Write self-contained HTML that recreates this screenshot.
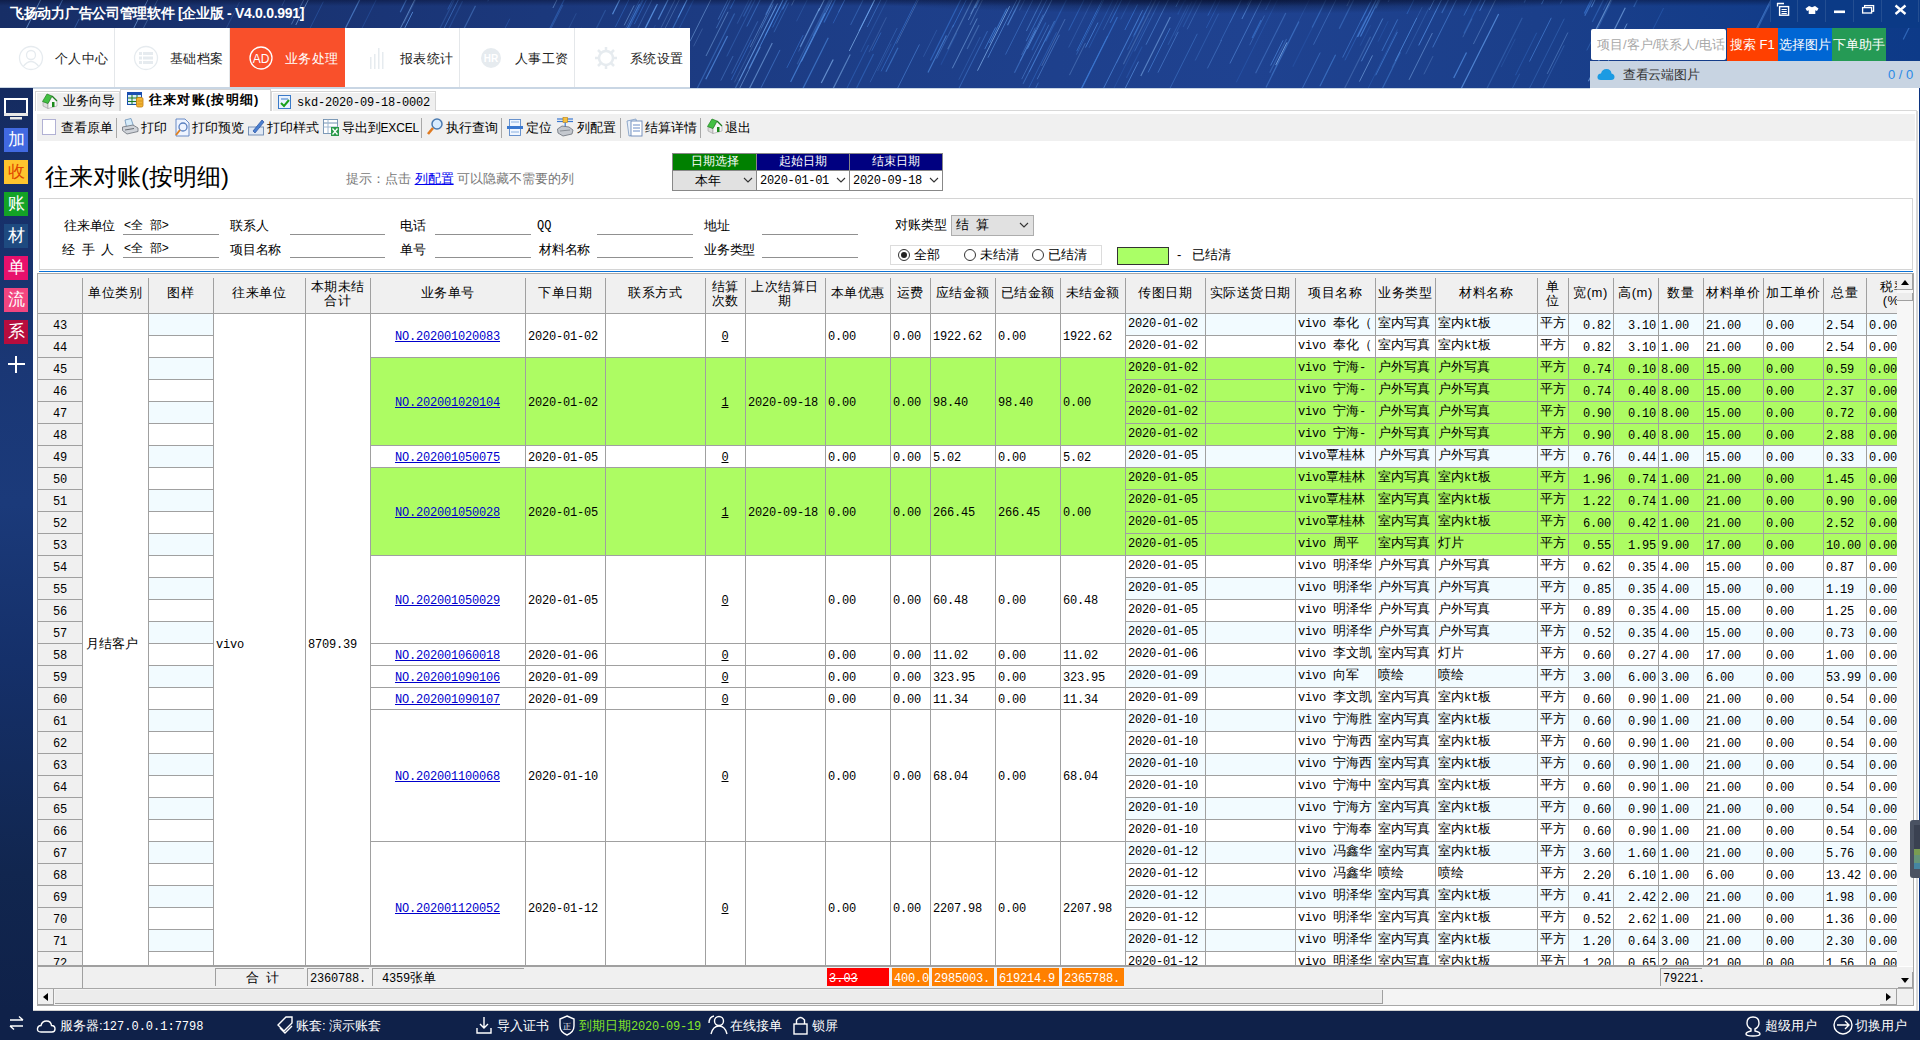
<!DOCTYPE html><html><head><meta charset="utf-8"><title>往来对账</title><style>
*{margin:0;padding:0;box-sizing:border-box}
html,body{width:1920px;height:1040px;overflow:hidden;background:#fff;font-family:"Liberation Sans", sans-serif;}
body{position:relative}
.t{position:absolute;white-space:nowrap}
.c{font-size:13px;color:#000}
.tb{font-size:12px;color:#000;line-height:16px}
.m{font-family:'Liberation Mono', monospace;}
.gl{position:absolute;background:#a0a0a0}
</style></head><body>
<div style="position:absolute;left:0;top:0;width:1920px;height:88px;background:linear-gradient(90deg,#172e66 0%,#1a3576 20%,#1d3e88 45%,#1f4290 65%,#1b3f8a 80%,#0d3a88 100%)"></div>
<svg style="position:absolute;left:0;top:0" width="1920" height="88"><line x1="895.7" y1="92.0" x2="919.5" y2="44.4" stroke="#5a9af0" stroke-opacity="0.45" stroke-width="1.0"/><line x1="1247.2" y1="4.9" x2="1265.3" y2="-31.4" stroke="#4f8fe6" stroke-opacity="0.25" stroke-width="1.2"/><line x1="1218.8" y1="-3.4" x2="1244.8" y2="-55.4" stroke="#69a6f5" stroke-opacity="0.23" stroke-width="1.0"/><line x1="1187.2" y1="29.3" x2="1215.4" y2="-27.1" stroke="#69a6f5" stroke-opacity="0.30" stroke-width="1.0"/><line x1="989.6" y1="43.0" x2="1006.8" y2="8.5" stroke="#4f8fe6" stroke-opacity="0.70" stroke-width="1.0"/><line x1="624.2" y1="25.3" x2="634.2" y2="5.4" stroke="#8cbcf5" stroke-opacity="0.58" stroke-width="0.8"/><line x1="1541.5" y1="4.2" x2="1560.6" y2="-34.1" stroke="#4f8fe6" stroke-opacity="0.68" stroke-width="1.0"/><line x1="487.8" y1="1.3" x2="523.2" y2="-69.5" stroke="#5a9af0" stroke-opacity="0.29" stroke-width="1.0"/><line x1="885.9" y1="71.8" x2="898.0" y2="47.7" stroke="#4f8fe6" stroke-opacity="0.52" stroke-width="1.2"/><line x1="833.1" y1="23.3" x2="874.6" y2="-59.6" stroke="#3b79d6" stroke-opacity="0.60" stroke-width="0.8"/><line x1="422.2" y1="76.1" x2="441.2" y2="38.1" stroke="#4f8fe6" stroke-opacity="0.35" stroke-width="0.8"/><line x1="736.0" y1="95.7" x2="760.4" y2="46.8" stroke="#8cbcf5" stroke-opacity="0.49" stroke-width="1.0"/><line x1="1241.9" y1="19.0" x2="1270.8" y2="-38.8" stroke="#69a6f5" stroke-opacity="0.56" stroke-width="1.0"/><line x1="1360.2" y1="45.7" x2="1370.5" y2="25.2" stroke="#4f8fe6" stroke-opacity="0.22" stroke-width="0.8"/><line x1="1014.5" y1="72.7" x2="1035.7" y2="30.3" stroke="#5a9af0" stroke-opacity="0.41" stroke-width="1.2"/><line x1="581.0" y1="70.6" x2="590.9" y2="50.8" stroke="#5a9af0" stroke-opacity="0.31" stroke-width="0.8"/><line x1="403.9" y1="23.3" x2="427.0" y2="-22.9" stroke="#69a6f5" stroke-opacity="0.23" stroke-width="1.0"/><line x1="730.2" y1="8.8" x2="750.4" y2="-31.5" stroke="#3b79d6" stroke-opacity="0.65" stroke-width="1.0"/><line x1="1168.0" y1="44.9" x2="1188.0" y2="4.8" stroke="#4f8fe6" stroke-opacity="0.36" stroke-width="0.8"/><line x1="1184.8" y1="2.1" x2="1203.2" y2="-34.7" stroke="#4f8fe6" stroke-opacity="0.27" stroke-width="0.8"/><line x1="897.1" y1="-0.3" x2="937.4" y2="-80.9" stroke="#69a6f5" stroke-opacity="0.57" stroke-width="1.0"/><line x1="696.6" y1="89.6" x2="734.6" y2="13.6" stroke="#4f8fe6" stroke-opacity="0.41" stroke-width="1.2"/><line x1="1134.2" y1="35.1" x2="1162.1" y2="-20.6" stroke="#4f8fe6" stroke-opacity="0.50" stroke-width="0.8"/><line x1="1266.0" y1="87.4" x2="1299.0" y2="21.4" stroke="#5a9af0" stroke-opacity="0.39" stroke-width="1.2"/><line x1="872.2" y1="3.8" x2="906.0" y2="-63.7" stroke="#5a9af0" stroke-opacity="0.21" stroke-width="0.8"/><line x1="952.3" y1="68.3" x2="977.2" y2="18.5" stroke="#8cbcf5" stroke-opacity="0.51" stroke-width="1.0"/><line x1="1026.4" y1="31.0" x2="1066.5" y2="-49.2" stroke="#69a6f5" stroke-opacity="0.45" stroke-width="1.0"/><line x1="801.4" y1="61.6" x2="837.0" y2="-9.7" stroke="#69a6f5" stroke-opacity="0.58" stroke-width="1.0"/><line x1="761.1" y1="28.2" x2="773.4" y2="3.7" stroke="#4f8fe6" stroke-opacity="0.45" stroke-width="0.8"/><line x1="544.8" y1="38.5" x2="574.2" y2="-20.3" stroke="#3b79d6" stroke-opacity="0.45" stroke-width="1.2"/><line x1="634.3" y1="24.2" x2="663.0" y2="-33.3" stroke="#3b79d6" stroke-opacity="0.54" stroke-width="1.0"/><line x1="611.9" y1="-3.0" x2="624.1" y2="-27.5" stroke="#4f8fe6" stroke-opacity="0.43" stroke-width="1.0"/><line x1="470.1" y1="-0.1" x2="499.6" y2="-59.1" stroke="#5a9af0" stroke-opacity="0.42" stroke-width="1.0"/><line x1="353.8" y1="44.6" x2="386.3" y2="-20.4" stroke="#3b79d6" stroke-opacity="0.29" stroke-width="1.0"/><line x1="1068.6" y1="47.5" x2="1111.0" y2="-37.2" stroke="#69a6f5" stroke-opacity="0.28" stroke-width="0.8"/><line x1="812.8" y1="35.7" x2="836.0" y2="-10.8" stroke="#4f8fe6" stroke-opacity="0.30" stroke-width="1.2"/><line x1="1089.0" y1="47.8" x2="1125.2" y2="-24.6" stroke="#3b79d6" stroke-opacity="0.37" stroke-width="1.0"/><line x1="772.6" y1="27.5" x2="814.3" y2="-55.8" stroke="#3b79d6" stroke-opacity="0.67" stroke-width="0.8"/><line x1="690.0" y1="41.3" x2="716.8" y2="-12.2" stroke="#8cbcf5" stroke-opacity="0.58" stroke-width="0.8"/><line x1="849.3" y1="51.0" x2="880.8" y2="-12.1" stroke="#8cbcf5" stroke-opacity="0.66" stroke-width="1.0"/><line x1="1026.1" y1="41.2" x2="1064.4" y2="-35.4" stroke="#4f8fe6" stroke-opacity="0.49" stroke-width="1.0"/><line x1="870.1" y1="82.3" x2="897.2" y2="28.0" stroke="#5a9af0" stroke-opacity="0.28" stroke-width="1.0"/><line x1="617.2" y1="83.8" x2="656.2" y2="5.7" stroke="#69a6f5" stroke-opacity="0.30" stroke-width="1.0"/><line x1="1134.5" y1="51.3" x2="1159.6" y2="1.0" stroke="#4f8fe6" stroke-opacity="0.50" stroke-width="0.8"/><line x1="1021.7" y1="79.1" x2="1048.9" y2="24.7" stroke="#69a6f5" stroke-opacity="0.45" stroke-width="0.8"/><line x1="800.2" y1="46.8" x2="819.6" y2="8.0" stroke="#8cbcf5" stroke-opacity="0.65" stroke-width="1.0"/><line x1="1390.2" y1="-1.3" x2="1403.1" y2="-27.1" stroke="#3b79d6" stroke-opacity="0.21" stroke-width="1.0"/><line x1="1432.7" y1="47.4" x2="1457.7" y2="-2.6" stroke="#5a9af0" stroke-opacity="0.49" stroke-width="1.0"/><line x1="1739.9" y1="61.5" x2="1776.3" y2="-11.3" stroke="#5a9af0" stroke-opacity="0.51" stroke-width="1.0"/><line x1="432.3" y1="52.0" x2="460.4" y2="-4.1" stroke="#3b79d6" stroke-opacity="0.27" stroke-width="1.0"/><line x1="625.4" y1="91.9" x2="640.6" y2="61.6" stroke="#4f8fe6" stroke-opacity="0.70" stroke-width="1.0"/><line x1="860.9" y1="52.0" x2="893.1" y2="-12.3" stroke="#4f8fe6" stroke-opacity="0.30" stroke-width="0.8"/><line x1="1501.1" y1="67.0" x2="1515.3" y2="38.8" stroke="#4f8fe6" stroke-opacity="0.24" stroke-width="0.8"/><line x1="1019.4" y1="10.4" x2="1033.3" y2="-17.5" stroke="#69a6f5" stroke-opacity="0.30" stroke-width="1.0"/><line x1="1835.2" y1="1.5" x2="1876.0" y2="-80.1" stroke="#4f8fe6" stroke-opacity="0.43" stroke-width="1.0"/><line x1="774.0" y1="32.2" x2="788.8" y2="2.5" stroke="#4f8fe6" stroke-opacity="0.39" stroke-width="1.0"/><line x1="1463.9" y1="15.5" x2="1477.2" y2="-11.1" stroke="#4f8fe6" stroke-opacity="0.46" stroke-width="1.0"/><line x1="1395.2" y1="61.1" x2="1416.9" y2="17.8" stroke="#5a9af0" stroke-opacity="0.50" stroke-width="1.0"/><line x1="1593.5" y1="90.7" x2="1627.1" y2="23.6" stroke="#8cbcf5" stroke-opacity="0.59" stroke-width="1.0"/><line x1="1375.7" y1="75.3" x2="1397.4" y2="31.9" stroke="#4f8fe6" stroke-opacity="0.56" stroke-width="1.0"/><line x1="597.3" y1="88.2" x2="639.5" y2="3.9" stroke="#4f8fe6" stroke-opacity="0.65" stroke-width="1.0"/><line x1="591.8" y1="37.6" x2="605.6" y2="9.9" stroke="#5a9af0" stroke-opacity="0.24" stroke-width="1.2"/><line x1="1271.7" y1="75.0" x2="1313.5" y2="-8.6" stroke="#5a9af0" stroke-opacity="0.21" stroke-width="0.8"/><line x1="1462.8" y1="37.2" x2="1472.1" y2="18.6" stroke="#8cbcf5" stroke-opacity="0.30" stroke-width="0.8"/><line x1="1005.5" y1="54.6" x2="1047.8" y2="-30.0" stroke="#4f8fe6" stroke-opacity="0.52" stroke-width="0.8"/><line x1="765.1" y1="35.5" x2="806.6" y2="-47.4" stroke="#5a9af0" stroke-opacity="0.63" stroke-width="0.8"/><line x1="850.6" y1="24.9" x2="872.0" y2="-18.0" stroke="#5a9af0" stroke-opacity="0.36" stroke-width="1.0"/><line x1="956.8" y1="92.6" x2="987.5" y2="31.1" stroke="#4f8fe6" stroke-opacity="0.57" stroke-width="0.8"/><line x1="1529.5" y1="61.5" x2="1551.3" y2="17.8" stroke="#4f8fe6" stroke-opacity="0.54" stroke-width="1.0"/><line x1="1481.8" y1="98.8" x2="1522.3" y2="17.7" stroke="#69a6f5" stroke-opacity="0.24" stroke-width="1.2"/><line x1="1423.9" y1="74.3" x2="1433.0" y2="56.1" stroke="#8cbcf5" stroke-opacity="0.25" stroke-width="1.0"/><line x1="1195.2" y1="60.5" x2="1218.6" y2="13.6" stroke="#4f8fe6" stroke-opacity="0.30" stroke-width="1.0"/><line x1="1045.6" y1="41.5" x2="1076.5" y2="-20.3" stroke="#3b79d6" stroke-opacity="0.43" stroke-width="1.2"/><line x1="720.8" y1="80.6" x2="733.1" y2="56.0" stroke="#69a6f5" stroke-opacity="0.35" stroke-width="1.0"/><line x1="952.6" y1="27.4" x2="977.8" y2="-23.1" stroke="#3b79d6" stroke-opacity="0.62" stroke-width="1.0"/><line x1="1207.4" y1="68.4" x2="1221.6" y2="40.1" stroke="#69a6f5" stroke-opacity="0.34" stroke-width="1.0"/><line x1="1292.8" y1="66.7" x2="1322.3" y2="7.7" stroke="#3b79d6" stroke-opacity="0.20" stroke-width="1.2"/><line x1="53.3" y1="18.4" x2="70.5" y2="-16.1" stroke="#69a6f5" stroke-opacity="0.58" stroke-width="1.0"/><line x1="1249.6" y1="45.2" x2="1264.5" y2="15.5" stroke="#69a6f5" stroke-opacity="0.37" stroke-width="0.8"/><line x1="1588.5" y1="81.3" x2="1625.3" y2="7.7" stroke="#8cbcf5" stroke-opacity="0.58" stroke-width="1.2"/><line x1="1479.7" y1="10.8" x2="1492.6" y2="-14.9" stroke="#5a9af0" stroke-opacity="0.62" stroke-width="1.0"/><line x1="1635.8" y1="63.6" x2="1663.6" y2="8.0" stroke="#3b79d6" stroke-opacity="0.43" stroke-width="0.8"/><line x1="1076.4" y1="54.6" x2="1112.4" y2="-17.4" stroke="#4f8fe6" stroke-opacity="0.43" stroke-width="0.8"/><line x1="614.1" y1="58.4" x2="645.9" y2="-5.3" stroke="#3b79d6" stroke-opacity="0.45" stroke-width="1.0"/><line x1="1301.4" y1="90.2" x2="1320.2" y2="52.6" stroke="#5a9af0" stroke-opacity="0.42" stroke-width="1.0"/><line x1="867.2" y1="27.0" x2="885.8" y2="-10.2" stroke="#5a9af0" stroke-opacity="0.40" stroke-width="1.0"/><line x1="1157.9" y1="72.6" x2="1178.3" y2="31.8" stroke="#69a6f5" stroke-opacity="0.40" stroke-width="1.0"/><line x1="1077.4" y1="96.5" x2="1107.7" y2="35.9" stroke="#4f8fe6" stroke-opacity="0.60" stroke-width="1.0"/><line x1="1560.4" y1="3.6" x2="1593.7" y2="-63.0" stroke="#4f8fe6" stroke-opacity="0.65" stroke-width="0.8"/><line x1="1255.6" y1="73.3" x2="1285.8" y2="12.9" stroke="#69a6f5" stroke-opacity="0.32" stroke-width="1.2"/><line x1="1515.4" y1="75.3" x2="1536.7" y2="32.7" stroke="#3b79d6" stroke-opacity="0.37" stroke-width="1.0"/><line x1="977.5" y1="70.7" x2="1009.7" y2="6.1" stroke="#8cbcf5" stroke-opacity="0.66" stroke-width="1.0"/><line x1="1037.2" y1="79.2" x2="1059.5" y2="34.7" stroke="#69a6f5" stroke-opacity="0.41" stroke-width="1.0"/><line x1="743.5" y1="16.5" x2="765.9" y2="-28.3" stroke="#4f8fe6" stroke-opacity="0.35" stroke-width="1.2"/><line x1="610.7" y1="63.0" x2="645.4" y2="-6.3" stroke="#4f8fe6" stroke-opacity="0.29" stroke-width="1.2"/><line x1="1584.8" y1="15.8" x2="1604.9" y2="-24.4" stroke="#5a9af0" stroke-opacity="0.49" stroke-width="1.2"/><line x1="1177.7" y1="14.4" x2="1195.0" y2="-20.3" stroke="#3b79d6" stroke-opacity="0.29" stroke-width="1.2"/><line x1="797.2" y1="64.3" x2="831.7" y2="-4.7" stroke="#69a6f5" stroke-opacity="0.25" stroke-width="1.2"/><line x1="1586.8" y1="50.4" x2="1612.4" y2="-0.7" stroke="#4f8fe6" stroke-opacity="0.34" stroke-width="1.0"/><line x1="1528.4" y1="90.4" x2="1564.3" y2="18.7" stroke="#5a9af0" stroke-opacity="0.27" stroke-width="1.0"/><line x1="1021.6" y1="55.0" x2="1035.3" y2="27.6" stroke="#69a6f5" stroke-opacity="0.30" stroke-width="1.0"/><line x1="1418.7" y1="45.4" x2="1442.6" y2="-2.4" stroke="#5a9af0" stroke-opacity="0.68" stroke-width="1.0"/><line x1="1547.2" y1="-1.1" x2="1569.2" y2="-45.0" stroke="#3b79d6" stroke-opacity="0.45" stroke-width="1.0"/><line x1="615.3" y1="27.1" x2="639.1" y2="-20.6" stroke="#3b79d6" stroke-opacity="0.56" stroke-width="0.8"/><line x1="1360.4" y1="36.4" x2="1384.1" y2="-10.9" stroke="#4f8fe6" stroke-opacity="0.68" stroke-width="1.2"/><line x1="1405.8" y1="54.2" x2="1429.3" y2="7.2" stroke="#69a6f5" stroke-opacity="0.21" stroke-width="1.0"/><line x1="1068.7" y1="30.4" x2="1090.0" y2="-12.0" stroke="#3b79d6" stroke-opacity="0.53" stroke-width="1.0"/><line x1="652.2" y1="54.1" x2="685.0" y2="-11.6" stroke="#8cbcf5" stroke-opacity="0.37" stroke-width="0.8"/><line x1="354.9" y1="-1.2" x2="378.6" y2="-48.6" stroke="#4f8fe6" stroke-opacity="0.55" stroke-width="1.0"/><line x1="859.0" y1="30.9" x2="895.3" y2="-41.8" stroke="#69a6f5" stroke-opacity="0.66" stroke-width="1.0"/><line x1="764.2" y1="38.3" x2="772.2" y2="22.2" stroke="#3b79d6" stroke-opacity="0.40" stroke-width="1.0"/><line x1="1307.3" y1="-3.1" x2="1326.3" y2="-41.2" stroke="#8cbcf5" stroke-opacity="0.37" stroke-width="0.8"/><line x1="1103.3" y1="29.9" x2="1121.0" y2="-5.6" stroke="#69a6f5" stroke-opacity="0.25" stroke-width="1.0"/><line x1="1085.5" y1="47.5" x2="1098.0" y2="22.6" stroke="#5a9af0" stroke-opacity="0.56" stroke-width="1.0"/><line x1="1123.4" y1="64.2" x2="1158.1" y2="-5.1" stroke="#8cbcf5" stroke-opacity="0.27" stroke-width="1.2"/><line x1="1380.3" y1="92.6" x2="1400.4" y2="52.3" stroke="#4f8fe6" stroke-opacity="0.43" stroke-width="1.2"/><line x1="1110.2" y1="22.8" x2="1149.6" y2="-55.9" stroke="#3b79d6" stroke-opacity="0.70" stroke-width="1.0"/><line x1="1644.9" y1="52.5" x2="1655.1" y2="32.2" stroke="#69a6f5" stroke-opacity="0.22" stroke-width="1.0"/><line x1="609.1" y1="72.5" x2="630.0" y2="30.7" stroke="#4f8fe6" stroke-opacity="0.50" stroke-width="1.0"/><line x1="1127.6" y1="49.6" x2="1144.4" y2="16.1" stroke="#3b79d6" stroke-opacity="0.48" stroke-width="0.8"/><line x1="1270.6" y1="65.5" x2="1283.1" y2="40.3" stroke="#5a9af0" stroke-opacity="0.68" stroke-width="0.8"/><line x1="930.4" y1="60.5" x2="962.0" y2="-2.8" stroke="#3b79d6" stroke-opacity="0.58" stroke-width="1.2"/><line x1="1633.7" y1="7.0" x2="1674.1" y2="-73.7" stroke="#5a9af0" stroke-opacity="0.37" stroke-width="1.2"/><line x1="832.3" y1="90.3" x2="850.2" y2="54.5" stroke="#8cbcf5" stroke-opacity="0.51" stroke-width="1.2"/><line x1="1183.1" y1="27.0" x2="1211.4" y2="-29.5" stroke="#4f8fe6" stroke-opacity="0.23" stroke-width="1.2"/><line x1="1079.1" y1="93.7" x2="1117.4" y2="17.1" stroke="#3b79d6" stroke-opacity="0.70" stroke-width="1.2"/><line x1="1116.6" y1="63.2" x2="1138.9" y2="18.7" stroke="#4f8fe6" stroke-opacity="0.26" stroke-width="0.8"/><line x1="1028.9" y1="87.6" x2="1056.5" y2="32.3" stroke="#3b79d6" stroke-opacity="0.43" stroke-width="1.0"/><line x1="1441.8" y1="13.1" x2="1464.7" y2="-32.8" stroke="#5a9af0" stroke-opacity="0.43" stroke-width="1.2"/><line x1="457.0" y1="42.8" x2="475.5" y2="5.8" stroke="#69a6f5" stroke-opacity="0.36" stroke-width="1.2"/><line x1="1381.9" y1="51.0" x2="1397.7" y2="19.4" stroke="#4f8fe6" stroke-opacity="0.67" stroke-width="0.8"/><line x1="606.0" y1="95.9" x2="623.1" y2="61.8" stroke="#69a6f5" stroke-opacity="0.41" stroke-width="1.0"/><line x1="1378.0" y1="41.7" x2="1388.2" y2="21.2" stroke="#3b79d6" stroke-opacity="0.31" stroke-width="0.8"/><line x1="1406.9" y1="14.0" x2="1422.6" y2="-17.5" stroke="#3b79d6" stroke-opacity="0.53" stroke-width="1.0"/><line x1="1591.4" y1="7.2" x2="1616.9" y2="-44.0" stroke="#69a6f5" stroke-opacity="0.69" stroke-width="1.0"/><line x1="871.9" y1="50.7" x2="881.0" y2="32.6" stroke="#3b79d6" stroke-opacity="0.50" stroke-width="1.0"/><line x1="838.4" y1="12.3" x2="880.5" y2="-71.9" stroke="#69a6f5" stroke-opacity="0.29" stroke-width="1.0"/><line x1="1453.7" y1="78.0" x2="1466.5" y2="52.4" stroke="#5a9af0" stroke-opacity="0.65" stroke-width="1.2"/><line x1="119.2" y1="76.6" x2="158.6" y2="-2.1" stroke="#8cbcf5" stroke-opacity="0.36" stroke-width="0.8"/><line x1="1023.1" y1="83.8" x2="1054.6" y2="20.9" stroke="#5a9af0" stroke-opacity="0.46" stroke-width="1.0"/><line x1="1175.9" y1="6.8" x2="1198.6" y2="-38.7" stroke="#5a9af0" stroke-opacity="0.53" stroke-width="1.0"/><line x1="987.9" y1="57.7" x2="1020.5" y2="-7.4" stroke="#69a6f5" stroke-opacity="0.49" stroke-width="1.0"/><line x1="300.6" y1="47.1" x2="323.3" y2="1.7" stroke="#3b79d6" stroke-opacity="0.42" stroke-width="0.8"/><line x1="1126.4" y1="78.1" x2="1142.2" y2="46.5" stroke="#3b79d6" stroke-opacity="0.27" stroke-width="1.2"/><line x1="1230.0" y1="22.8" x2="1258.1" y2="-33.4" stroke="#5a9af0" stroke-opacity="0.24" stroke-width="1.0"/><line x1="750.1" y1="47.2" x2="780.7" y2="-14.0" stroke="#8cbcf5" stroke-opacity="0.50" stroke-width="0.8"/><line x1="625.3" y1="68.4" x2="657.4" y2="4.1" stroke="#69a6f5" stroke-opacity="0.68" stroke-width="1.2"/><line x1="1032.9" y1="-4.6" x2="1054.8" y2="-48.3" stroke="#4f8fe6" stroke-opacity="0.46" stroke-width="1.2"/><line x1="1101.1" y1="93.2" x2="1142.6" y2="10.2" stroke="#5a9af0" stroke-opacity="0.54" stroke-width="1.0"/><line x1="585.5" y1="84.8" x2="607.6" y2="40.5" stroke="#69a6f5" stroke-opacity="0.24" stroke-width="1.0"/><line x1="611.4" y1="91.9" x2="626.6" y2="61.6" stroke="#5a9af0" stroke-opacity="0.28" stroke-width="0.8"/><line x1="1460.1" y1="90.8" x2="1498.6" y2="13.9" stroke="#69a6f5" stroke-opacity="0.66" stroke-width="1.2"/><line x1="1592.2" y1="37.0" x2="1620.5" y2="-19.5" stroke="#8cbcf5" stroke-opacity="0.58" stroke-width="1.2"/><line x1="970.6" y1="14.1" x2="995.2" y2="-35.0" stroke="#8cbcf5" stroke-opacity="0.47" stroke-width="0.8"/><line x1="1027.4" y1="48.8" x2="1054.8" y2="-5.9" stroke="#69a6f5" stroke-opacity="0.52" stroke-width="1.0"/><line x1="204.8" y1="71.4" x2="239.4" y2="2.1" stroke="#69a6f5" stroke-opacity="0.27" stroke-width="0.8"/><line x1="761.1" y1="87.7" x2="780.0" y2="49.9" stroke="#5a9af0" stroke-opacity="0.59" stroke-width="0.8"/><line x1="967.1" y1="49.0" x2="979.1" y2="25.0" stroke="#8cbcf5" stroke-opacity="0.30" stroke-width="1.2"/><line x1="947.7" y1="49.3" x2="974.4" y2="-4.1" stroke="#8cbcf5" stroke-opacity="0.36" stroke-width="1.2"/><line x1="291.4" y1="24.4" x2="323.9" y2="-40.5" stroke="#8cbcf5" stroke-opacity="0.40" stroke-width="1.0"/><line x1="447.6" y1="31.2" x2="462.6" y2="1.1" stroke="#4f8fe6" stroke-opacity="0.22" stroke-width="1.2"/><line x1="1120.6" y1="97.4" x2="1138.5" y2="61.6" stroke="#69a6f5" stroke-opacity="0.54" stroke-width="1.0"/><line x1="1319.9" y1="86.2" x2="1335.6" y2="54.8" stroke="#4f8fe6" stroke-opacity="0.52" stroke-width="1.2"/><line x1="970.0" y1="24.9" x2="1002.1" y2="-39.4" stroke="#8cbcf5" stroke-opacity="0.31" stroke-width="1.0"/><line x1="940.9" y1="64.8" x2="956.8" y2="33.1" stroke="#3b79d6" stroke-opacity="0.25" stroke-width="1.2"/><line x1="1592.3" y1="22.0" x2="1629.7" y2="-52.7" stroke="#4f8fe6" stroke-opacity="0.35" stroke-width="1.2"/><line x1="746.8" y1="26.5" x2="779.5" y2="-38.8" stroke="#4f8fe6" stroke-opacity="0.64" stroke-width="0.8"/><line x1="739.1" y1="80.6" x2="777.6" y2="3.5" stroke="#8cbcf5" stroke-opacity="0.52" stroke-width="1.0"/><line x1="1140.8" y1="76.0" x2="1170.3" y2="17.1" stroke="#8cbcf5" stroke-opacity="0.51" stroke-width="1.2"/><line x1="126.0" y1="43.7" x2="149.2" y2="-2.8" stroke="#8cbcf5" stroke-opacity="0.68" stroke-width="0.8"/><line x1="936.6" y1="58.6" x2="953.6" y2="24.7" stroke="#69a6f5" stroke-opacity="0.33" stroke-width="1.0"/><line x1="1030.8" y1="97.9" x2="1038.4" y2="82.6" stroke="#5a9af0" stroke-opacity="0.47" stroke-width="0.8"/><line x1="1236.3" y1="82.3" x2="1277.7" y2="-0.6" stroke="#3b79d6" stroke-opacity="0.37" stroke-width="0.8"/><line x1="1359.4" y1="81.6" x2="1372.5" y2="55.4" stroke="#8cbcf5" stroke-opacity="0.51" stroke-width="1.0"/><line x1="731.7" y1="73.6" x2="757.8" y2="21.3" stroke="#69a6f5" stroke-opacity="0.32" stroke-width="1.0"/><line x1="643.5" y1="48.9" x2="655.4" y2="25.1" stroke="#4f8fe6" stroke-opacity="0.23" stroke-width="0.8"/><line x1="1344.9" y1="60.3" x2="1366.9" y2="16.4" stroke="#3b79d6" stroke-opacity="0.44" stroke-width="1.0"/><line x1="786.8" y1="67.9" x2="803.2" y2="35.1" stroke="#3b79d6" stroke-opacity="0.52" stroke-width="1.0"/><line x1="1269.7" y1="72.7" x2="1286.6" y2="38.9" stroke="#69a6f5" stroke-opacity="0.28" stroke-width="1.2"/><line x1="1229.9" y1="63.5" x2="1271.5" y2="-19.7" stroke="#69a6f5" stroke-opacity="0.44" stroke-width="1.0"/><line x1="1361.4" y1="61.3" x2="1382.8" y2="18.5" stroke="#69a6f5" stroke-opacity="0.67" stroke-width="0.8"/><line x1="705.8" y1="79.2" x2="727.5" y2="35.9" stroke="#5a9af0" stroke-opacity="0.65" stroke-width="1.2"/><line x1="339.0" y1="41.1" x2="377.0" y2="-34.8" stroke="#69a6f5" stroke-opacity="0.52" stroke-width="1.2"/><line x1="1429.3" y1="9.9" x2="1457.0" y2="-45.4" stroke="#69a6f5" stroke-opacity="0.54" stroke-width="1.0"/><line x1="1584.3" y1="13.4" x2="1595.6" y2="-9.1" stroke="#3b79d6" stroke-opacity="0.67" stroke-width="1.2"/><line x1="856.6" y1="87.9" x2="873.5" y2="54.0" stroke="#3b79d6" stroke-opacity="0.48" stroke-width="1.2"/><line x1="542.5" y1="45.6" x2="562.9" y2="5.0" stroke="#4f8fe6" stroke-opacity="0.33" stroke-width="1.0"/><line x1="612.5" y1="14.2" x2="636.9" y2="-34.7" stroke="#69a6f5" stroke-opacity="0.70" stroke-width="1.2"/><line x1="958.8" y1="79.7" x2="980.2" y2="37.0" stroke="#5a9af0" stroke-opacity="0.23" stroke-width="1.0"/><line x1="877.5" y1="71.1" x2="891.2" y2="43.8" stroke="#69a6f5" stroke-opacity="0.21" stroke-width="0.8"/><line x1="1336.2" y1="-2.5" x2="1363.1" y2="-56.4" stroke="#8cbcf5" stroke-opacity="0.23" stroke-width="0.8"/><line x1="1755.2" y1="33.3" x2="1789.5" y2="-35.4" stroke="#69a6f5" stroke-opacity="0.33" stroke-width="1.2"/><line x1="790.6" y1="81.9" x2="824.9" y2="13.2" stroke="#4f8fe6" stroke-opacity="0.69" stroke-width="1.2"/><line x1="796.5" y1="21.3" x2="835.8" y2="-57.4" stroke="#5a9af0" stroke-opacity="0.21" stroke-width="1.0"/><line x1="731.3" y1="80.1" x2="751.5" y2="39.6" stroke="#3b79d6" stroke-opacity="0.52" stroke-width="1.0"/><line x1="636.8" y1="30.2" x2="670.3" y2="-36.8" stroke="#69a6f5" stroke-opacity="0.31" stroke-width="1.0"/><line x1="1346.8" y1="6.1" x2="1359.3" y2="-18.9" stroke="#8cbcf5" stroke-opacity="0.38" stroke-width="0.8"/><line x1="798.6" y1="51.4" x2="839.5" y2="-30.3" stroke="#69a6f5" stroke-opacity="0.30" stroke-width="1.0"/><line x1="1146.0" y1="44.7" x2="1186.4" y2="-36.0" stroke="#69a6f5" stroke-opacity="0.45" stroke-width="1.0"/><line x1="1539.8" y1="-3.9" x2="1572.9" y2="-70.1" stroke="#4f8fe6" stroke-opacity="0.53" stroke-width="1.0"/><line x1="1220.6" y1="41.1" x2="1253.1" y2="-23.9" stroke="#5a9af0" stroke-opacity="0.41" stroke-width="0.8"/><line x1="1473.4" y1="44.1" x2="1510.2" y2="-29.5" stroke="#8cbcf5" stroke-opacity="0.45" stroke-width="0.8"/><line x1="1020.2" y1="60.9" x2="1043.3" y2="14.6" stroke="#5a9af0" stroke-opacity="0.50" stroke-width="0.8"/><line x1="928.0" y1="72.5" x2="946.4" y2="35.6" stroke="#5a9af0" stroke-opacity="0.57" stroke-width="1.2"/><line x1="281.9" y1="5.9" x2="298.2" y2="-26.7" stroke="#69a6f5" stroke-opacity="0.33" stroke-width="0.8"/><line x1="1409.0" y1="79.8" x2="1432.4" y2="33.0" stroke="#8cbcf5" stroke-opacity="0.47" stroke-width="1.0"/><line x1="968.3" y1="20.0" x2="979.6" y2="-2.5" stroke="#8cbcf5" stroke-opacity="0.42" stroke-width="1.0"/><line x1="1926.0" y1="93.9" x2="1961.9" y2="22.1" stroke="#3b79d6" stroke-opacity="0.29" stroke-width="0.8"/><line x1="434.8" y1="38.7" x2="463.8" y2="-19.3" stroke="#5a9af0" stroke-opacity="0.22" stroke-width="1.2"/><line x1="1785.6" y1="98.7" x2="1800.3" y2="69.3" stroke="#69a6f5" stroke-opacity="0.51" stroke-width="1.2"/><line x1="748.9" y1="68.5" x2="785.9" y2="-5.6" stroke="#5a9af0" stroke-opacity="0.67" stroke-width="1.0"/><line x1="1375.8" y1="8.4" x2="1407.6" y2="-55.1" stroke="#69a6f5" stroke-opacity="0.43" stroke-width="1.0"/><line x1="1207.8" y1="15.6" x2="1250.2" y2="-69.0" stroke="#3b79d6" stroke-opacity="0.55" stroke-width="1.0"/><line x1="1524.2" y1="2.5" x2="1541.0" y2="-31.1" stroke="#5a9af0" stroke-opacity="0.39" stroke-width="1.2"/><line x1="552.9" y1="8.0" x2="563.7" y2="-13.7" stroke="#8cbcf5" stroke-opacity="0.46" stroke-width="1.0"/><line x1="975.3" y1="7.9" x2="1013.5" y2="-68.4" stroke="#4f8fe6" stroke-opacity="0.68" stroke-width="1.2"/><line x1="726.8" y1="56.4" x2="757.3" y2="-4.7" stroke="#4f8fe6" stroke-opacity="0.33" stroke-width="1.0"/><line x1="1174.7" y1="35.7" x2="1192.0" y2="1.3" stroke="#5a9af0" stroke-opacity="0.25" stroke-width="0.8"/><line x1="1080.9" y1="89.1" x2="1091.5" y2="67.9" stroke="#3b79d6" stroke-opacity="0.38" stroke-width="0.8"/><line x1="680.9" y1="94.7" x2="689.2" y2="78.1" stroke="#8cbcf5" stroke-opacity="0.52" stroke-width="0.8"/><line x1="716.3" y1="28.2" x2="747.2" y2="-33.8" stroke="#69a6f5" stroke-opacity="0.50" stroke-width="0.8"/><line x1="1388.1" y1="2.0" x2="1411.7" y2="-45.4" stroke="#69a6f5" stroke-opacity="0.40" stroke-width="1.0"/><line x1="984.7" y1="49.1" x2="995.6" y2="27.4" stroke="#4f8fe6" stroke-opacity="0.60" stroke-width="1.0"/><line x1="1313.5" y1="44.7" x2="1351.9" y2="-32.1" stroke="#69a6f5" stroke-opacity="0.42" stroke-width="0.8"/><line x1="734.4" y1="82.4" x2="772.8" y2="5.6" stroke="#8cbcf5" stroke-opacity="0.25" stroke-width="0.8"/><line x1="1536.9" y1="99.9" x2="1564.2" y2="45.4" stroke="#69a6f5" stroke-opacity="0.23" stroke-width="1.0"/><line x1="1312.1" y1="27.4" x2="1332.0" y2="-12.3" stroke="#5a9af0" stroke-opacity="0.32" stroke-width="1.2"/><line x1="923.4" y1="56.8" x2="936.9" y2="29.9" stroke="#69a6f5" stroke-opacity="0.25" stroke-width="0.8"/><line x1="1603.2" y1="10.1" x2="1630.4" y2="-44.4" stroke="#5a9af0" stroke-opacity="0.29" stroke-width="0.8"/><line x1="818.5" y1="11.1" x2="854.6" y2="-61.1" stroke="#8cbcf5" stroke-opacity="0.57" stroke-width="1.0"/><line x1="801.8" y1="90.8" x2="828.3" y2="37.7" stroke="#4f8fe6" stroke-opacity="0.58" stroke-width="1.2"/><line x1="824.0" y1="22.4" x2="835.4" y2="-0.4" stroke="#3b79d6" stroke-opacity="0.66" stroke-width="1.2"/><line x1="1109.0" y1="98.1" x2="1149.0" y2="18.2" stroke="#3b79d6" stroke-opacity="0.25" stroke-width="1.0"/><line x1="1463.9" y1="33.6" x2="1486.4" y2="-11.4" stroke="#3b79d6" stroke-opacity="0.44" stroke-width="1.2"/><line x1="661.1" y1="27.7" x2="687.1" y2="-24.5" stroke="#8cbcf5" stroke-opacity="0.28" stroke-width="1.0"/><line x1="791.5" y1="5.4" x2="812.0" y2="-35.6" stroke="#8cbcf5" stroke-opacity="0.36" stroke-width="1.0"/><line x1="1029.3" y1="72.0" x2="1049.9" y2="30.8" stroke="#4f8fe6" stroke-opacity="0.50" stroke-width="0.8"/><line x1="1361.4" y1="20.9" x2="1402.6" y2="-61.6" stroke="#3b79d6" stroke-opacity="0.55" stroke-width="1.0"/><line x1="1206.2" y1="28.1" x2="1231.1" y2="-21.7" stroke="#3b79d6" stroke-opacity="0.46" stroke-width="0.8"/><line x1="1167.1" y1="94.1" x2="1197.3" y2="33.8" stroke="#4f8fe6" stroke-opacity="0.39" stroke-width="1.0"/><line x1="1133.0" y1="36.7" x2="1148.4" y2="5.9" stroke="#4f8fe6" stroke-opacity="0.33" stroke-width="1.0"/><line x1="295.8" y1="25.0" x2="313.1" y2="-9.8" stroke="#8cbcf5" stroke-opacity="0.70" stroke-width="0.8"/><line x1="782.5" y1="9.5" x2="801.9" y2="-29.3" stroke="#5a9af0" stroke-opacity="0.56" stroke-width="1.0"/><line x1="1148.1" y1="72.4" x2="1170.2" y2="28.1" stroke="#4f8fe6" stroke-opacity="0.54" stroke-width="1.0"/><line x1="1547.2" y1="73.9" x2="1567.9" y2="32.5" stroke="#8cbcf5" stroke-opacity="0.42" stroke-width="0.8"/><line x1="881.1" y1="71.4" x2="917.8" y2="-2.1" stroke="#3b79d6" stroke-opacity="0.68" stroke-width="0.8"/><line x1="1391.9" y1="67.5" x2="1422.3" y2="6.9" stroke="#69a6f5" stroke-opacity="0.26" stroke-width="0.8"/><line x1="821.3" y1="83.1" x2="833.2" y2="59.5" stroke="#8cbcf5" stroke-opacity="0.64" stroke-width="1.2"/><line x1="747.5" y1="92.5" x2="772.3" y2="42.9" stroke="#8cbcf5" stroke-opacity="0.54" stroke-width="1.2"/><line x1="400.2" y1="12.2" x2="419.9" y2="-27.3" stroke="#5a9af0" stroke-opacity="0.50" stroke-width="1.2"/><line x1="896.5" y1="43.5" x2="931.0" y2="-25.4" stroke="#8cbcf5" stroke-opacity="0.27" stroke-width="1.0"/><line x1="1252.1" y1="38.1" x2="1261.2" y2="20.0" stroke="#3b79d6" stroke-opacity="0.66" stroke-width="1.2"/><line x1="481.6" y1="90.3" x2="491.4" y2="70.8" stroke="#8cbcf5" stroke-opacity="0.29" stroke-width="1.2"/><line x1="765.7" y1="14.6" x2="794.9" y2="-43.8" stroke="#5a9af0" stroke-opacity="0.54" stroke-width="1.0"/><line x1="1124.8" y1="30.0" x2="1137.6" y2="4.4" stroke="#3b79d6" stroke-opacity="0.68" stroke-width="1.0"/><line x1="432.6" y1="51.2" x2="461.5" y2="-6.5" stroke="#69a6f5" stroke-opacity="0.26" stroke-width="1.0"/><line x1="1364.8" y1="94.9" x2="1397.4" y2="29.6" stroke="#3b79d6" stroke-opacity="0.35" stroke-width="0.8"/><line x1="493.4" y1="51.4" x2="509.8" y2="18.7" stroke="#3b79d6" stroke-opacity="0.35" stroke-width="1.0"/><line x1="520.0" y1="-2.0" x2="555.3" y2="-72.5" stroke="#69a6f5" stroke-opacity="0.67" stroke-width="1.2"/><line x1="1076.7" y1="51.1" x2="1107.3" y2="-10.1" stroke="#3b79d6" stroke-opacity="0.66" stroke-width="1.0"/><line x1="718.1" y1="19.5" x2="741.5" y2="-27.2" stroke="#69a6f5" stroke-opacity="0.39" stroke-width="1.0"/><line x1="1120.7" y1="19.4" x2="1161.5" y2="-62.1" stroke="#4f8fe6" stroke-opacity="0.26" stroke-width="1.0"/><line x1="1785.4" y1="54.4" x2="1797.1" y2="31.0" stroke="#3b79d6" stroke-opacity="0.69" stroke-width="1.0"/><line x1="1726.8" y1="65.0" x2="1736.7" y2="45.2" stroke="#5a9af0" stroke-opacity="0.21" stroke-width="1.0"/><line x1="1032.0" y1="50.3" x2="1045.9" y2="22.4" stroke="#3b79d6" stroke-opacity="0.46" stroke-width="1.2"/><line x1="1779.1" y1="89.4" x2="1795.6" y2="56.5" stroke="#3b79d6" stroke-opacity="0.31" stroke-width="1.0"/><line x1="1851.2" y1="46.4" x2="1879.4" y2="-9.9" stroke="#5a9af0" stroke-opacity="0.54" stroke-width="1.0"/><line x1="1847.8" y1="49.5" x2="1888.9" y2="-32.6" stroke="#4f8fe6" stroke-opacity="0.22" stroke-width="1.0"/><line x1="47.6" y1="82.1" x2="79.2" y2="18.9" stroke="#5a9af0" stroke-opacity="0.46" stroke-width="0.8"/><line x1="1.3" y1="78.4" x2="43.0" y2="-4.9" stroke="#8cbcf5" stroke-opacity="0.62" stroke-width="1.0"/><line x1="664.4" y1="-3.4" x2="698.8" y2="-72.3" stroke="#5a9af0" stroke-opacity="0.33" stroke-width="1.0"/><line x1="1041.7" y1="65.9" x2="1065.1" y2="19.0" stroke="#8cbcf5" stroke-opacity="0.32" stroke-width="1.0"/><line x1="397.6" y1="42.4" x2="412.8" y2="11.9" stroke="#69a6f5" stroke-opacity="0.66" stroke-width="1.0"/><line x1="1342.6" y1="57.5" x2="1370.2" y2="2.3" stroke="#4f8fe6" stroke-opacity="0.49" stroke-width="1.0"/><line x1="615.5" y1="48.5" x2="648.8" y2="-18.2" stroke="#4f8fe6" stroke-opacity="0.30" stroke-width="1.0"/><line x1="1069.4" y1="75.2" x2="1085.4" y2="43.1" stroke="#8cbcf5" stroke-opacity="0.31" stroke-width="1.0"/><line x1="734.1" y1="90.7" x2="776.2" y2="6.3" stroke="#69a6f5" stroke-opacity="0.39" stroke-width="1.2"/><line x1="669.6" y1="34.8" x2="687.1" y2="-0.2" stroke="#4f8fe6" stroke-opacity="0.50" stroke-width="1.2"/><line x1="103.0" y1="95.2" x2="125.4" y2="50.5" stroke="#4f8fe6" stroke-opacity="0.28" stroke-width="1.0"/><line x1="447.7" y1="9.5" x2="460.0" y2="-15.0" stroke="#3b79d6" stroke-opacity="0.60" stroke-width="0.8"/><line x1="381.5" y1="66.2" x2="419.9" y2="-10.6" stroke="#8cbcf5" stroke-opacity="0.56" stroke-width="1.0"/><line x1="737.2" y1="23.7" x2="777.5" y2="-57.1" stroke="#69a6f5" stroke-opacity="0.24" stroke-width="1.0"/><line x1="1339.2" y1="28.7" x2="1367.1" y2="-27.0" stroke="#5a9af0" stroke-opacity="0.34" stroke-width="1.2"/><line x1="1509.3" y1="94.4" x2="1519.7" y2="73.7" stroke="#4f8fe6" stroke-opacity="0.31" stroke-width="1.0"/><line x1="1340.6" y1="96.3" x2="1370.5" y2="36.7" stroke="#8cbcf5" stroke-opacity="0.25" stroke-width="1.2"/><line x1="693.6" y1="46.3" x2="702.5" y2="28.6" stroke="#8cbcf5" stroke-opacity="0.27" stroke-width="0.8"/><line x1="869.0" y1="52.1" x2="886.4" y2="17.3" stroke="#8cbcf5" stroke-opacity="0.22" stroke-width="1.0"/><line x1="1903.2" y1="39.5" x2="1944.3" y2="-42.8" stroke="#4f8fe6" stroke-opacity="0.51" stroke-width="1.2"/><line x1="666.5" y1="54.0" x2="698.0" y2="-9.1" stroke="#3b79d6" stroke-opacity="0.33" stroke-width="1.0"/><line x1="706.0" y1="56.0" x2="728.1" y2="11.8" stroke="#8cbcf5" stroke-opacity="0.47" stroke-width="1.0"/><line x1="658.2" y1="19.5" x2="698.5" y2="-61.0" stroke="#69a6f5" stroke-opacity="0.63" stroke-width="1.2"/><line x1="1007.5" y1="25.3" x2="1021.0" y2="-1.7" stroke="#69a6f5" stroke-opacity="0.56" stroke-width="1.2"/><line x1="562.4" y1="67.2" x2="582.1" y2="27.9" stroke="#8cbcf5" stroke-opacity="0.48" stroke-width="1.2"/><line x1="1357.5" y1="37.1" x2="1382.4" y2="-12.7" stroke="#5a9af0" stroke-opacity="0.62" stroke-width="1.2"/><line x1="1265.6" y1="10.0" x2="1274.0" y2="-6.9" stroke="#4f8fe6" stroke-opacity="0.47" stroke-width="0.8"/><line x1="554.9" y1="56.2" x2="576.3" y2="13.3" stroke="#69a6f5" stroke-opacity="0.22" stroke-width="0.8"/><line x1="843.9" y1="94.3" x2="868.5" y2="45.0" stroke="#3b79d6" stroke-opacity="0.44" stroke-width="1.0"/><line x1="678.1" y1="17.6" x2="714.8" y2="-55.8" stroke="#69a6f5" stroke-opacity="0.60" stroke-width="1.0"/><line x1="600.5" y1="91.6" x2="608.8" y2="75.0" stroke="#3b79d6" stroke-opacity="0.46" stroke-width="1.2"/><line x1="1275.7" y1="65.1" x2="1287.0" y2="42.4" stroke="#8cbcf5" stroke-opacity="0.69" stroke-width="1.0"/></svg>
<div style="position:absolute;left:850px;top:0;width:750px;height:14px;background:radial-gradient(ellipse at 50% 0%,rgba(5,10,30,0.55),rgba(5,10,30,0) 70%)"></div>
<div style="position:absolute;left:0;top:0;width:1920px;height:6px;background:linear-gradient(180deg,rgba(0,0,20,0.35),rgba(0,0,0,0))"></div>
<div style="position:absolute;left:10px;top:4px;white-space:nowrap;font-size:14px;font-weight:bold;color:#fff;line-height:18px;letter-spacing:-0.3px">飞扬动力广告公司管理软件 [企业版 - V4.0.0.991]</div>
<div style="position:absolute;left:1770px;top:0px;width:150px;height:28px;background:#0b3a86"></div>
<svg style="position:absolute;left:1770px;top:0" width="150" height="24">
<g stroke="rgba(255,255,255,0.10)" stroke-width="1"><line x1="0.5" y1="0" x2="0.5" y2="22"/><line x1="27.5" y1="0" x2="27.5" y2="22"/><line x1="55.5" y1="0" x2="55.5" y2="22"/><line x1="83.5" y1="0" x2="83.5" y2="22"/><line x1="111.5" y1="0" x2="111.5" y2="22"/><line x1="148.5" y1="0" x2="148.5" y2="22"/></g>
<g fill="none" stroke="#fff">
<path d="M7 3.5 L14 3.5 M7.5 3 L7.5 6.5" stroke-width="1.3"/>
<rect x="9.6" y="6.6" width="9" height="8.6" stroke-width="1.4"/>
<path d="M11.5 9.5 L16.8 9.5 M11.5 11.5 L16.8 11.5 M11.5 13.5 L16.8 13.5" stroke-width="1"/>
<rect x="94.6" y="5.6" width="9" height="5.6" stroke-width="1.3"/>
</g>
<rect x="92.6" y="7.6" width="9" height="5.4" fill="#0b3a86" stroke="#fff" stroke-width="1.3"/>
<path d="M39 6 L42 7.3 L45 6 L48.5 8.5 L47 11 L45.3 10.3 L45.3 14 L38.7 14 L38.7 10.3 L37 11 L35.5 8.5 Z" fill="#fff"/>
<rect x="64" y="10.5" width="11" height="2.6" fill="#fff"/>
<path d="M125.5 5.5 L135.5 14 M135.5 5.5 L125.5 14" stroke="#fff" stroke-width="2.3"/>
</svg>
<div style="position:absolute;left:0;top:28px;width:690px;height:60px;background:#fff"></div>
<div style="position:absolute;left:114px;top:28px;width:1px;height:60px;background:#e4e7ea"></div>
<div style="position:absolute;left:55px;top:50px;white-space:nowrap;font-size:13px;color:#222;line-height:18px;letter-spacing:0.4px">个人中心</div>
<svg style="position:absolute;left:18px;top:45px" width="26" height="26"><circle cx="13" cy="13" r="11.5" fill="none" stroke="#e6ebef" stroke-width="1.3"/><circle cx="13" cy="10" r="4.5" fill="none" stroke="#e6ebef" stroke-width="1.3"/><path d="M5.5 21 Q13 12 20.5 21" fill="none" stroke="#e6ebef" stroke-width="1.3"/></svg>
<div style="position:absolute;left:229px;top:28px;width:1px;height:60px;background:#e4e7ea"></div>
<div style="position:absolute;left:170px;top:50px;white-space:nowrap;font-size:13px;color:#222;line-height:18px;letter-spacing:0.4px">基础档案</div>
<svg style="position:absolute;left:133px;top:45px" width="26" height="26"><circle cx="13" cy="13" r="11.5" fill="none" stroke="#e6ebef" stroke-width="1.3"/><g fill="#e6ebef"><rect x="6" y="7" width="3" height="3"/><rect x="10" y="7" width="10" height="3"/><rect x="6" y="11.5" width="3" height="3"/><rect x="10" y="11.5" width="10" height="3"/><rect x="6" y="16" width="3" height="3"/><rect x="10" y="16" width="10" height="3"/></g></svg>
<div style="position:absolute;left:230px;top:28px;width:115px;height:60px;background:#f9502b"></div>
<div style="position:absolute;left:285px;top:50px;white-space:nowrap;font-size:13px;color:#fff;line-height:18px;letter-spacing:0.4px">业务处理</div>
<svg style="position:absolute;left:248px;top:45px" width="26" height="26"><circle cx="13" cy="13" r="11" fill="none" stroke="#fff" stroke-width="1.3"/><text x="13" y="17.5" font-size="12" text-anchor="middle" fill="#fff" font-family="Liberation Sans">AD</text></svg>
<div style="position:absolute;left:459px;top:28px;width:1px;height:60px;background:#e4e7ea"></div>
<div style="position:absolute;left:400px;top:50px;white-space:nowrap;font-size:13px;color:#222;line-height:18px;letter-spacing:0.4px">报表统计</div>
<svg style="position:absolute;left:363px;top:45px" width="26" height="26"><g fill="#e6ebef"><rect x="7" y="12" width="1.5" height="12"/><rect x="11" y="9" width="1.5" height="15"/><rect x="15" y="3" width="1.5" height="21"/><rect x="19" y="7" width="1.5" height="17"/></g></svg>
<div style="position:absolute;left:574px;top:28px;width:1px;height:60px;background:#e4e7ea"></div>
<div style="position:absolute;left:515px;top:50px;white-space:nowrap;font-size:13px;color:#222;line-height:18px;letter-spacing:0.4px">人事工资</div>
<svg style="position:absolute;left:478px;top:45px" width="26" height="26"><circle cx="13" cy="13" r="10" fill="#e6ebef"/><text x="13" y="17" font-size="10" font-weight="bold" text-anchor="middle" fill="#fff" font-family="Liberation Sans">HR</text></svg>
<div style="position:absolute;left:630px;top:50px;white-space:nowrap;font-size:13px;color:#222;line-height:18px;letter-spacing:0.4px">系统设置</div>
<svg style="position:absolute;left:593px;top:45px" width="26" height="26"><circle cx="13" cy="13" r="7" fill="none" stroke="#e6ebef" stroke-width="2.5"/><g stroke="#e6ebef" stroke-width="2.5"><line x1="13" y1="2" x2="13" y2="6"/><line x1="13" y1="20" x2="13" y2="24"/><line x1="2" y1="13" x2="6" y2="13"/><line x1="20" y1="13" x2="24" y2="13"/><line x1="5" y1="5" x2="8" y2="8"/><line x1="18" y1="18" x2="21" y2="21"/><line x1="5" y1="21" x2="8" y2="18"/><line x1="18" y1="8" x2="21" y2="5"/></g></svg>
<div style="position:absolute;left:0px;top:87px;width:690px;height:1px;background:#c9d6e4"></div>
<div style="position:absolute;left:1591px;top:29px;width:135px;height:31px;background:#fff;border-radius:2px"></div>
<div style="position:absolute;left:1597px;top:36px;white-space:nowrap;font-size:13px;color:#a8a8a8;line-height:17px;width:128px;overflow:hidden">项目/客户/联系人/电话/</div>
<div style="position:absolute;left:1727px;top:28px;width:51px;height:33px;background:#ff4000"></div>
<div style="position:absolute;left:1730px;top:36px;white-space:nowrap;font-size:13px;color:#fff;line-height:17px">搜索 F1</div>
<div style="position:absolute;left:1778px;top:28px;width:54px;height:33px;background:#0066d4"></div>
<div style="position:absolute;left:1779px;top:36px;white-space:nowrap;font-size:13px;color:#fff;line-height:17px">选择图片</div>
<div style="position:absolute;left:1832px;top:28px;width:54px;height:33px;background:#259a55"></div>
<div style="position:absolute;left:1833px;top:36px;white-space:nowrap;font-size:13px;color:#fff;line-height:17px">下单助手</div>
<div style="position:absolute;left:1590px;top:61px;width:330px;height:27px;background:#c8d4e2"></div>
<svg style="position:absolute;left:1597px;top:67px" width="18" height="14"><path d="M4 13 Q0 13 0.5 9.5 Q1 6.5 4 6.5 Q5 2 9.5 2 Q14 2 14.5 6.5 Q17.5 7 17.5 10 Q17.5 13 14 13 Z" fill="#1b9be3"/></svg>
<div style="position:absolute;left:1623px;top:67px;white-space:nowrap;font-size:12.5px;color:#333;line-height:17px;letter-spacing:-0.3px">查看云端图片</div>
<div style="position:absolute;left:1888px;top:66px;white-space:nowrap;font-size:13px;color:#2a8ae6;line-height:17px">0 / 0</div>
<div style="position:absolute;left:0px;top:88px;width:33px;height:923px;background:linear-gradient(180deg,#152b60 0%,#1a3775 30%,#1b3a7a 45%,#15306a 62%,#11264f 85%,#0f2149 100%)"></div>
<svg style="position:absolute;left:0;top:96px" width="33" height="28">
<rect x="5" y="3" width="22" height="15" fill="none" stroke="#fff" stroke-width="2"/>
<rect x="4" y="17" width="24" height="3" fill="#e8e8e8"/>
<rect x="10" y="21" width="12" height="2.5" fill="#e8e8e8"/>
</svg>
<div style="position:absolute;left:4px;top:128px;width:24px;height:24px;background:#4169e1"></div>
<div style="position:absolute;left:4px;top:130px;white-space:nowrap;font-size:17px;color:#fff;width:24px;text-align:center;line-height:20px">加</div>
<div style="position:absolute;left:4px;top:160px;width:24px;height:24px;background:#ffc52e"></div>
<div style="position:absolute;left:4px;top:162px;white-space:nowrap;font-size:17px;color:#e04800;width:24px;text-align:center;line-height:20px">收</div>
<div style="position:absolute;left:4px;top:192px;width:24px;height:24px;background:#13a326"></div>
<div style="position:absolute;left:4px;top:194px;white-space:nowrap;font-size:17px;color:#fff;width:24px;text-align:center;line-height:20px">账</div>
<div style="position:absolute;left:4px;top:224px;width:24px;height:24px;background:#1e4a80"></div>
<div style="position:absolute;left:4px;top:226px;white-space:nowrap;font-size:17px;color:#fff;width:24px;text-align:center;line-height:20px">材</div>
<div style="position:absolute;left:4px;top:256px;width:24px;height:24px;background:#e8106c"></div>
<div style="position:absolute;left:4px;top:258px;white-space:nowrap;font-size:17px;color:#fff;width:24px;text-align:center;line-height:20px">单</div>
<div style="position:absolute;left:4px;top:288px;width:24px;height:24px;background:#f2457f"></div>
<div style="position:absolute;left:4px;top:290px;white-space:nowrap;font-size:17px;color:#fff;width:24px;text-align:center;line-height:20px">流</div>
<div style="position:absolute;left:4px;top:320px;width:24px;height:24px;background:#b70d3e"></div>
<div style="position:absolute;left:4px;top:322px;white-space:nowrap;font-size:17px;color:#fff;width:24px;text-align:center;line-height:20px">系</div>
<div style="position:absolute;left:8px;top:363px;width:17px;height:2px;background:#fff"></div>
<div style="position:absolute;left:15px;top:356px;width:2px;height:17px;background:#fff"></div>
<div style="position:absolute;left:33px;top:88px;width:1886px;height:923px;background:#fff"></div>
<div style="position:absolute;left:1916px;top:111px;width:2px;height:900px;background:#d8d8d8"></div>
<div style="position:absolute;left:1919px;top:88px;width:1px;height:923px;background:#0c3480"></div>
<div style="position:absolute;left:33px;top:1010px;width:1886px;height:1px;background:#d0d0d0"></div>
<div style="position:absolute;left:33px;top:88px;width:1557px;height:1px;background:#c9d6e4"></div>
<div style="position:absolute;left:35px;top:110px;width:1882px;height:1px;background:#d8d8d8"></div>
<div style="position:absolute;left:35px;top:91px;width:85px;height:20px;background:#efefef;border:1px solid #d4d4d4;border-bottom:none;box-shadow:inset 1px 1px 0 #fff"></div>
<div style="position:absolute;left:120px;top:89px;width:151px;height:22px;background:#fff;border:1px solid #d4d4d4;border-bottom:none"></div>
<div style="position:absolute;left:271px;top:91px;width:165px;height:20px;background:#efefef;border:1px solid #d4d4d4;border-bottom:none;box-shadow:inset 1px 1px 0 #fff"></div>
<svg style="position:absolute;left:42px;top:93px" width="16" height="16">
<polygon points="1,8.5 6,10.5 6,15.5 1,13" fill="#dcdcdc" stroke="#9a9a9a" stroke-width="0.6"/>
<polygon points="6,10.5 10,3.5 15,8 15,13 6,15.5" fill="#f7f7f7" stroke="#9a9a9a" stroke-width="0.6"/>
<polygon points="0.5,8.5 5,1 10,3 6,10.5" fill="#43c043" stroke="#1f7f1f" stroke-width="0.7"/>
<path d="M10 3 L15 8" stroke="#1f7f1f" stroke-width="1.2"/>
<rect x="10" y="9" width="2.5" height="5" fill="#1a8a1a"/>
</svg>
<div style="position:absolute;left:63px;top:93px;white-space:nowrap;font-size:13px;color:#000;line-height:16px">业务向导</div>
<svg style="position:absolute;left:127px;top:92px" width="18" height="16">
<rect x="0.5" y="0.5" width="14" height="12" fill="#d8ecfa" stroke="#1a4fb0"/>
<rect x="0.5" y="0.5" width="14" height="2.5" fill="#1a4fb0"/>
<g stroke="#1d7a1d" stroke-width="1"><line x1="1" y1="6" x2="14" y2="6"/><line x1="1" y1="9.5" x2="14" y2="9.5"/><line x1="5" y1="3" x2="5" y2="12.5"/><line x1="10" y1="3" x2="10" y2="12.5"/></g>
<rect x="9.5" y="5.5" width="6.5" height="9.5" rx="1.5" fill="#f2b533" stroke="#c07a10" stroke-width="0.8"/>
<line x1="10.5" y1="9" x2="15" y2="9" stroke="#c07a10" stroke-width="0.6"/><line x1="10.5" y1="12" x2="15" y2="12" stroke="#c07a10" stroke-width="0.6"/>
</svg>
<div style="position:absolute;left:149px;top:92px;white-space:nowrap;font-size:13px;font-weight:bold;color:#000;line-height:16px;letter-spacing:1.2px">往来对账(按明细)</div>
<svg style="position:absolute;left:277px;top:94px" width="16" height="16">
<rect x="1.5" y="1.5" width="12" height="13" fill="#e8f2ff" stroke="#3a7ac8"/>
<line x1="4" y1="5" x2="11" y2="5" stroke="#3a7ac8"/>
<path d="M4 9 L7 12 L12 6" fill="none" stroke="#1aa01a" stroke-width="2"/>
</svg>
<div style="position:absolute;left:297px;top:95px;white-space:nowrap;font-size:12px;color:#000;line-height:16px;font-family:'Liberation Mono', monospace;letter-spacing:-0.2px">skd-2020-09-18-0002</div>
<div style="position:absolute;left:37px;top:114px;width:1878px;height:27px;background:#f0f0f0"></div>
<div style="position:absolute;left:61px;top:120px;white-space:nowrap;font-size:12.5px;color:#000;line-height:16px;letter-spacing:-0.15px">查看原单</div>
<div style="position:absolute;left:141px;top:120px;white-space:nowrap;font-size:12.5px;color:#000;line-height:16px;letter-spacing:-0.15px">打印</div>
<div style="position:absolute;left:192px;top:120px;white-space:nowrap;font-size:12.5px;color:#000;line-height:16px;letter-spacing:-0.15px">打印预览</div>
<div style="position:absolute;left:267px;top:120px;white-space:nowrap;font-size:12.5px;color:#000;line-height:16px;letter-spacing:-0.15px">打印样式</div>
<div style="position:absolute;left:342px;top:120px;white-space:nowrap;font-size:12.5px;color:#000;line-height:16px;letter-spacing:-0.15px">导出到<span style="font-size:12px;letter-spacing:-0.2px">EXCEL</span></div>
<div style="position:absolute;left:446px;top:120px;white-space:nowrap;font-size:12.5px;color:#000;line-height:16px;letter-spacing:-0.15px">执行查询</div>
<div style="position:absolute;left:526px;top:120px;white-space:nowrap;font-size:12.5px;color:#000;line-height:16px;letter-spacing:-0.15px">定位</div>
<div style="position:absolute;left:577px;top:120px;white-space:nowrap;font-size:12.5px;color:#000;line-height:16px;letter-spacing:-0.15px">列配置</div>
<div style="position:absolute;left:645px;top:120px;white-space:nowrap;font-size:12.5px;color:#000;line-height:16px;letter-spacing:-0.15px">结算详情</div>
<div style="position:absolute;left:725px;top:120px;white-space:nowrap;font-size:12.5px;color:#000;line-height:16px;letter-spacing:-0.15px">退出</div>
<div style="position:absolute;left:116px;top:118px;width:1px;height:20px;background:#a8a8a8"></div>
<div style="position:absolute;left:421px;top:118px;width:1px;height:20px;background:#a8a8a8"></div>
<div style="position:absolute;left:501px;top:118px;width:1px;height:20px;background:#a8a8a8"></div>
<div style="position:absolute;left:620px;top:118px;width:1px;height:20px;background:#a8a8a8"></div>
<div style="position:absolute;left:700px;top:118px;width:1px;height:20px;background:#a8a8a8"></div>
<svg style="position:absolute;left:0;top:114px" width="760" height="27">
<rect x="42.5" y="5.5" width="13" height="15" fill="#fff" stroke="#6a6ab0" stroke-width="1" stroke-dasharray="1,1"/>
<g transform="translate(122,4)"><polygon points="3,2 9,0.5 11.5,8 4.5,9" fill="#d6ecfa" stroke="#6a90b8" stroke-width="0.8"/><path d="M0.5 9 L11 7 L16 10 L16 13.5 L5 16 L0.5 12.5 Z" fill="#cfd3d9" stroke="#6a7078" stroke-width="0.8"/><path d="M3 12 L12 10.5" stroke="#5a6068" stroke-width="0.9"/></g>
<g transform="translate(175,4)"><path d="M1 1 L10 1 L14 5 L14 18 L1 18 Z" fill="#eef4ff" stroke="#5a80c0" stroke-width="0.9"/><circle cx="8" cy="9" r="4" fill="none" stroke="#5a80c0" stroke-width="1.3"/><line x1="5" y1="12" x2="1" y2="17" stroke="#e08020" stroke-width="2"/></g>
<g transform="translate(248,4)"><rect x="0.5" y="9" width="15" height="8" fill="#e0e8f4" stroke="#6a88b0" stroke-width="0.9"/><path d="M5 13 L14 2 L16 4 L7 15 Z" fill="#4a80d0" stroke="#2a50a0" stroke-width="0.7"/></g>
<g transform="translate(323,4)"><rect x="0.5" y="1.5" width="14" height="14" fill="#fff" stroke="#7090b0" stroke-width="0.9"/><line x1="0.5" y1="5" x2="14.5" y2="5" stroke="#7090b0"/><line x1="0.5" y1="9" x2="14.5" y2="9" stroke="#a0b8d0"/><line x1="5" y1="1.5" x2="5" y2="15" stroke="#a0b8d0"/><rect x="8" y="9" width="8" height="9" fill="#2a9a4a"/><path d="M9.5 10.5 L14.5 16.5 M14.5 10.5 L9.5 16.5" stroke="#fff" stroke-width="1.3"/></g>
<g transform="translate(427,3)"><circle cx="10" cy="7" r="5" fill="#d8ecff" stroke="#4a7ab0" stroke-width="1.5"/><line x1="6" y1="11" x2="1" y2="17" stroke="#e07a20" stroke-width="2.6"/></g>
<g transform="translate(507,4)"><rect x="2.5" y="1.5" width="11" height="16" fill="#f0f6ff" stroke="#5a88c8" stroke-width="0.9"/><rect x="0" y="8" width="16" height="3" fill="#3a78d0"/><line x1="4" y1="4" x2="12" y2="4" stroke="#8ab0e0"/><line x1="4" y1="14" x2="12" y2="14" stroke="#8ab0e0"/></g>
<g transform="translate(557,3)"><g stroke="#3a78d0" stroke-width="1.2"><line x1="0" y1="2" x2="16" y2="2"/><line x1="0" y1="4.5" x2="16" y2="4.5"/></g><rect x="6" y="0.5" width="4.5" height="5" fill="#f5c040" stroke="#c08000" stroke-width="0.6"/><line x1="8.2" y1="5.5" x2="8.2" y2="10" stroke="#3a78d0" stroke-width="1.2"/><path d="M0.5 12 L5 9 L12 10 L16 13 L15 17 L6 19 L1 16 Z" fill="#c4c8ce" stroke="#6a7078" stroke-width="0.8"/><path d="M3 14 L13 13" stroke="#7a8088" stroke-width="0.8"/></g>
<g transform="translate(626,4)"><path d="M1 3 L10 1 L12 16 L3 18 Z" fill="#e8f0fa" stroke="#7a98c0" stroke-width="0.8"/><rect x="5" y="3" width="11" height="15" fill="#fff" stroke="#6a88b8" stroke-width="0.9"/><g stroke="#5a80c0" stroke-width="0.9"><line x1="7" y1="7" x2="14" y2="7"/><line x1="7" y1="10" x2="14" y2="10"/><line x1="7" y1="13" x2="14" y2="13"/></g></g>
<g transform="translate(707,4)"><polygon points="1,8.5 6,10.5 6,15.5 1,13" fill="#dcdcdc" stroke="#9a9a9a" stroke-width="0.6"/><polygon points="6,10.5 10,3.5 15,8 15,13 6,15.5" fill="#f7f7f7" stroke="#9a9a9a" stroke-width="0.6"/><polygon points="0.5,8.5 5,1 10,3 6,10.5" fill="#43c043" stroke="#1f7f1f" stroke-width="0.7"/><path d="M10 3 L15 8" stroke="#1f7f1f" stroke-width="1.2"/><rect x="10" y="9" width="2.5" height="5" fill="#1a8a1a"/></g>
</svg>
<div style="position:absolute;left:45px;top:162px;white-space:nowrap;font-size:24px;color:#000;line-height:30px">往来对账(按明细)</div>
<div style="position:absolute;left:346px;top:170px;white-space:nowrap;font-size:13px;color:#777;line-height:17px">提示：点击 <span style="color:#0000ee;text-decoration:underline">列配置</span> 可以隐藏不需要的列</div>
<div style="position:absolute;left:672px;top:153px;width:271px;height:38px;background:#fff;border:1px solid #888"></div>
<div style="position:absolute;left:673px;top:154px;width:84px;height:16px;background:#008000"></div>
<div style="position:absolute;left:757px;top:154px;width:92px;height:16px;background:#000080"></div>
<div style="position:absolute;left:850px;top:154px;width:92px;height:16px;background:#000080"></div>
<div style="position:absolute;left:673px;top:170px;width:84px;height:20px;background:#e1e1e1"></div>
<div style="position:absolute;left:756px;top:154px;width:1px;height:36px;background:#888"></div>
<div style="position:absolute;left:849px;top:154px;width:1px;height:36px;background:#888"></div>
<div style="position:absolute;left:673px;top:170px;width:269px;height:1px;background:#888"></div>
<div style="position:absolute;left:673px;top:154px;white-space:nowrap;font-size:12px;color:#fff;width:84px;text-align:center;line-height:15px">日期选择</div>
<div style="position:absolute;left:757px;top:154px;white-space:nowrap;font-size:12px;color:#fff;width:92px;text-align:center;line-height:15px">起始日期</div>
<div style="position:absolute;left:850px;top:154px;white-space:nowrap;font-size:12px;color:#fff;width:92px;text-align:center;line-height:15px">结束日期</div>
<div style="position:absolute;left:695px;top:173px;white-space:nowrap;font-size:13px;color:#000;line-height:16px">本年</div>
<div style="position:absolute;left:760px;top:174px;white-space:nowrap;font-size:12px;color:#000;line-height:15px;font-family:'Liberation Mono', monospace;letter-spacing:-0.3px">2020-01-01</div>
<div style="position:absolute;left:853px;top:174px;white-space:nowrap;font-size:12px;color:#000;line-height:15px;font-family:'Liberation Mono', monospace;letter-spacing:-0.3px">2020-09-18</div>
<svg style="position:absolute;left:743px;top:177px" width="10" height="7"><path d="M1 1 L5 5 L9 1" fill="none" stroke="#333" stroke-width="1.1"/></svg>
<svg style="position:absolute;left:836px;top:177px" width="10" height="7"><path d="M1 1 L5 5 L9 1" fill="none" stroke="#333" stroke-width="1.1"/></svg>
<svg style="position:absolute;left:929px;top:177px" width="10" height="7"><path d="M1 1 L5 5 L9 1" fill="none" stroke="#333" stroke-width="1.1"/></svg>
<div style="position:absolute;left:39px;top:198px;width:1874px;height:72px;border:1px solid #d4d4d4;background:#fff"></div>
<div style="position:absolute;left:39px;top:271px;width:1874px;height:1px;background:#0a72d6"></div>
<div style="position:absolute;left:64px;top:218px;white-space:nowrap;font-size:13px;color:#000;line-height:16px;letter-spacing:-0.2px">往来单位</div>
<div style="position:absolute;left:230px;top:218px;white-space:nowrap;font-size:13px;color:#000;line-height:16px;letter-spacing:-0.2px">联系人</div>
<div style="position:absolute;left:400px;top:218px;white-space:nowrap;font-size:13px;color:#000;line-height:16px;letter-spacing:-0.2px">电话</div>
<div style="position:absolute;left:537px;top:217px;white-space:nowrap;font-size:13px;color:#000;line-height:16px;letter-spacing:-0.2px"><span style="font-family:Liberation Mono;font-size:12px;letter-spacing:0px">QQ</span></div>
<div style="position:absolute;left:704px;top:218px;white-space:nowrap;font-size:13px;color:#000;line-height:16px;letter-spacing:-0.2px">地址</div>
<div style="position:absolute;left:62px;top:242px;white-space:nowrap;font-size:13px;color:#000;line-height:16px;letter-spacing:-0.2px">经&nbsp;&nbsp;手&nbsp;&nbsp;人</div>
<div style="position:absolute;left:230px;top:242px;white-space:nowrap;font-size:13px;color:#000;line-height:16px;letter-spacing:-0.2px">项目名称</div>
<div style="position:absolute;left:400px;top:242px;white-space:nowrap;font-size:13px;color:#000;line-height:16px;letter-spacing:-0.2px">单号</div>
<div style="position:absolute;left:539px;top:242px;white-space:nowrap;font-size:13px;color:#000;line-height:16px;letter-spacing:-0.2px">材料名称</div>
<div style="position:absolute;left:704px;top:242px;white-space:nowrap;font-size:13px;color:#000;line-height:16px;letter-spacing:-0.2px">业务类型</div>
<div style="position:absolute;left:124px;top:217px;white-space:nowrap;font-size:12px;color:#000;line-height:16px">&lt;全&nbsp;&nbsp;部&gt;</div>
<div style="position:absolute;left:124px;top:240px;white-space:nowrap;font-size:12px;color:#000;line-height:16px">&lt;全&nbsp;&nbsp;部&gt;</div>
<div style="position:absolute;left:123px;top:234px;width:96px;height:1px;background:#909090"></div>
<div style="position:absolute;left:290px;top:234px;width:95px;height:1px;background:#909090"></div>
<div style="position:absolute;left:435px;top:234px;width:96px;height:1px;background:#909090"></div>
<div style="position:absolute;left:597px;top:234px;width:96px;height:1px;background:#909090"></div>
<div style="position:absolute;left:762px;top:234px;width:96px;height:1px;background:#909090"></div>
<div style="position:absolute;left:123px;top:257px;width:96px;height:1px;background:#909090"></div>
<div style="position:absolute;left:290px;top:257px;width:95px;height:1px;background:#909090"></div>
<div style="position:absolute;left:435px;top:257px;width:96px;height:1px;background:#909090"></div>
<div style="position:absolute;left:597px;top:257px;width:96px;height:1px;background:#909090"></div>
<div style="position:absolute;left:762px;top:257px;width:96px;height:1px;background:#909090"></div>
<div style="position:absolute;left:895px;top:217px;white-space:nowrap;font-size:13px;color:#000;line-height:16px">对账类型</div>
<div style="position:absolute;left:951px;top:215px;width:83px;height:21px;background:#e1e1e1;border:1px solid #adadad"></div>
<div style="position:absolute;left:956px;top:217px;white-space:nowrap;font-size:13px;color:#000;line-height:16px">结&nbsp;&nbsp;算</div>
<svg style="position:absolute;left:1019px;top:222px" width="10" height="7"><path d="M1 1 L5 5 L9 1" fill="none" stroke="#333" stroke-width="1.1"/></svg>
<div style="position:absolute;left:890px;top:245px;width:212px;height:20px;border:1px solid #dcdcdc"></div>
<svg style="position:absolute;left:897px;top:248px" width="14" height="14"><circle cx="7" cy="7" r="5.5" fill="#fff" stroke="#333" stroke-width="1"/><circle cx="7" cy="7" r="3" fill="#222"/></svg>
<div style="position:absolute;left:914px;top:247px;white-space:nowrap;font-size:13px;color:#000;line-height:16px">全部</div>
<svg style="position:absolute;left:963px;top:248px" width="14" height="14"><circle cx="7" cy="7" r="5.5" fill="#fff" stroke="#333" stroke-width="1"/></svg>
<div style="position:absolute;left:980px;top:247px;white-space:nowrap;font-size:13px;color:#000;line-height:16px">未结清</div>
<svg style="position:absolute;left:1031px;top:248px" width="14" height="14"><circle cx="7" cy="7" r="5.5" fill="#fff" stroke="#333" stroke-width="1"/></svg>
<div style="position:absolute;left:1048px;top:247px;white-space:nowrap;font-size:13px;color:#000;line-height:16px">已结清</div>
<div style="position:absolute;left:1117px;top:247px;width:52px;height:18px;background:#aaff66;border:1px solid #333"></div>
<div style="position:absolute;left:1177px;top:247px;white-space:nowrap;font-size:13px;color:#000;line-height:16px">-&nbsp;&nbsp;&nbsp;已结清</div>
<div style="position:absolute;left:38px;top:274px;width:1859px;height:691px;overflow:hidden;background:#fff">
<div style="position:absolute;left:0px;top:0px;width:1859px;height:39px;background:#f0f0f0"></div>
<div class="t" style="left:0px;top:11px;width:44px;text-align:center;font-size:13px;line-height:16px;color:#000;letter-spacing:0.5px"></div>
<div class="t" style="left:44px;top:11px;width:66px;text-align:center;font-size:13px;line-height:16px;color:#000;letter-spacing:0.5px">单位类别</div>
<div class="t" style="left:110px;top:11px;width:65px;text-align:center;font-size:13px;line-height:16px;color:#000;letter-spacing:0.5px">图样</div>
<div class="t" style="left:175px;top:11px;width:92px;text-align:center;font-size:13px;line-height:16px;color:#000;letter-spacing:0.5px">往来单位</div>
<div class="t" style="left:267px;top:6px;width:65px;text-align:center;font-size:13px;line-height:14px;color:#000;letter-spacing:0.5px">本期未结<br>合计</div>
<div class="t" style="left:332px;top:11px;width:155px;text-align:center;font-size:13px;line-height:16px;color:#000;letter-spacing:0.5px">业务单号</div>
<div class="t" style="left:487px;top:11px;width:80px;text-align:center;font-size:13px;line-height:16px;color:#000;letter-spacing:0.5px">下单日期</div>
<div class="t" style="left:567px;top:11px;width:100px;text-align:center;font-size:13px;line-height:16px;color:#000;letter-spacing:0.5px">联系方式</div>
<div class="t" style="left:667px;top:6px;width:40px;text-align:center;font-size:13px;line-height:14px;color:#000;letter-spacing:0.5px">结算<br>次数</div>
<div class="t" style="left:707px;top:6px;width:80px;text-align:center;font-size:13px;line-height:14px;color:#000;letter-spacing:0.5px">上次结算日<br>期</div>
<div class="t" style="left:787px;top:11px;width:65px;text-align:center;font-size:13px;line-height:16px;color:#000;letter-spacing:0.5px">本单优惠</div>
<div class="t" style="left:852px;top:11px;width:40px;text-align:center;font-size:13px;line-height:16px;color:#000;letter-spacing:0.5px">运费</div>
<div class="t" style="left:892px;top:11px;width:65px;text-align:center;font-size:13px;line-height:16px;color:#000;letter-spacing:0.5px">应结金额</div>
<div class="t" style="left:957px;top:11px;width:65px;text-align:center;font-size:13px;line-height:16px;color:#000;letter-spacing:0.5px">已结金额</div>
<div class="t" style="left:1022px;top:11px;width:65px;text-align:center;font-size:13px;line-height:16px;color:#000;letter-spacing:0.5px">未结金额</div>
<div class="t" style="left:1087px;top:11px;width:80px;text-align:center;font-size:13px;line-height:16px;color:#000;letter-spacing:0.5px">传图日期</div>
<div class="t" style="left:1167px;top:11px;width:90px;text-align:center;font-size:13px;line-height:16px;color:#000;letter-spacing:0.5px">实际送货日期</div>
<div class="t" style="left:1257px;top:11px;width:80px;text-align:center;font-size:13px;line-height:16px;color:#000;letter-spacing:0.5px">项目名称</div>
<div class="t" style="left:1337px;top:11px;width:60px;text-align:center;font-size:13px;line-height:16px;color:#000;letter-spacing:0.5px">业务类型</div>
<div class="t" style="left:1397px;top:11px;width:102px;text-align:center;font-size:13px;line-height:16px;color:#000;letter-spacing:0.5px">材料名称</div>
<div class="t" style="left:1499px;top:6px;width:31px;text-align:center;font-size:13px;line-height:14px;color:#000;letter-spacing:0.5px">单<br>位</div>
<div class="t" style="left:1530px;top:11px;width:45px;text-align:center;font-size:13px;line-height:16px;color:#000;letter-spacing:0.5px">宽(m)</div>
<div class="t" style="left:1575px;top:11px;width:45px;text-align:center;font-size:13px;line-height:16px;color:#000;letter-spacing:0.5px">高(m)</div>
<div class="t" style="left:1620px;top:11px;width:45px;text-align:center;font-size:13px;line-height:16px;color:#000;letter-spacing:0.5px">数量</div>
<div class="t" style="left:1665px;top:11px;width:60px;text-align:center;font-size:13px;line-height:16px;color:#000;letter-spacing:0.5px">材料单价</div>
<div class="t" style="left:1725px;top:11px;width:60px;text-align:center;font-size:13px;line-height:16px;color:#000;letter-spacing:0.5px">加工单价</div>
<div class="t" style="left:1785px;top:11px;width:43px;text-align:center;font-size:13px;line-height:16px;color:#000;letter-spacing:0.5px">总量</div>
<div class="t" style="left:1828px;top:6px;width:55px;text-align:center;font-size:13px;line-height:14px;color:#000;letter-spacing:0.5px">税率<br>(%)</div>
<div style="position:absolute;left:0px;top:39px;width:44px;height:22px;background:#f0f0f0"></div>
<div class="t" style="left:0px;top:44px;font-family:'Liberation Mono', monospace;font-size:12px;letter-spacing:-0.2px;line-height:16px;color:#000;width:44px;text-align:center">43</div>
<div style="position:absolute;left:110px;top:39px;width:65px;height:22px;background:#f2fbff"></div>
<div style="position:absolute;left:1087px;top:39px;width:812px;height:22px;background:#f2fbff"></div>
<div class="t" style="left:1090px;top:41px;font-size:13px;line-height:16px;color:#000;"><span class="m" style="font-size:12px;letter-spacing:-0.2px">2020-01-02</span></div>
<div class="t" style="left:1260px;top:41px;font-size:13px;line-height:16px;color:#000;"><span class="m" style="font-size:12px;letter-spacing:-0.2px">vivo </span>奉化（</div>
<div class="t" style="left:1340px;top:41px;font-size:13px;line-height:16px;color:#000;">室内写真</div>
<div class="t" style="left:1400px;top:41px;font-size:13px;line-height:16px;color:#000;">室内<span class="m" style="font-size:12px;letter-spacing:-0.2px">kt</span>板</div>
<div class="t" style="left:1502px;top:41px;font-size:13px;line-height:16px;color:#000;">平方</div>
<div class="t" style="left:1530px;top:44px;font-family:'Liberation Mono', monospace;font-size:12px;letter-spacing:-0.2px;line-height:16px;color:#000;width:43px;text-align:right">0.82</div>
<div class="t" style="left:1575px;top:44px;font-family:'Liberation Mono', monospace;font-size:12px;letter-spacing:-0.2px;line-height:16px;color:#000;width:43px;text-align:right">3.10</div>
<div class="t" style="left:1623px;top:44px;font-family:'Liberation Mono', monospace;font-size:12px;letter-spacing:-0.2px;line-height:16px;color:#000">1.00</div>
<div class="t" style="left:1668px;top:44px;font-family:'Liberation Mono', monospace;font-size:12px;letter-spacing:-0.2px;line-height:16px;color:#000">21.00</div>
<div class="t" style="left:1728px;top:44px;font-family:'Liberation Mono', monospace;font-size:12px;letter-spacing:-0.2px;line-height:16px;color:#000">0.00</div>
<div class="t" style="left:1788px;top:44px;font-family:'Liberation Mono', monospace;font-size:12px;letter-spacing:-0.2px;line-height:16px;color:#000">2.54</div>
<div class="t" style="left:1831px;top:44px;font-family:'Liberation Mono', monospace;font-size:12px;letter-spacing:-0.2px;line-height:16px;color:#000">0.00</div>
<div style="position:absolute;left:0px;top:61px;width:44px;height:22px;background:#f0f0f0"></div>
<div class="t" style="left:0px;top:66px;font-family:'Liberation Mono', monospace;font-size:12px;letter-spacing:-0.2px;line-height:16px;color:#000;width:44px;text-align:center">44</div>
<div style="position:absolute;left:110px;top:61px;width:65px;height:22px;background:#fff"></div>
<div style="position:absolute;left:1087px;top:61px;width:812px;height:22px;background:#fff"></div>
<div class="t" style="left:1090px;top:63px;font-size:13px;line-height:16px;color:#000;"><span class="m" style="font-size:12px;letter-spacing:-0.2px">2020-01-02</span></div>
<div class="t" style="left:1260px;top:63px;font-size:13px;line-height:16px;color:#000;"><span class="m" style="font-size:12px;letter-spacing:-0.2px">vivo </span>奉化（</div>
<div class="t" style="left:1340px;top:63px;font-size:13px;line-height:16px;color:#000;">室内写真</div>
<div class="t" style="left:1400px;top:63px;font-size:13px;line-height:16px;color:#000;">室内<span class="m" style="font-size:12px;letter-spacing:-0.2px">kt</span>板</div>
<div class="t" style="left:1502px;top:63px;font-size:13px;line-height:16px;color:#000;">平方</div>
<div class="t" style="left:1530px;top:66px;font-family:'Liberation Mono', monospace;font-size:12px;letter-spacing:-0.2px;line-height:16px;color:#000;width:43px;text-align:right">0.82</div>
<div class="t" style="left:1575px;top:66px;font-family:'Liberation Mono', monospace;font-size:12px;letter-spacing:-0.2px;line-height:16px;color:#000;width:43px;text-align:right">3.10</div>
<div class="t" style="left:1623px;top:66px;font-family:'Liberation Mono', monospace;font-size:12px;letter-spacing:-0.2px;line-height:16px;color:#000">1.00</div>
<div class="t" style="left:1668px;top:66px;font-family:'Liberation Mono', monospace;font-size:12px;letter-spacing:-0.2px;line-height:16px;color:#000">21.00</div>
<div class="t" style="left:1728px;top:66px;font-family:'Liberation Mono', monospace;font-size:12px;letter-spacing:-0.2px;line-height:16px;color:#000">0.00</div>
<div class="t" style="left:1788px;top:66px;font-family:'Liberation Mono', monospace;font-size:12px;letter-spacing:-0.2px;line-height:16px;color:#000">2.54</div>
<div class="t" style="left:1831px;top:66px;font-family:'Liberation Mono', monospace;font-size:12px;letter-spacing:-0.2px;line-height:16px;color:#000">0.00</div>
<div style="position:absolute;left:0px;top:83px;width:44px;height:22px;background:#f0f0f0"></div>
<div class="t" style="left:0px;top:88px;font-family:'Liberation Mono', monospace;font-size:12px;letter-spacing:-0.2px;line-height:16px;color:#000;width:44px;text-align:center">45</div>
<div style="position:absolute;left:110px;top:83px;width:65px;height:22px;background:#f2fbff"></div>
<div style="position:absolute;left:1087px;top:83px;width:812px;height:22px;background:#adfc63"></div>
<div class="t" style="left:1090px;top:85px;font-size:13px;line-height:16px;color:#000;"><span class="m" style="font-size:12px;letter-spacing:-0.2px">2020-01-02</span></div>
<div class="t" style="left:1260px;top:85px;font-size:13px;line-height:16px;color:#000;"><span class="m" style="font-size:12px;letter-spacing:-0.2px">vivo </span>宁海<span class="m" style="font-size:12px;letter-spacing:-0.2px">-</span></div>
<div class="t" style="left:1340px;top:85px;font-size:13px;line-height:16px;color:#000;">户外写真</div>
<div class="t" style="left:1400px;top:85px;font-size:13px;line-height:16px;color:#000;">户外写真</div>
<div class="t" style="left:1502px;top:85px;font-size:13px;line-height:16px;color:#000;">平方</div>
<div class="t" style="left:1530px;top:88px;font-family:'Liberation Mono', monospace;font-size:12px;letter-spacing:-0.2px;line-height:16px;color:#000;width:43px;text-align:right">0.74</div>
<div class="t" style="left:1575px;top:88px;font-family:'Liberation Mono', monospace;font-size:12px;letter-spacing:-0.2px;line-height:16px;color:#000;width:43px;text-align:right">0.10</div>
<div class="t" style="left:1623px;top:88px;font-family:'Liberation Mono', monospace;font-size:12px;letter-spacing:-0.2px;line-height:16px;color:#000">8.00</div>
<div class="t" style="left:1668px;top:88px;font-family:'Liberation Mono', monospace;font-size:12px;letter-spacing:-0.2px;line-height:16px;color:#000">15.00</div>
<div class="t" style="left:1728px;top:88px;font-family:'Liberation Mono', monospace;font-size:12px;letter-spacing:-0.2px;line-height:16px;color:#000">0.00</div>
<div class="t" style="left:1788px;top:88px;font-family:'Liberation Mono', monospace;font-size:12px;letter-spacing:-0.2px;line-height:16px;color:#000">0.59</div>
<div class="t" style="left:1831px;top:88px;font-family:'Liberation Mono', monospace;font-size:12px;letter-spacing:-0.2px;line-height:16px;color:#000">0.00</div>
<div style="position:absolute;left:0px;top:105px;width:44px;height:22px;background:#f0f0f0"></div>
<div class="t" style="left:0px;top:110px;font-family:'Liberation Mono', monospace;font-size:12px;letter-spacing:-0.2px;line-height:16px;color:#000;width:44px;text-align:center">46</div>
<div style="position:absolute;left:110px;top:105px;width:65px;height:22px;background:#fff"></div>
<div style="position:absolute;left:1087px;top:105px;width:812px;height:22px;background:#adfc63"></div>
<div class="t" style="left:1090px;top:107px;font-size:13px;line-height:16px;color:#000;"><span class="m" style="font-size:12px;letter-spacing:-0.2px">2020-01-02</span></div>
<div class="t" style="left:1260px;top:107px;font-size:13px;line-height:16px;color:#000;"><span class="m" style="font-size:12px;letter-spacing:-0.2px">vivo </span>宁海<span class="m" style="font-size:12px;letter-spacing:-0.2px">-</span></div>
<div class="t" style="left:1340px;top:107px;font-size:13px;line-height:16px;color:#000;">户外写真</div>
<div class="t" style="left:1400px;top:107px;font-size:13px;line-height:16px;color:#000;">户外写真</div>
<div class="t" style="left:1502px;top:107px;font-size:13px;line-height:16px;color:#000;">平方</div>
<div class="t" style="left:1530px;top:110px;font-family:'Liberation Mono', monospace;font-size:12px;letter-spacing:-0.2px;line-height:16px;color:#000;width:43px;text-align:right">0.74</div>
<div class="t" style="left:1575px;top:110px;font-family:'Liberation Mono', monospace;font-size:12px;letter-spacing:-0.2px;line-height:16px;color:#000;width:43px;text-align:right">0.40</div>
<div class="t" style="left:1623px;top:110px;font-family:'Liberation Mono', monospace;font-size:12px;letter-spacing:-0.2px;line-height:16px;color:#000">8.00</div>
<div class="t" style="left:1668px;top:110px;font-family:'Liberation Mono', monospace;font-size:12px;letter-spacing:-0.2px;line-height:16px;color:#000">15.00</div>
<div class="t" style="left:1728px;top:110px;font-family:'Liberation Mono', monospace;font-size:12px;letter-spacing:-0.2px;line-height:16px;color:#000">0.00</div>
<div class="t" style="left:1788px;top:110px;font-family:'Liberation Mono', monospace;font-size:12px;letter-spacing:-0.2px;line-height:16px;color:#000">2.37</div>
<div class="t" style="left:1831px;top:110px;font-family:'Liberation Mono', monospace;font-size:12px;letter-spacing:-0.2px;line-height:16px;color:#000">0.00</div>
<div style="position:absolute;left:0px;top:127px;width:44px;height:22px;background:#f0f0f0"></div>
<div class="t" style="left:0px;top:132px;font-family:'Liberation Mono', monospace;font-size:12px;letter-spacing:-0.2px;line-height:16px;color:#000;width:44px;text-align:center">47</div>
<div style="position:absolute;left:110px;top:127px;width:65px;height:22px;background:#f2fbff"></div>
<div style="position:absolute;left:1087px;top:127px;width:812px;height:22px;background:#adfc63"></div>
<div class="t" style="left:1090px;top:129px;font-size:13px;line-height:16px;color:#000;"><span class="m" style="font-size:12px;letter-spacing:-0.2px">2020-01-02</span></div>
<div class="t" style="left:1260px;top:129px;font-size:13px;line-height:16px;color:#000;"><span class="m" style="font-size:12px;letter-spacing:-0.2px">vivo </span>宁海<span class="m" style="font-size:12px;letter-spacing:-0.2px">-</span></div>
<div class="t" style="left:1340px;top:129px;font-size:13px;line-height:16px;color:#000;">户外写真</div>
<div class="t" style="left:1400px;top:129px;font-size:13px;line-height:16px;color:#000;">户外写真</div>
<div class="t" style="left:1502px;top:129px;font-size:13px;line-height:16px;color:#000;">平方</div>
<div class="t" style="left:1530px;top:132px;font-family:'Liberation Mono', monospace;font-size:12px;letter-spacing:-0.2px;line-height:16px;color:#000;width:43px;text-align:right">0.90</div>
<div class="t" style="left:1575px;top:132px;font-family:'Liberation Mono', monospace;font-size:12px;letter-spacing:-0.2px;line-height:16px;color:#000;width:43px;text-align:right">0.10</div>
<div class="t" style="left:1623px;top:132px;font-family:'Liberation Mono', monospace;font-size:12px;letter-spacing:-0.2px;line-height:16px;color:#000">8.00</div>
<div class="t" style="left:1668px;top:132px;font-family:'Liberation Mono', monospace;font-size:12px;letter-spacing:-0.2px;line-height:16px;color:#000">15.00</div>
<div class="t" style="left:1728px;top:132px;font-family:'Liberation Mono', monospace;font-size:12px;letter-spacing:-0.2px;line-height:16px;color:#000">0.00</div>
<div class="t" style="left:1788px;top:132px;font-family:'Liberation Mono', monospace;font-size:12px;letter-spacing:-0.2px;line-height:16px;color:#000">0.72</div>
<div class="t" style="left:1831px;top:132px;font-family:'Liberation Mono', monospace;font-size:12px;letter-spacing:-0.2px;line-height:16px;color:#000">0.00</div>
<div style="position:absolute;left:0px;top:149px;width:44px;height:22px;background:#f0f0f0"></div>
<div class="t" style="left:0px;top:154px;font-family:'Liberation Mono', monospace;font-size:12px;letter-spacing:-0.2px;line-height:16px;color:#000;width:44px;text-align:center">48</div>
<div style="position:absolute;left:110px;top:149px;width:65px;height:22px;background:#fff"></div>
<div style="position:absolute;left:1087px;top:149px;width:812px;height:22px;background:#adfc63"></div>
<div class="t" style="left:1090px;top:151px;font-size:13px;line-height:16px;color:#000;"><span class="m" style="font-size:12px;letter-spacing:-0.2px">2020-01-02</span></div>
<div class="t" style="left:1260px;top:151px;font-size:13px;line-height:16px;color:#000;"><span class="m" style="font-size:12px;letter-spacing:-0.2px">vivo </span>宁海<span class="m" style="font-size:12px;letter-spacing:-0.2px">-</span></div>
<div class="t" style="left:1340px;top:151px;font-size:13px;line-height:16px;color:#000;">户外写真</div>
<div class="t" style="left:1400px;top:151px;font-size:13px;line-height:16px;color:#000;">户外写真</div>
<div class="t" style="left:1502px;top:151px;font-size:13px;line-height:16px;color:#000;">平方</div>
<div class="t" style="left:1530px;top:154px;font-family:'Liberation Mono', monospace;font-size:12px;letter-spacing:-0.2px;line-height:16px;color:#000;width:43px;text-align:right">0.90</div>
<div class="t" style="left:1575px;top:154px;font-family:'Liberation Mono', monospace;font-size:12px;letter-spacing:-0.2px;line-height:16px;color:#000;width:43px;text-align:right">0.40</div>
<div class="t" style="left:1623px;top:154px;font-family:'Liberation Mono', monospace;font-size:12px;letter-spacing:-0.2px;line-height:16px;color:#000">8.00</div>
<div class="t" style="left:1668px;top:154px;font-family:'Liberation Mono', monospace;font-size:12px;letter-spacing:-0.2px;line-height:16px;color:#000">15.00</div>
<div class="t" style="left:1728px;top:154px;font-family:'Liberation Mono', monospace;font-size:12px;letter-spacing:-0.2px;line-height:16px;color:#000">0.00</div>
<div class="t" style="left:1788px;top:154px;font-family:'Liberation Mono', monospace;font-size:12px;letter-spacing:-0.2px;line-height:16px;color:#000">2.88</div>
<div class="t" style="left:1831px;top:154px;font-family:'Liberation Mono', monospace;font-size:12px;letter-spacing:-0.2px;line-height:16px;color:#000">0.00</div>
<div style="position:absolute;left:0px;top:171px;width:44px;height:22px;background:#f0f0f0"></div>
<div class="t" style="left:0px;top:176px;font-family:'Liberation Mono', monospace;font-size:12px;letter-spacing:-0.2px;line-height:16px;color:#000;width:44px;text-align:center">49</div>
<div style="position:absolute;left:110px;top:171px;width:65px;height:22px;background:#f2fbff"></div>
<div style="position:absolute;left:1087px;top:171px;width:812px;height:22px;background:#f2fbff"></div>
<div class="t" style="left:1090px;top:173px;font-size:13px;line-height:16px;color:#000;"><span class="m" style="font-size:12px;letter-spacing:-0.2px">2020-01-05</span></div>
<div class="t" style="left:1260px;top:173px;font-size:13px;line-height:16px;color:#000;"><span class="m" style="font-size:12px;letter-spacing:-0.2px">vivo</span>覃桂林</div>
<div class="t" style="left:1340px;top:173px;font-size:13px;line-height:16px;color:#000;">户外写真</div>
<div class="t" style="left:1400px;top:173px;font-size:13px;line-height:16px;color:#000;">户外写真</div>
<div class="t" style="left:1502px;top:173px;font-size:13px;line-height:16px;color:#000;">平方</div>
<div class="t" style="left:1530px;top:176px;font-family:'Liberation Mono', monospace;font-size:12px;letter-spacing:-0.2px;line-height:16px;color:#000;width:43px;text-align:right">0.76</div>
<div class="t" style="left:1575px;top:176px;font-family:'Liberation Mono', monospace;font-size:12px;letter-spacing:-0.2px;line-height:16px;color:#000;width:43px;text-align:right">0.44</div>
<div class="t" style="left:1623px;top:176px;font-family:'Liberation Mono', monospace;font-size:12px;letter-spacing:-0.2px;line-height:16px;color:#000">1.00</div>
<div class="t" style="left:1668px;top:176px;font-family:'Liberation Mono', monospace;font-size:12px;letter-spacing:-0.2px;line-height:16px;color:#000">15.00</div>
<div class="t" style="left:1728px;top:176px;font-family:'Liberation Mono', monospace;font-size:12px;letter-spacing:-0.2px;line-height:16px;color:#000">0.00</div>
<div class="t" style="left:1788px;top:176px;font-family:'Liberation Mono', monospace;font-size:12px;letter-spacing:-0.2px;line-height:16px;color:#000">0.33</div>
<div class="t" style="left:1831px;top:176px;font-family:'Liberation Mono', monospace;font-size:12px;letter-spacing:-0.2px;line-height:16px;color:#000">0.00</div>
<div style="position:absolute;left:0px;top:193px;width:44px;height:22px;background:#f0f0f0"></div>
<div class="t" style="left:0px;top:198px;font-family:'Liberation Mono', monospace;font-size:12px;letter-spacing:-0.2px;line-height:16px;color:#000;width:44px;text-align:center">50</div>
<div style="position:absolute;left:110px;top:193px;width:65px;height:22px;background:#fff"></div>
<div style="position:absolute;left:1087px;top:193px;width:812px;height:22px;background:#adfc63"></div>
<div class="t" style="left:1090px;top:195px;font-size:13px;line-height:16px;color:#000;"><span class="m" style="font-size:12px;letter-spacing:-0.2px">2020-01-05</span></div>
<div class="t" style="left:1260px;top:195px;font-size:13px;line-height:16px;color:#000;"><span class="m" style="font-size:12px;letter-spacing:-0.2px">vivo</span>覃桂林</div>
<div class="t" style="left:1340px;top:195px;font-size:13px;line-height:16px;color:#000;">室内写真</div>
<div class="t" style="left:1400px;top:195px;font-size:13px;line-height:16px;color:#000;">室内<span class="m" style="font-size:12px;letter-spacing:-0.2px">kt</span>板</div>
<div class="t" style="left:1502px;top:195px;font-size:13px;line-height:16px;color:#000;">平方</div>
<div class="t" style="left:1530px;top:198px;font-family:'Liberation Mono', monospace;font-size:12px;letter-spacing:-0.2px;line-height:16px;color:#000;width:43px;text-align:right">1.96</div>
<div class="t" style="left:1575px;top:198px;font-family:'Liberation Mono', monospace;font-size:12px;letter-spacing:-0.2px;line-height:16px;color:#000;width:43px;text-align:right">0.74</div>
<div class="t" style="left:1623px;top:198px;font-family:'Liberation Mono', monospace;font-size:12px;letter-spacing:-0.2px;line-height:16px;color:#000">1.00</div>
<div class="t" style="left:1668px;top:198px;font-family:'Liberation Mono', monospace;font-size:12px;letter-spacing:-0.2px;line-height:16px;color:#000">21.00</div>
<div class="t" style="left:1728px;top:198px;font-family:'Liberation Mono', monospace;font-size:12px;letter-spacing:-0.2px;line-height:16px;color:#000">0.00</div>
<div class="t" style="left:1788px;top:198px;font-family:'Liberation Mono', monospace;font-size:12px;letter-spacing:-0.2px;line-height:16px;color:#000">1.45</div>
<div class="t" style="left:1831px;top:198px;font-family:'Liberation Mono', monospace;font-size:12px;letter-spacing:-0.2px;line-height:16px;color:#000">0.00</div>
<div style="position:absolute;left:0px;top:215px;width:44px;height:22px;background:#f0f0f0"></div>
<div class="t" style="left:0px;top:220px;font-family:'Liberation Mono', monospace;font-size:12px;letter-spacing:-0.2px;line-height:16px;color:#000;width:44px;text-align:center">51</div>
<div style="position:absolute;left:110px;top:215px;width:65px;height:22px;background:#f2fbff"></div>
<div style="position:absolute;left:1087px;top:215px;width:812px;height:22px;background:#adfc63"></div>
<div class="t" style="left:1090px;top:217px;font-size:13px;line-height:16px;color:#000;"><span class="m" style="font-size:12px;letter-spacing:-0.2px">2020-01-05</span></div>
<div class="t" style="left:1260px;top:217px;font-size:13px;line-height:16px;color:#000;"><span class="m" style="font-size:12px;letter-spacing:-0.2px">vivo</span>覃桂林</div>
<div class="t" style="left:1340px;top:217px;font-size:13px;line-height:16px;color:#000;">室内写真</div>
<div class="t" style="left:1400px;top:217px;font-size:13px;line-height:16px;color:#000;">室内<span class="m" style="font-size:12px;letter-spacing:-0.2px">kt</span>板</div>
<div class="t" style="left:1502px;top:217px;font-size:13px;line-height:16px;color:#000;">平方</div>
<div class="t" style="left:1530px;top:220px;font-family:'Liberation Mono', monospace;font-size:12px;letter-spacing:-0.2px;line-height:16px;color:#000;width:43px;text-align:right">1.22</div>
<div class="t" style="left:1575px;top:220px;font-family:'Liberation Mono', monospace;font-size:12px;letter-spacing:-0.2px;line-height:16px;color:#000;width:43px;text-align:right">0.74</div>
<div class="t" style="left:1623px;top:220px;font-family:'Liberation Mono', monospace;font-size:12px;letter-spacing:-0.2px;line-height:16px;color:#000">1.00</div>
<div class="t" style="left:1668px;top:220px;font-family:'Liberation Mono', monospace;font-size:12px;letter-spacing:-0.2px;line-height:16px;color:#000">21.00</div>
<div class="t" style="left:1728px;top:220px;font-family:'Liberation Mono', monospace;font-size:12px;letter-spacing:-0.2px;line-height:16px;color:#000">0.00</div>
<div class="t" style="left:1788px;top:220px;font-family:'Liberation Mono', monospace;font-size:12px;letter-spacing:-0.2px;line-height:16px;color:#000">0.90</div>
<div class="t" style="left:1831px;top:220px;font-family:'Liberation Mono', monospace;font-size:12px;letter-spacing:-0.2px;line-height:16px;color:#000">0.00</div>
<div style="position:absolute;left:0px;top:237px;width:44px;height:22px;background:#f0f0f0"></div>
<div class="t" style="left:0px;top:242px;font-family:'Liberation Mono', monospace;font-size:12px;letter-spacing:-0.2px;line-height:16px;color:#000;width:44px;text-align:center">52</div>
<div style="position:absolute;left:110px;top:237px;width:65px;height:22px;background:#fff"></div>
<div style="position:absolute;left:1087px;top:237px;width:812px;height:22px;background:#adfc63"></div>
<div class="t" style="left:1090px;top:239px;font-size:13px;line-height:16px;color:#000;"><span class="m" style="font-size:12px;letter-spacing:-0.2px">2020-01-05</span></div>
<div class="t" style="left:1260px;top:239px;font-size:13px;line-height:16px;color:#000;"><span class="m" style="font-size:12px;letter-spacing:-0.2px">vivo</span>覃桂林</div>
<div class="t" style="left:1340px;top:239px;font-size:13px;line-height:16px;color:#000;">室内写真</div>
<div class="t" style="left:1400px;top:239px;font-size:13px;line-height:16px;color:#000;">室内<span class="m" style="font-size:12px;letter-spacing:-0.2px">kt</span>板</div>
<div class="t" style="left:1502px;top:239px;font-size:13px;line-height:16px;color:#000;">平方</div>
<div class="t" style="left:1530px;top:242px;font-family:'Liberation Mono', monospace;font-size:12px;letter-spacing:-0.2px;line-height:16px;color:#000;width:43px;text-align:right">6.00</div>
<div class="t" style="left:1575px;top:242px;font-family:'Liberation Mono', monospace;font-size:12px;letter-spacing:-0.2px;line-height:16px;color:#000;width:43px;text-align:right">0.42</div>
<div class="t" style="left:1623px;top:242px;font-family:'Liberation Mono', monospace;font-size:12px;letter-spacing:-0.2px;line-height:16px;color:#000">1.00</div>
<div class="t" style="left:1668px;top:242px;font-family:'Liberation Mono', monospace;font-size:12px;letter-spacing:-0.2px;line-height:16px;color:#000">21.00</div>
<div class="t" style="left:1728px;top:242px;font-family:'Liberation Mono', monospace;font-size:12px;letter-spacing:-0.2px;line-height:16px;color:#000">0.00</div>
<div class="t" style="left:1788px;top:242px;font-family:'Liberation Mono', monospace;font-size:12px;letter-spacing:-0.2px;line-height:16px;color:#000">2.52</div>
<div class="t" style="left:1831px;top:242px;font-family:'Liberation Mono', monospace;font-size:12px;letter-spacing:-0.2px;line-height:16px;color:#000">0.00</div>
<div style="position:absolute;left:0px;top:259px;width:44px;height:22px;background:#f0f0f0"></div>
<div class="t" style="left:0px;top:264px;font-family:'Liberation Mono', monospace;font-size:12px;letter-spacing:-0.2px;line-height:16px;color:#000;width:44px;text-align:center">53</div>
<div style="position:absolute;left:110px;top:259px;width:65px;height:22px;background:#f2fbff"></div>
<div style="position:absolute;left:1087px;top:259px;width:812px;height:22px;background:#adfc63"></div>
<div class="t" style="left:1090px;top:261px;font-size:13px;line-height:16px;color:#000;"><span class="m" style="font-size:12px;letter-spacing:-0.2px">2020-01-05</span></div>
<div class="t" style="left:1260px;top:261px;font-size:13px;line-height:16px;color:#000;"><span class="m" style="font-size:12px;letter-spacing:-0.2px">vivo </span>周平</div>
<div class="t" style="left:1340px;top:261px;font-size:13px;line-height:16px;color:#000;">室内写真</div>
<div class="t" style="left:1400px;top:261px;font-size:13px;line-height:16px;color:#000;">灯片</div>
<div class="t" style="left:1502px;top:261px;font-size:13px;line-height:16px;color:#000;">平方</div>
<div class="t" style="left:1530px;top:264px;font-family:'Liberation Mono', monospace;font-size:12px;letter-spacing:-0.2px;line-height:16px;color:#000;width:43px;text-align:right">0.55</div>
<div class="t" style="left:1575px;top:264px;font-family:'Liberation Mono', monospace;font-size:12px;letter-spacing:-0.2px;line-height:16px;color:#000;width:43px;text-align:right">1.95</div>
<div class="t" style="left:1623px;top:264px;font-family:'Liberation Mono', monospace;font-size:12px;letter-spacing:-0.2px;line-height:16px;color:#000">9.00</div>
<div class="t" style="left:1668px;top:264px;font-family:'Liberation Mono', monospace;font-size:12px;letter-spacing:-0.2px;line-height:16px;color:#000">17.00</div>
<div class="t" style="left:1728px;top:264px;font-family:'Liberation Mono', monospace;font-size:12px;letter-spacing:-0.2px;line-height:16px;color:#000">0.00</div>
<div class="t" style="left:1788px;top:264px;font-family:'Liberation Mono', monospace;font-size:12px;letter-spacing:-0.2px;line-height:16px;color:#000">10.00</div>
<div class="t" style="left:1831px;top:264px;font-family:'Liberation Mono', monospace;font-size:12px;letter-spacing:-0.2px;line-height:16px;color:#000">0.00</div>
<div style="position:absolute;left:0px;top:281px;width:44px;height:22px;background:#f0f0f0"></div>
<div class="t" style="left:0px;top:286px;font-family:'Liberation Mono', monospace;font-size:12px;letter-spacing:-0.2px;line-height:16px;color:#000;width:44px;text-align:center">54</div>
<div style="position:absolute;left:110px;top:281px;width:65px;height:22px;background:#fff"></div>
<div style="position:absolute;left:1087px;top:281px;width:812px;height:22px;background:#fff"></div>
<div class="t" style="left:1090px;top:283px;font-size:13px;line-height:16px;color:#000;"><span class="m" style="font-size:12px;letter-spacing:-0.2px">2020-01-05</span></div>
<div class="t" style="left:1260px;top:283px;font-size:13px;line-height:16px;color:#000;"><span class="m" style="font-size:12px;letter-spacing:-0.2px">vivo </span>明泽华</div>
<div class="t" style="left:1340px;top:283px;font-size:13px;line-height:16px;color:#000;">户外写真</div>
<div class="t" style="left:1400px;top:283px;font-size:13px;line-height:16px;color:#000;">户外写真</div>
<div class="t" style="left:1502px;top:283px;font-size:13px;line-height:16px;color:#000;">平方</div>
<div class="t" style="left:1530px;top:286px;font-family:'Liberation Mono', monospace;font-size:12px;letter-spacing:-0.2px;line-height:16px;color:#000;width:43px;text-align:right">0.62</div>
<div class="t" style="left:1575px;top:286px;font-family:'Liberation Mono', monospace;font-size:12px;letter-spacing:-0.2px;line-height:16px;color:#000;width:43px;text-align:right">0.35</div>
<div class="t" style="left:1623px;top:286px;font-family:'Liberation Mono', monospace;font-size:12px;letter-spacing:-0.2px;line-height:16px;color:#000">4.00</div>
<div class="t" style="left:1668px;top:286px;font-family:'Liberation Mono', monospace;font-size:12px;letter-spacing:-0.2px;line-height:16px;color:#000">15.00</div>
<div class="t" style="left:1728px;top:286px;font-family:'Liberation Mono', monospace;font-size:12px;letter-spacing:-0.2px;line-height:16px;color:#000">0.00</div>
<div class="t" style="left:1788px;top:286px;font-family:'Liberation Mono', monospace;font-size:12px;letter-spacing:-0.2px;line-height:16px;color:#000">0.87</div>
<div class="t" style="left:1831px;top:286px;font-family:'Liberation Mono', monospace;font-size:12px;letter-spacing:-0.2px;line-height:16px;color:#000">0.00</div>
<div style="position:absolute;left:0px;top:303px;width:44px;height:22px;background:#f0f0f0"></div>
<div class="t" style="left:0px;top:308px;font-family:'Liberation Mono', monospace;font-size:12px;letter-spacing:-0.2px;line-height:16px;color:#000;width:44px;text-align:center">55</div>
<div style="position:absolute;left:110px;top:303px;width:65px;height:22px;background:#f2fbff"></div>
<div style="position:absolute;left:1087px;top:303px;width:812px;height:22px;background:#f2fbff"></div>
<div class="t" style="left:1090px;top:305px;font-size:13px;line-height:16px;color:#000;"><span class="m" style="font-size:12px;letter-spacing:-0.2px">2020-01-05</span></div>
<div class="t" style="left:1260px;top:305px;font-size:13px;line-height:16px;color:#000;"><span class="m" style="font-size:12px;letter-spacing:-0.2px">vivo </span>明泽华</div>
<div class="t" style="left:1340px;top:305px;font-size:13px;line-height:16px;color:#000;">户外写真</div>
<div class="t" style="left:1400px;top:305px;font-size:13px;line-height:16px;color:#000;">户外写真</div>
<div class="t" style="left:1502px;top:305px;font-size:13px;line-height:16px;color:#000;">平方</div>
<div class="t" style="left:1530px;top:308px;font-family:'Liberation Mono', monospace;font-size:12px;letter-spacing:-0.2px;line-height:16px;color:#000;width:43px;text-align:right">0.85</div>
<div class="t" style="left:1575px;top:308px;font-family:'Liberation Mono', monospace;font-size:12px;letter-spacing:-0.2px;line-height:16px;color:#000;width:43px;text-align:right">0.35</div>
<div class="t" style="left:1623px;top:308px;font-family:'Liberation Mono', monospace;font-size:12px;letter-spacing:-0.2px;line-height:16px;color:#000">4.00</div>
<div class="t" style="left:1668px;top:308px;font-family:'Liberation Mono', monospace;font-size:12px;letter-spacing:-0.2px;line-height:16px;color:#000">15.00</div>
<div class="t" style="left:1728px;top:308px;font-family:'Liberation Mono', monospace;font-size:12px;letter-spacing:-0.2px;line-height:16px;color:#000">0.00</div>
<div class="t" style="left:1788px;top:308px;font-family:'Liberation Mono', monospace;font-size:12px;letter-spacing:-0.2px;line-height:16px;color:#000">1.19</div>
<div class="t" style="left:1831px;top:308px;font-family:'Liberation Mono', monospace;font-size:12px;letter-spacing:-0.2px;line-height:16px;color:#000">0.00</div>
<div style="position:absolute;left:0px;top:325px;width:44px;height:22px;background:#f0f0f0"></div>
<div class="t" style="left:0px;top:330px;font-family:'Liberation Mono', monospace;font-size:12px;letter-spacing:-0.2px;line-height:16px;color:#000;width:44px;text-align:center">56</div>
<div style="position:absolute;left:110px;top:325px;width:65px;height:22px;background:#fff"></div>
<div style="position:absolute;left:1087px;top:325px;width:812px;height:22px;background:#fff"></div>
<div class="t" style="left:1090px;top:327px;font-size:13px;line-height:16px;color:#000;"><span class="m" style="font-size:12px;letter-spacing:-0.2px">2020-01-05</span></div>
<div class="t" style="left:1260px;top:327px;font-size:13px;line-height:16px;color:#000;"><span class="m" style="font-size:12px;letter-spacing:-0.2px">vivo </span>明泽华</div>
<div class="t" style="left:1340px;top:327px;font-size:13px;line-height:16px;color:#000;">户外写真</div>
<div class="t" style="left:1400px;top:327px;font-size:13px;line-height:16px;color:#000;">户外写真</div>
<div class="t" style="left:1502px;top:327px;font-size:13px;line-height:16px;color:#000;">平方</div>
<div class="t" style="left:1530px;top:330px;font-family:'Liberation Mono', monospace;font-size:12px;letter-spacing:-0.2px;line-height:16px;color:#000;width:43px;text-align:right">0.89</div>
<div class="t" style="left:1575px;top:330px;font-family:'Liberation Mono', monospace;font-size:12px;letter-spacing:-0.2px;line-height:16px;color:#000;width:43px;text-align:right">0.35</div>
<div class="t" style="left:1623px;top:330px;font-family:'Liberation Mono', monospace;font-size:12px;letter-spacing:-0.2px;line-height:16px;color:#000">4.00</div>
<div class="t" style="left:1668px;top:330px;font-family:'Liberation Mono', monospace;font-size:12px;letter-spacing:-0.2px;line-height:16px;color:#000">15.00</div>
<div class="t" style="left:1728px;top:330px;font-family:'Liberation Mono', monospace;font-size:12px;letter-spacing:-0.2px;line-height:16px;color:#000">0.00</div>
<div class="t" style="left:1788px;top:330px;font-family:'Liberation Mono', monospace;font-size:12px;letter-spacing:-0.2px;line-height:16px;color:#000">1.25</div>
<div class="t" style="left:1831px;top:330px;font-family:'Liberation Mono', monospace;font-size:12px;letter-spacing:-0.2px;line-height:16px;color:#000">0.00</div>
<div style="position:absolute;left:0px;top:347px;width:44px;height:22px;background:#f0f0f0"></div>
<div class="t" style="left:0px;top:352px;font-family:'Liberation Mono', monospace;font-size:12px;letter-spacing:-0.2px;line-height:16px;color:#000;width:44px;text-align:center">57</div>
<div style="position:absolute;left:110px;top:347px;width:65px;height:22px;background:#f2fbff"></div>
<div style="position:absolute;left:1087px;top:347px;width:812px;height:22px;background:#f2fbff"></div>
<div class="t" style="left:1090px;top:349px;font-size:13px;line-height:16px;color:#000;"><span class="m" style="font-size:12px;letter-spacing:-0.2px">2020-01-05</span></div>
<div class="t" style="left:1260px;top:349px;font-size:13px;line-height:16px;color:#000;"><span class="m" style="font-size:12px;letter-spacing:-0.2px">vivo </span>明泽华</div>
<div class="t" style="left:1340px;top:349px;font-size:13px;line-height:16px;color:#000;">户外写真</div>
<div class="t" style="left:1400px;top:349px;font-size:13px;line-height:16px;color:#000;">户外写真</div>
<div class="t" style="left:1502px;top:349px;font-size:13px;line-height:16px;color:#000;">平方</div>
<div class="t" style="left:1530px;top:352px;font-family:'Liberation Mono', monospace;font-size:12px;letter-spacing:-0.2px;line-height:16px;color:#000;width:43px;text-align:right">0.52</div>
<div class="t" style="left:1575px;top:352px;font-family:'Liberation Mono', monospace;font-size:12px;letter-spacing:-0.2px;line-height:16px;color:#000;width:43px;text-align:right">0.35</div>
<div class="t" style="left:1623px;top:352px;font-family:'Liberation Mono', monospace;font-size:12px;letter-spacing:-0.2px;line-height:16px;color:#000">4.00</div>
<div class="t" style="left:1668px;top:352px;font-family:'Liberation Mono', monospace;font-size:12px;letter-spacing:-0.2px;line-height:16px;color:#000">15.00</div>
<div class="t" style="left:1728px;top:352px;font-family:'Liberation Mono', monospace;font-size:12px;letter-spacing:-0.2px;line-height:16px;color:#000">0.00</div>
<div class="t" style="left:1788px;top:352px;font-family:'Liberation Mono', monospace;font-size:12px;letter-spacing:-0.2px;line-height:16px;color:#000">0.73</div>
<div class="t" style="left:1831px;top:352px;font-family:'Liberation Mono', monospace;font-size:12px;letter-spacing:-0.2px;line-height:16px;color:#000">0.00</div>
<div style="position:absolute;left:0px;top:369px;width:44px;height:22px;background:#f0f0f0"></div>
<div class="t" style="left:0px;top:374px;font-family:'Liberation Mono', monospace;font-size:12px;letter-spacing:-0.2px;line-height:16px;color:#000;width:44px;text-align:center">58</div>
<div style="position:absolute;left:110px;top:369px;width:65px;height:22px;background:#fff"></div>
<div style="position:absolute;left:1087px;top:369px;width:812px;height:22px;background:#fff"></div>
<div class="t" style="left:1090px;top:371px;font-size:13px;line-height:16px;color:#000;"><span class="m" style="font-size:12px;letter-spacing:-0.2px">2020-01-06</span></div>
<div class="t" style="left:1260px;top:371px;font-size:13px;line-height:16px;color:#000;"><span class="m" style="font-size:12px;letter-spacing:-0.2px">vivo </span>李文凯</div>
<div class="t" style="left:1340px;top:371px;font-size:13px;line-height:16px;color:#000;">室内写真</div>
<div class="t" style="left:1400px;top:371px;font-size:13px;line-height:16px;color:#000;">灯片</div>
<div class="t" style="left:1502px;top:371px;font-size:13px;line-height:16px;color:#000;">平方</div>
<div class="t" style="left:1530px;top:374px;font-family:'Liberation Mono', monospace;font-size:12px;letter-spacing:-0.2px;line-height:16px;color:#000;width:43px;text-align:right">0.60</div>
<div class="t" style="left:1575px;top:374px;font-family:'Liberation Mono', monospace;font-size:12px;letter-spacing:-0.2px;line-height:16px;color:#000;width:43px;text-align:right">0.27</div>
<div class="t" style="left:1623px;top:374px;font-family:'Liberation Mono', monospace;font-size:12px;letter-spacing:-0.2px;line-height:16px;color:#000">4.00</div>
<div class="t" style="left:1668px;top:374px;font-family:'Liberation Mono', monospace;font-size:12px;letter-spacing:-0.2px;line-height:16px;color:#000">17.00</div>
<div class="t" style="left:1728px;top:374px;font-family:'Liberation Mono', monospace;font-size:12px;letter-spacing:-0.2px;line-height:16px;color:#000">0.00</div>
<div class="t" style="left:1788px;top:374px;font-family:'Liberation Mono', monospace;font-size:12px;letter-spacing:-0.2px;line-height:16px;color:#000">1.00</div>
<div class="t" style="left:1831px;top:374px;font-family:'Liberation Mono', monospace;font-size:12px;letter-spacing:-0.2px;line-height:16px;color:#000">0.00</div>
<div style="position:absolute;left:0px;top:391px;width:44px;height:22px;background:#f0f0f0"></div>
<div class="t" style="left:0px;top:396px;font-family:'Liberation Mono', monospace;font-size:12px;letter-spacing:-0.2px;line-height:16px;color:#000;width:44px;text-align:center">59</div>
<div style="position:absolute;left:110px;top:391px;width:65px;height:22px;background:#f2fbff"></div>
<div style="position:absolute;left:1087px;top:391px;width:812px;height:22px;background:#f2fbff"></div>
<div class="t" style="left:1090px;top:393px;font-size:13px;line-height:16px;color:#000;"><span class="m" style="font-size:12px;letter-spacing:-0.2px">2020-01-09</span></div>
<div class="t" style="left:1260px;top:393px;font-size:13px;line-height:16px;color:#000;"><span class="m" style="font-size:12px;letter-spacing:-0.2px">vivo </span>向军</div>
<div class="t" style="left:1340px;top:393px;font-size:13px;line-height:16px;color:#000;">喷绘</div>
<div class="t" style="left:1400px;top:393px;font-size:13px;line-height:16px;color:#000;">喷绘</div>
<div class="t" style="left:1502px;top:393px;font-size:13px;line-height:16px;color:#000;">平方</div>
<div class="t" style="left:1530px;top:396px;font-family:'Liberation Mono', monospace;font-size:12px;letter-spacing:-0.2px;line-height:16px;color:#000;width:43px;text-align:right">3.00</div>
<div class="t" style="left:1575px;top:396px;font-family:'Liberation Mono', monospace;font-size:12px;letter-spacing:-0.2px;line-height:16px;color:#000;width:43px;text-align:right">6.00</div>
<div class="t" style="left:1623px;top:396px;font-family:'Liberation Mono', monospace;font-size:12px;letter-spacing:-0.2px;line-height:16px;color:#000">3.00</div>
<div class="t" style="left:1668px;top:396px;font-family:'Liberation Mono', monospace;font-size:12px;letter-spacing:-0.2px;line-height:16px;color:#000">6.00</div>
<div class="t" style="left:1728px;top:396px;font-family:'Liberation Mono', monospace;font-size:12px;letter-spacing:-0.2px;line-height:16px;color:#000">0.00</div>
<div class="t" style="left:1788px;top:396px;font-family:'Liberation Mono', monospace;font-size:12px;letter-spacing:-0.2px;line-height:16px;color:#000">53.99</div>
<div class="t" style="left:1831px;top:396px;font-family:'Liberation Mono', monospace;font-size:12px;letter-spacing:-0.2px;line-height:16px;color:#000">0.00</div>
<div style="position:absolute;left:0px;top:413px;width:44px;height:22px;background:#f0f0f0"></div>
<div class="t" style="left:0px;top:418px;font-family:'Liberation Mono', monospace;font-size:12px;letter-spacing:-0.2px;line-height:16px;color:#000;width:44px;text-align:center">60</div>
<div style="position:absolute;left:110px;top:413px;width:65px;height:22px;background:#fff"></div>
<div style="position:absolute;left:1087px;top:413px;width:812px;height:22px;background:#fff"></div>
<div class="t" style="left:1090px;top:415px;font-size:13px;line-height:16px;color:#000;"><span class="m" style="font-size:12px;letter-spacing:-0.2px">2020-01-09</span></div>
<div class="t" style="left:1260px;top:415px;font-size:13px;line-height:16px;color:#000;"><span class="m" style="font-size:12px;letter-spacing:-0.2px">vivo </span>李文凯</div>
<div class="t" style="left:1340px;top:415px;font-size:13px;line-height:16px;color:#000;">室内写真</div>
<div class="t" style="left:1400px;top:415px;font-size:13px;line-height:16px;color:#000;">室内<span class="m" style="font-size:12px;letter-spacing:-0.2px">kt</span>板</div>
<div class="t" style="left:1502px;top:415px;font-size:13px;line-height:16px;color:#000;">平方</div>
<div class="t" style="left:1530px;top:418px;font-family:'Liberation Mono', monospace;font-size:12px;letter-spacing:-0.2px;line-height:16px;color:#000;width:43px;text-align:right">0.60</div>
<div class="t" style="left:1575px;top:418px;font-family:'Liberation Mono', monospace;font-size:12px;letter-spacing:-0.2px;line-height:16px;color:#000;width:43px;text-align:right">0.90</div>
<div class="t" style="left:1623px;top:418px;font-family:'Liberation Mono', monospace;font-size:12px;letter-spacing:-0.2px;line-height:16px;color:#000">1.00</div>
<div class="t" style="left:1668px;top:418px;font-family:'Liberation Mono', monospace;font-size:12px;letter-spacing:-0.2px;line-height:16px;color:#000">21.00</div>
<div class="t" style="left:1728px;top:418px;font-family:'Liberation Mono', monospace;font-size:12px;letter-spacing:-0.2px;line-height:16px;color:#000">0.00</div>
<div class="t" style="left:1788px;top:418px;font-family:'Liberation Mono', monospace;font-size:12px;letter-spacing:-0.2px;line-height:16px;color:#000">0.54</div>
<div class="t" style="left:1831px;top:418px;font-family:'Liberation Mono', monospace;font-size:12px;letter-spacing:-0.2px;line-height:16px;color:#000">0.00</div>
<div style="position:absolute;left:0px;top:435px;width:44px;height:22px;background:#f0f0f0"></div>
<div class="t" style="left:0px;top:440px;font-family:'Liberation Mono', monospace;font-size:12px;letter-spacing:-0.2px;line-height:16px;color:#000;width:44px;text-align:center">61</div>
<div style="position:absolute;left:110px;top:435px;width:65px;height:22px;background:#f2fbff"></div>
<div style="position:absolute;left:1087px;top:435px;width:812px;height:22px;background:#f2fbff"></div>
<div class="t" style="left:1090px;top:437px;font-size:13px;line-height:16px;color:#000;"><span class="m" style="font-size:12px;letter-spacing:-0.2px">2020-01-10</span></div>
<div class="t" style="left:1260px;top:437px;font-size:13px;line-height:16px;color:#000;"><span class="m" style="font-size:12px;letter-spacing:-0.2px">vivo </span>宁海胜</div>
<div class="t" style="left:1340px;top:437px;font-size:13px;line-height:16px;color:#000;">室内写真</div>
<div class="t" style="left:1400px;top:437px;font-size:13px;line-height:16px;color:#000;">室内<span class="m" style="font-size:12px;letter-spacing:-0.2px">kt</span>板</div>
<div class="t" style="left:1502px;top:437px;font-size:13px;line-height:16px;color:#000;">平方</div>
<div class="t" style="left:1530px;top:440px;font-family:'Liberation Mono', monospace;font-size:12px;letter-spacing:-0.2px;line-height:16px;color:#000;width:43px;text-align:right">0.60</div>
<div class="t" style="left:1575px;top:440px;font-family:'Liberation Mono', monospace;font-size:12px;letter-spacing:-0.2px;line-height:16px;color:#000;width:43px;text-align:right">0.90</div>
<div class="t" style="left:1623px;top:440px;font-family:'Liberation Mono', monospace;font-size:12px;letter-spacing:-0.2px;line-height:16px;color:#000">1.00</div>
<div class="t" style="left:1668px;top:440px;font-family:'Liberation Mono', monospace;font-size:12px;letter-spacing:-0.2px;line-height:16px;color:#000">21.00</div>
<div class="t" style="left:1728px;top:440px;font-family:'Liberation Mono', monospace;font-size:12px;letter-spacing:-0.2px;line-height:16px;color:#000">0.00</div>
<div class="t" style="left:1788px;top:440px;font-family:'Liberation Mono', monospace;font-size:12px;letter-spacing:-0.2px;line-height:16px;color:#000">0.54</div>
<div class="t" style="left:1831px;top:440px;font-family:'Liberation Mono', monospace;font-size:12px;letter-spacing:-0.2px;line-height:16px;color:#000">0.00</div>
<div style="position:absolute;left:0px;top:457px;width:44px;height:22px;background:#f0f0f0"></div>
<div class="t" style="left:0px;top:462px;font-family:'Liberation Mono', monospace;font-size:12px;letter-spacing:-0.2px;line-height:16px;color:#000;width:44px;text-align:center">62</div>
<div style="position:absolute;left:110px;top:457px;width:65px;height:22px;background:#fff"></div>
<div style="position:absolute;left:1087px;top:457px;width:812px;height:22px;background:#fff"></div>
<div class="t" style="left:1090px;top:459px;font-size:13px;line-height:16px;color:#000;"><span class="m" style="font-size:12px;letter-spacing:-0.2px">2020-01-10</span></div>
<div class="t" style="left:1260px;top:459px;font-size:13px;line-height:16px;color:#000;"><span class="m" style="font-size:12px;letter-spacing:-0.2px">vivo </span>宁海西</div>
<div class="t" style="left:1340px;top:459px;font-size:13px;line-height:16px;color:#000;">室内写真</div>
<div class="t" style="left:1400px;top:459px;font-size:13px;line-height:16px;color:#000;">室内<span class="m" style="font-size:12px;letter-spacing:-0.2px">kt</span>板</div>
<div class="t" style="left:1502px;top:459px;font-size:13px;line-height:16px;color:#000;">平方</div>
<div class="t" style="left:1530px;top:462px;font-family:'Liberation Mono', monospace;font-size:12px;letter-spacing:-0.2px;line-height:16px;color:#000;width:43px;text-align:right">0.60</div>
<div class="t" style="left:1575px;top:462px;font-family:'Liberation Mono', monospace;font-size:12px;letter-spacing:-0.2px;line-height:16px;color:#000;width:43px;text-align:right">0.90</div>
<div class="t" style="left:1623px;top:462px;font-family:'Liberation Mono', monospace;font-size:12px;letter-spacing:-0.2px;line-height:16px;color:#000">1.00</div>
<div class="t" style="left:1668px;top:462px;font-family:'Liberation Mono', monospace;font-size:12px;letter-spacing:-0.2px;line-height:16px;color:#000">21.00</div>
<div class="t" style="left:1728px;top:462px;font-family:'Liberation Mono', monospace;font-size:12px;letter-spacing:-0.2px;line-height:16px;color:#000">0.00</div>
<div class="t" style="left:1788px;top:462px;font-family:'Liberation Mono', monospace;font-size:12px;letter-spacing:-0.2px;line-height:16px;color:#000">0.54</div>
<div class="t" style="left:1831px;top:462px;font-family:'Liberation Mono', monospace;font-size:12px;letter-spacing:-0.2px;line-height:16px;color:#000">0.00</div>
<div style="position:absolute;left:0px;top:479px;width:44px;height:22px;background:#f0f0f0"></div>
<div class="t" style="left:0px;top:484px;font-family:'Liberation Mono', monospace;font-size:12px;letter-spacing:-0.2px;line-height:16px;color:#000;width:44px;text-align:center">63</div>
<div style="position:absolute;left:110px;top:479px;width:65px;height:22px;background:#f2fbff"></div>
<div style="position:absolute;left:1087px;top:479px;width:812px;height:22px;background:#f2fbff"></div>
<div class="t" style="left:1090px;top:481px;font-size:13px;line-height:16px;color:#000;"><span class="m" style="font-size:12px;letter-spacing:-0.2px">2020-01-10</span></div>
<div class="t" style="left:1260px;top:481px;font-size:13px;line-height:16px;color:#000;"><span class="m" style="font-size:12px;letter-spacing:-0.2px">vivo </span>宁海西</div>
<div class="t" style="left:1340px;top:481px;font-size:13px;line-height:16px;color:#000;">室内写真</div>
<div class="t" style="left:1400px;top:481px;font-size:13px;line-height:16px;color:#000;">室内<span class="m" style="font-size:12px;letter-spacing:-0.2px">kt</span>板</div>
<div class="t" style="left:1502px;top:481px;font-size:13px;line-height:16px;color:#000;">平方</div>
<div class="t" style="left:1530px;top:484px;font-family:'Liberation Mono', monospace;font-size:12px;letter-spacing:-0.2px;line-height:16px;color:#000;width:43px;text-align:right">0.60</div>
<div class="t" style="left:1575px;top:484px;font-family:'Liberation Mono', monospace;font-size:12px;letter-spacing:-0.2px;line-height:16px;color:#000;width:43px;text-align:right">0.90</div>
<div class="t" style="left:1623px;top:484px;font-family:'Liberation Mono', monospace;font-size:12px;letter-spacing:-0.2px;line-height:16px;color:#000">1.00</div>
<div class="t" style="left:1668px;top:484px;font-family:'Liberation Mono', monospace;font-size:12px;letter-spacing:-0.2px;line-height:16px;color:#000">21.00</div>
<div class="t" style="left:1728px;top:484px;font-family:'Liberation Mono', monospace;font-size:12px;letter-spacing:-0.2px;line-height:16px;color:#000">0.00</div>
<div class="t" style="left:1788px;top:484px;font-family:'Liberation Mono', monospace;font-size:12px;letter-spacing:-0.2px;line-height:16px;color:#000">0.54</div>
<div class="t" style="left:1831px;top:484px;font-family:'Liberation Mono', monospace;font-size:12px;letter-spacing:-0.2px;line-height:16px;color:#000">0.00</div>
<div style="position:absolute;left:0px;top:501px;width:44px;height:22px;background:#f0f0f0"></div>
<div class="t" style="left:0px;top:506px;font-family:'Liberation Mono', monospace;font-size:12px;letter-spacing:-0.2px;line-height:16px;color:#000;width:44px;text-align:center">64</div>
<div style="position:absolute;left:110px;top:501px;width:65px;height:22px;background:#fff"></div>
<div style="position:absolute;left:1087px;top:501px;width:812px;height:22px;background:#fff"></div>
<div class="t" style="left:1090px;top:503px;font-size:13px;line-height:16px;color:#000;"><span class="m" style="font-size:12px;letter-spacing:-0.2px">2020-01-10</span></div>
<div class="t" style="left:1260px;top:503px;font-size:13px;line-height:16px;color:#000;"><span class="m" style="font-size:12px;letter-spacing:-0.2px">vivo </span>宁海中</div>
<div class="t" style="left:1340px;top:503px;font-size:13px;line-height:16px;color:#000;">室内写真</div>
<div class="t" style="left:1400px;top:503px;font-size:13px;line-height:16px;color:#000;">室内<span class="m" style="font-size:12px;letter-spacing:-0.2px">kt</span>板</div>
<div class="t" style="left:1502px;top:503px;font-size:13px;line-height:16px;color:#000;">平方</div>
<div class="t" style="left:1530px;top:506px;font-family:'Liberation Mono', monospace;font-size:12px;letter-spacing:-0.2px;line-height:16px;color:#000;width:43px;text-align:right">0.60</div>
<div class="t" style="left:1575px;top:506px;font-family:'Liberation Mono', monospace;font-size:12px;letter-spacing:-0.2px;line-height:16px;color:#000;width:43px;text-align:right">0.90</div>
<div class="t" style="left:1623px;top:506px;font-family:'Liberation Mono', monospace;font-size:12px;letter-spacing:-0.2px;line-height:16px;color:#000">1.00</div>
<div class="t" style="left:1668px;top:506px;font-family:'Liberation Mono', monospace;font-size:12px;letter-spacing:-0.2px;line-height:16px;color:#000">21.00</div>
<div class="t" style="left:1728px;top:506px;font-family:'Liberation Mono', monospace;font-size:12px;letter-spacing:-0.2px;line-height:16px;color:#000">0.00</div>
<div class="t" style="left:1788px;top:506px;font-family:'Liberation Mono', monospace;font-size:12px;letter-spacing:-0.2px;line-height:16px;color:#000">0.54</div>
<div class="t" style="left:1831px;top:506px;font-family:'Liberation Mono', monospace;font-size:12px;letter-spacing:-0.2px;line-height:16px;color:#000">0.00</div>
<div style="position:absolute;left:0px;top:523px;width:44px;height:22px;background:#f0f0f0"></div>
<div class="t" style="left:0px;top:528px;font-family:'Liberation Mono', monospace;font-size:12px;letter-spacing:-0.2px;line-height:16px;color:#000;width:44px;text-align:center">65</div>
<div style="position:absolute;left:110px;top:523px;width:65px;height:22px;background:#f2fbff"></div>
<div style="position:absolute;left:1087px;top:523px;width:812px;height:22px;background:#f2fbff"></div>
<div class="t" style="left:1090px;top:525px;font-size:13px;line-height:16px;color:#000;"><span class="m" style="font-size:12px;letter-spacing:-0.2px">2020-01-10</span></div>
<div class="t" style="left:1260px;top:525px;font-size:13px;line-height:16px;color:#000;"><span class="m" style="font-size:12px;letter-spacing:-0.2px">vivo </span>宁海方</div>
<div class="t" style="left:1340px;top:525px;font-size:13px;line-height:16px;color:#000;">室内写真</div>
<div class="t" style="left:1400px;top:525px;font-size:13px;line-height:16px;color:#000;">室内<span class="m" style="font-size:12px;letter-spacing:-0.2px">kt</span>板</div>
<div class="t" style="left:1502px;top:525px;font-size:13px;line-height:16px;color:#000;">平方</div>
<div class="t" style="left:1530px;top:528px;font-family:'Liberation Mono', monospace;font-size:12px;letter-spacing:-0.2px;line-height:16px;color:#000;width:43px;text-align:right">0.60</div>
<div class="t" style="left:1575px;top:528px;font-family:'Liberation Mono', monospace;font-size:12px;letter-spacing:-0.2px;line-height:16px;color:#000;width:43px;text-align:right">0.90</div>
<div class="t" style="left:1623px;top:528px;font-family:'Liberation Mono', monospace;font-size:12px;letter-spacing:-0.2px;line-height:16px;color:#000">1.00</div>
<div class="t" style="left:1668px;top:528px;font-family:'Liberation Mono', monospace;font-size:12px;letter-spacing:-0.2px;line-height:16px;color:#000">21.00</div>
<div class="t" style="left:1728px;top:528px;font-family:'Liberation Mono', monospace;font-size:12px;letter-spacing:-0.2px;line-height:16px;color:#000">0.00</div>
<div class="t" style="left:1788px;top:528px;font-family:'Liberation Mono', monospace;font-size:12px;letter-spacing:-0.2px;line-height:16px;color:#000">0.54</div>
<div class="t" style="left:1831px;top:528px;font-family:'Liberation Mono', monospace;font-size:12px;letter-spacing:-0.2px;line-height:16px;color:#000">0.00</div>
<div style="position:absolute;left:0px;top:545px;width:44px;height:22px;background:#f0f0f0"></div>
<div class="t" style="left:0px;top:550px;font-family:'Liberation Mono', monospace;font-size:12px;letter-spacing:-0.2px;line-height:16px;color:#000;width:44px;text-align:center">66</div>
<div style="position:absolute;left:110px;top:545px;width:65px;height:22px;background:#fff"></div>
<div style="position:absolute;left:1087px;top:545px;width:812px;height:22px;background:#fff"></div>
<div class="t" style="left:1090px;top:547px;font-size:13px;line-height:16px;color:#000;"><span class="m" style="font-size:12px;letter-spacing:-0.2px">2020-01-10</span></div>
<div class="t" style="left:1260px;top:547px;font-size:13px;line-height:16px;color:#000;"><span class="m" style="font-size:12px;letter-spacing:-0.2px">vivo </span>宁海奉</div>
<div class="t" style="left:1340px;top:547px;font-size:13px;line-height:16px;color:#000;">室内写真</div>
<div class="t" style="left:1400px;top:547px;font-size:13px;line-height:16px;color:#000;">室内<span class="m" style="font-size:12px;letter-spacing:-0.2px">kt</span>板</div>
<div class="t" style="left:1502px;top:547px;font-size:13px;line-height:16px;color:#000;">平方</div>
<div class="t" style="left:1530px;top:550px;font-family:'Liberation Mono', monospace;font-size:12px;letter-spacing:-0.2px;line-height:16px;color:#000;width:43px;text-align:right">0.60</div>
<div class="t" style="left:1575px;top:550px;font-family:'Liberation Mono', monospace;font-size:12px;letter-spacing:-0.2px;line-height:16px;color:#000;width:43px;text-align:right">0.90</div>
<div class="t" style="left:1623px;top:550px;font-family:'Liberation Mono', monospace;font-size:12px;letter-spacing:-0.2px;line-height:16px;color:#000">1.00</div>
<div class="t" style="left:1668px;top:550px;font-family:'Liberation Mono', monospace;font-size:12px;letter-spacing:-0.2px;line-height:16px;color:#000">21.00</div>
<div class="t" style="left:1728px;top:550px;font-family:'Liberation Mono', monospace;font-size:12px;letter-spacing:-0.2px;line-height:16px;color:#000">0.00</div>
<div class="t" style="left:1788px;top:550px;font-family:'Liberation Mono', monospace;font-size:12px;letter-spacing:-0.2px;line-height:16px;color:#000">0.54</div>
<div class="t" style="left:1831px;top:550px;font-family:'Liberation Mono', monospace;font-size:12px;letter-spacing:-0.2px;line-height:16px;color:#000">0.00</div>
<div style="position:absolute;left:0px;top:567px;width:44px;height:22px;background:#f0f0f0"></div>
<div class="t" style="left:0px;top:572px;font-family:'Liberation Mono', monospace;font-size:12px;letter-spacing:-0.2px;line-height:16px;color:#000;width:44px;text-align:center">67</div>
<div style="position:absolute;left:110px;top:567px;width:65px;height:22px;background:#f2fbff"></div>
<div style="position:absolute;left:1087px;top:567px;width:812px;height:22px;background:#f2fbff"></div>
<div class="t" style="left:1090px;top:569px;font-size:13px;line-height:16px;color:#000;"><span class="m" style="font-size:12px;letter-spacing:-0.2px">2020-01-12</span></div>
<div class="t" style="left:1260px;top:569px;font-size:13px;line-height:16px;color:#000;"><span class="m" style="font-size:12px;letter-spacing:-0.2px">vivo </span>冯鑫华</div>
<div class="t" style="left:1340px;top:569px;font-size:13px;line-height:16px;color:#000;">室内写真</div>
<div class="t" style="left:1400px;top:569px;font-size:13px;line-height:16px;color:#000;">室内<span class="m" style="font-size:12px;letter-spacing:-0.2px">kt</span>板</div>
<div class="t" style="left:1502px;top:569px;font-size:13px;line-height:16px;color:#000;">平方</div>
<div class="t" style="left:1530px;top:572px;font-family:'Liberation Mono', monospace;font-size:12px;letter-spacing:-0.2px;line-height:16px;color:#000;width:43px;text-align:right">3.60</div>
<div class="t" style="left:1575px;top:572px;font-family:'Liberation Mono', monospace;font-size:12px;letter-spacing:-0.2px;line-height:16px;color:#000;width:43px;text-align:right">1.60</div>
<div class="t" style="left:1623px;top:572px;font-family:'Liberation Mono', monospace;font-size:12px;letter-spacing:-0.2px;line-height:16px;color:#000">1.00</div>
<div class="t" style="left:1668px;top:572px;font-family:'Liberation Mono', monospace;font-size:12px;letter-spacing:-0.2px;line-height:16px;color:#000">21.00</div>
<div class="t" style="left:1728px;top:572px;font-family:'Liberation Mono', monospace;font-size:12px;letter-spacing:-0.2px;line-height:16px;color:#000">0.00</div>
<div class="t" style="left:1788px;top:572px;font-family:'Liberation Mono', monospace;font-size:12px;letter-spacing:-0.2px;line-height:16px;color:#000">5.76</div>
<div class="t" style="left:1831px;top:572px;font-family:'Liberation Mono', monospace;font-size:12px;letter-spacing:-0.2px;line-height:16px;color:#000">0.00</div>
<div style="position:absolute;left:0px;top:589px;width:44px;height:22px;background:#f0f0f0"></div>
<div class="t" style="left:0px;top:594px;font-family:'Liberation Mono', monospace;font-size:12px;letter-spacing:-0.2px;line-height:16px;color:#000;width:44px;text-align:center">68</div>
<div style="position:absolute;left:110px;top:589px;width:65px;height:22px;background:#fff"></div>
<div style="position:absolute;left:1087px;top:589px;width:812px;height:22px;background:#fff"></div>
<div class="t" style="left:1090px;top:591px;font-size:13px;line-height:16px;color:#000;"><span class="m" style="font-size:12px;letter-spacing:-0.2px">2020-01-12</span></div>
<div class="t" style="left:1260px;top:591px;font-size:13px;line-height:16px;color:#000;"><span class="m" style="font-size:12px;letter-spacing:-0.2px">vivo </span>冯鑫华</div>
<div class="t" style="left:1340px;top:591px;font-size:13px;line-height:16px;color:#000;">喷绘</div>
<div class="t" style="left:1400px;top:591px;font-size:13px;line-height:16px;color:#000;">喷绘</div>
<div class="t" style="left:1502px;top:591px;font-size:13px;line-height:16px;color:#000;">平方</div>
<div class="t" style="left:1530px;top:594px;font-family:'Liberation Mono', monospace;font-size:12px;letter-spacing:-0.2px;line-height:16px;color:#000;width:43px;text-align:right">2.20</div>
<div class="t" style="left:1575px;top:594px;font-family:'Liberation Mono', monospace;font-size:12px;letter-spacing:-0.2px;line-height:16px;color:#000;width:43px;text-align:right">6.10</div>
<div class="t" style="left:1623px;top:594px;font-family:'Liberation Mono', monospace;font-size:12px;letter-spacing:-0.2px;line-height:16px;color:#000">1.00</div>
<div class="t" style="left:1668px;top:594px;font-family:'Liberation Mono', monospace;font-size:12px;letter-spacing:-0.2px;line-height:16px;color:#000">6.00</div>
<div class="t" style="left:1728px;top:594px;font-family:'Liberation Mono', monospace;font-size:12px;letter-spacing:-0.2px;line-height:16px;color:#000">0.00</div>
<div class="t" style="left:1788px;top:594px;font-family:'Liberation Mono', monospace;font-size:12px;letter-spacing:-0.2px;line-height:16px;color:#000">13.42</div>
<div class="t" style="left:1831px;top:594px;font-family:'Liberation Mono', monospace;font-size:12px;letter-spacing:-0.2px;line-height:16px;color:#000">0.00</div>
<div style="position:absolute;left:0px;top:611px;width:44px;height:22px;background:#f0f0f0"></div>
<div class="t" style="left:0px;top:616px;font-family:'Liberation Mono', monospace;font-size:12px;letter-spacing:-0.2px;line-height:16px;color:#000;width:44px;text-align:center">69</div>
<div style="position:absolute;left:110px;top:611px;width:65px;height:22px;background:#f2fbff"></div>
<div style="position:absolute;left:1087px;top:611px;width:812px;height:22px;background:#f2fbff"></div>
<div class="t" style="left:1090px;top:613px;font-size:13px;line-height:16px;color:#000;"><span class="m" style="font-size:12px;letter-spacing:-0.2px">2020-01-12</span></div>
<div class="t" style="left:1260px;top:613px;font-size:13px;line-height:16px;color:#000;"><span class="m" style="font-size:12px;letter-spacing:-0.2px">vivo </span>明泽华</div>
<div class="t" style="left:1340px;top:613px;font-size:13px;line-height:16px;color:#000;">室内写真</div>
<div class="t" style="left:1400px;top:613px;font-size:13px;line-height:16px;color:#000;">室内<span class="m" style="font-size:12px;letter-spacing:-0.2px">kt</span>板</div>
<div class="t" style="left:1502px;top:613px;font-size:13px;line-height:16px;color:#000;">平方</div>
<div class="t" style="left:1530px;top:616px;font-family:'Liberation Mono', monospace;font-size:12px;letter-spacing:-0.2px;line-height:16px;color:#000;width:43px;text-align:right">0.41</div>
<div class="t" style="left:1575px;top:616px;font-family:'Liberation Mono', monospace;font-size:12px;letter-spacing:-0.2px;line-height:16px;color:#000;width:43px;text-align:right">2.42</div>
<div class="t" style="left:1623px;top:616px;font-family:'Liberation Mono', monospace;font-size:12px;letter-spacing:-0.2px;line-height:16px;color:#000">2.00</div>
<div class="t" style="left:1668px;top:616px;font-family:'Liberation Mono', monospace;font-size:12px;letter-spacing:-0.2px;line-height:16px;color:#000">21.00</div>
<div class="t" style="left:1728px;top:616px;font-family:'Liberation Mono', monospace;font-size:12px;letter-spacing:-0.2px;line-height:16px;color:#000">0.00</div>
<div class="t" style="left:1788px;top:616px;font-family:'Liberation Mono', monospace;font-size:12px;letter-spacing:-0.2px;line-height:16px;color:#000">1.98</div>
<div class="t" style="left:1831px;top:616px;font-family:'Liberation Mono', monospace;font-size:12px;letter-spacing:-0.2px;line-height:16px;color:#000">0.00</div>
<div style="position:absolute;left:0px;top:633px;width:44px;height:22px;background:#f0f0f0"></div>
<div class="t" style="left:0px;top:638px;font-family:'Liberation Mono', monospace;font-size:12px;letter-spacing:-0.2px;line-height:16px;color:#000;width:44px;text-align:center">70</div>
<div style="position:absolute;left:110px;top:633px;width:65px;height:22px;background:#fff"></div>
<div style="position:absolute;left:1087px;top:633px;width:812px;height:22px;background:#fff"></div>
<div class="t" style="left:1090px;top:635px;font-size:13px;line-height:16px;color:#000;"><span class="m" style="font-size:12px;letter-spacing:-0.2px">2020-01-12</span></div>
<div class="t" style="left:1260px;top:635px;font-size:13px;line-height:16px;color:#000;"><span class="m" style="font-size:12px;letter-spacing:-0.2px">vivo </span>明泽华</div>
<div class="t" style="left:1340px;top:635px;font-size:13px;line-height:16px;color:#000;">室内写真</div>
<div class="t" style="left:1400px;top:635px;font-size:13px;line-height:16px;color:#000;">室内<span class="m" style="font-size:12px;letter-spacing:-0.2px">kt</span>板</div>
<div class="t" style="left:1502px;top:635px;font-size:13px;line-height:16px;color:#000;">平方</div>
<div class="t" style="left:1530px;top:638px;font-family:'Liberation Mono', monospace;font-size:12px;letter-spacing:-0.2px;line-height:16px;color:#000;width:43px;text-align:right">0.52</div>
<div class="t" style="left:1575px;top:638px;font-family:'Liberation Mono', monospace;font-size:12px;letter-spacing:-0.2px;line-height:16px;color:#000;width:43px;text-align:right">2.62</div>
<div class="t" style="left:1623px;top:638px;font-family:'Liberation Mono', monospace;font-size:12px;letter-spacing:-0.2px;line-height:16px;color:#000">1.00</div>
<div class="t" style="left:1668px;top:638px;font-family:'Liberation Mono', monospace;font-size:12px;letter-spacing:-0.2px;line-height:16px;color:#000">21.00</div>
<div class="t" style="left:1728px;top:638px;font-family:'Liberation Mono', monospace;font-size:12px;letter-spacing:-0.2px;line-height:16px;color:#000">0.00</div>
<div class="t" style="left:1788px;top:638px;font-family:'Liberation Mono', monospace;font-size:12px;letter-spacing:-0.2px;line-height:16px;color:#000">1.36</div>
<div class="t" style="left:1831px;top:638px;font-family:'Liberation Mono', monospace;font-size:12px;letter-spacing:-0.2px;line-height:16px;color:#000">0.00</div>
<div style="position:absolute;left:0px;top:655px;width:44px;height:22px;background:#f0f0f0"></div>
<div class="t" style="left:0px;top:660px;font-family:'Liberation Mono', monospace;font-size:12px;letter-spacing:-0.2px;line-height:16px;color:#000;width:44px;text-align:center">71</div>
<div style="position:absolute;left:110px;top:655px;width:65px;height:22px;background:#f2fbff"></div>
<div style="position:absolute;left:1087px;top:655px;width:812px;height:22px;background:#f2fbff"></div>
<div class="t" style="left:1090px;top:657px;font-size:13px;line-height:16px;color:#000;"><span class="m" style="font-size:12px;letter-spacing:-0.2px">2020-01-12</span></div>
<div class="t" style="left:1260px;top:657px;font-size:13px;line-height:16px;color:#000;"><span class="m" style="font-size:12px;letter-spacing:-0.2px">vivo </span>明泽华</div>
<div class="t" style="left:1340px;top:657px;font-size:13px;line-height:16px;color:#000;">室内写真</div>
<div class="t" style="left:1400px;top:657px;font-size:13px;line-height:16px;color:#000;">室内<span class="m" style="font-size:12px;letter-spacing:-0.2px">kt</span>板</div>
<div class="t" style="left:1502px;top:657px;font-size:13px;line-height:16px;color:#000;">平方</div>
<div class="t" style="left:1530px;top:660px;font-family:'Liberation Mono', monospace;font-size:12px;letter-spacing:-0.2px;line-height:16px;color:#000;width:43px;text-align:right">1.20</div>
<div class="t" style="left:1575px;top:660px;font-family:'Liberation Mono', monospace;font-size:12px;letter-spacing:-0.2px;line-height:16px;color:#000;width:43px;text-align:right">0.64</div>
<div class="t" style="left:1623px;top:660px;font-family:'Liberation Mono', monospace;font-size:12px;letter-spacing:-0.2px;line-height:16px;color:#000">3.00</div>
<div class="t" style="left:1668px;top:660px;font-family:'Liberation Mono', monospace;font-size:12px;letter-spacing:-0.2px;line-height:16px;color:#000">21.00</div>
<div class="t" style="left:1728px;top:660px;font-family:'Liberation Mono', monospace;font-size:12px;letter-spacing:-0.2px;line-height:16px;color:#000">0.00</div>
<div class="t" style="left:1788px;top:660px;font-family:'Liberation Mono', monospace;font-size:12px;letter-spacing:-0.2px;line-height:16px;color:#000">2.30</div>
<div class="t" style="left:1831px;top:660px;font-family:'Liberation Mono', monospace;font-size:12px;letter-spacing:-0.2px;line-height:16px;color:#000">0.00</div>
<div style="position:absolute;left:0px;top:677px;width:44px;height:22px;background:#f0f0f0"></div>
<div class="t" style="left:0px;top:682px;font-family:'Liberation Mono', monospace;font-size:12px;letter-spacing:-0.2px;line-height:16px;color:#000;width:44px;text-align:center">72</div>
<div style="position:absolute;left:110px;top:677px;width:65px;height:22px;background:#fff"></div>
<div style="position:absolute;left:1087px;top:677px;width:812px;height:22px;background:#fff"></div>
<div class="t" style="left:1090px;top:679px;font-size:13px;line-height:16px;color:#000;"><span class="m" style="font-size:12px;letter-spacing:-0.2px">2020-01-12</span></div>
<div class="t" style="left:1260px;top:679px;font-size:13px;line-height:16px;color:#000;"><span class="m" style="font-size:12px;letter-spacing:-0.2px">vivo </span>明泽华</div>
<div class="t" style="left:1340px;top:679px;font-size:13px;line-height:16px;color:#000;">室内写真</div>
<div class="t" style="left:1400px;top:679px;font-size:13px;line-height:16px;color:#000;">室内<span class="m" style="font-size:12px;letter-spacing:-0.2px">kt</span>板</div>
<div class="t" style="left:1502px;top:679px;font-size:13px;line-height:16px;color:#000;">平方</div>
<div class="t" style="left:1530px;top:682px;font-family:'Liberation Mono', monospace;font-size:12px;letter-spacing:-0.2px;line-height:16px;color:#000;width:43px;text-align:right">1.20</div>
<div class="t" style="left:1575px;top:682px;font-family:'Liberation Mono', monospace;font-size:12px;letter-spacing:-0.2px;line-height:16px;color:#000;width:43px;text-align:right">0.65</div>
<div class="t" style="left:1623px;top:682px;font-family:'Liberation Mono', monospace;font-size:12px;letter-spacing:-0.2px;line-height:16px;color:#000">2.00</div>
<div class="t" style="left:1668px;top:682px;font-family:'Liberation Mono', monospace;font-size:12px;letter-spacing:-0.2px;line-height:16px;color:#000">21.00</div>
<div class="t" style="left:1728px;top:682px;font-family:'Liberation Mono', monospace;font-size:12px;letter-spacing:-0.2px;line-height:16px;color:#000">0.00</div>
<div class="t" style="left:1788px;top:682px;font-family:'Liberation Mono', monospace;font-size:12px;letter-spacing:-0.2px;line-height:16px;color:#000">1.56</div>
<div class="t" style="left:1831px;top:682px;font-family:'Liberation Mono', monospace;font-size:12px;letter-spacing:-0.2px;line-height:16px;color:#000">0.00</div>
<div style="position:absolute;left:332px;top:39px;width:755px;height:44px;background:#fff"></div>
<div class="t" style="left:332px;top:55.0px;font-family:'Liberation Mono', monospace;font-size:12px;letter-spacing:-0.2px;line-height:16px;color:#000;width:155px;text-align:center;color:#0000cc;text-decoration:underline">NO.202001020083</div>
<div class="t" style="left:490px;top:55.0px;font-family:'Liberation Mono', monospace;font-size:12px;letter-spacing:-0.2px;line-height:16px;color:#000">2020-01-02</div>
<div class="t" style="left:667px;top:55.0px;font-family:'Liberation Mono', monospace;font-size:12px;letter-spacing:-0.2px;line-height:16px;color:#000;width:40px;text-align:center;text-decoration:underline">0</div>
<div class="t" style="left:710px;top:55.0px;font-family:'Liberation Mono', monospace;font-size:12px;letter-spacing:-0.2px;line-height:16px;color:#000"></div>
<div class="t" style="left:790px;top:55.0px;font-family:'Liberation Mono', monospace;font-size:12px;letter-spacing:-0.2px;line-height:16px;color:#000">0.00</div>
<div class="t" style="left:855px;top:55.0px;font-family:'Liberation Mono', monospace;font-size:12px;letter-spacing:-0.2px;line-height:16px;color:#000">0.00</div>
<div class="t" style="left:895px;top:55.0px;font-family:'Liberation Mono', monospace;font-size:12px;letter-spacing:-0.2px;line-height:16px;color:#000">1922.62</div>
<div class="t" style="left:960px;top:55.0px;font-family:'Liberation Mono', monospace;font-size:12px;letter-spacing:-0.2px;line-height:16px;color:#000">0.00</div>
<div class="t" style="left:1025px;top:55.0px;font-family:'Liberation Mono', monospace;font-size:12px;letter-spacing:-0.2px;line-height:16px;color:#000">1922.62</div>
<div style="position:absolute;left:332px;top:83px;width:755px;height:88px;background:#adfc63"></div>
<div class="t" style="left:332px;top:121.0px;font-family:'Liberation Mono', monospace;font-size:12px;letter-spacing:-0.2px;line-height:16px;color:#000;width:155px;text-align:center;color:#0000cc;text-decoration:underline">NO.202001020104</div>
<div class="t" style="left:490px;top:121.0px;font-family:'Liberation Mono', monospace;font-size:12px;letter-spacing:-0.2px;line-height:16px;color:#000">2020-01-02</div>
<div class="t" style="left:667px;top:121.0px;font-family:'Liberation Mono', monospace;font-size:12px;letter-spacing:-0.2px;line-height:16px;color:#000;width:40px;text-align:center;text-decoration:underline">1</div>
<div class="t" style="left:710px;top:121.0px;font-family:'Liberation Mono', monospace;font-size:12px;letter-spacing:-0.2px;line-height:16px;color:#000">2020-09-18</div>
<div class="t" style="left:790px;top:121.0px;font-family:'Liberation Mono', monospace;font-size:12px;letter-spacing:-0.2px;line-height:16px;color:#000">0.00</div>
<div class="t" style="left:855px;top:121.0px;font-family:'Liberation Mono', monospace;font-size:12px;letter-spacing:-0.2px;line-height:16px;color:#000">0.00</div>
<div class="t" style="left:895px;top:121.0px;font-family:'Liberation Mono', monospace;font-size:12px;letter-spacing:-0.2px;line-height:16px;color:#000">98.40</div>
<div class="t" style="left:960px;top:121.0px;font-family:'Liberation Mono', monospace;font-size:12px;letter-spacing:-0.2px;line-height:16px;color:#000">98.40</div>
<div class="t" style="left:1025px;top:121.0px;font-family:'Liberation Mono', monospace;font-size:12px;letter-spacing:-0.2px;line-height:16px;color:#000">0.00</div>
<div style="position:absolute;left:332px;top:171px;width:755px;height:22px;background:#fff"></div>
<div class="t" style="left:332px;top:176.0px;font-family:'Liberation Mono', monospace;font-size:12px;letter-spacing:-0.2px;line-height:16px;color:#000;width:155px;text-align:center;color:#0000cc;text-decoration:underline">NO.202001050075</div>
<div class="t" style="left:490px;top:176.0px;font-family:'Liberation Mono', monospace;font-size:12px;letter-spacing:-0.2px;line-height:16px;color:#000">2020-01-05</div>
<div class="t" style="left:667px;top:176.0px;font-family:'Liberation Mono', monospace;font-size:12px;letter-spacing:-0.2px;line-height:16px;color:#000;width:40px;text-align:center;text-decoration:underline">0</div>
<div class="t" style="left:710px;top:176.0px;font-family:'Liberation Mono', monospace;font-size:12px;letter-spacing:-0.2px;line-height:16px;color:#000"></div>
<div class="t" style="left:790px;top:176.0px;font-family:'Liberation Mono', monospace;font-size:12px;letter-spacing:-0.2px;line-height:16px;color:#000">0.00</div>
<div class="t" style="left:855px;top:176.0px;font-family:'Liberation Mono', monospace;font-size:12px;letter-spacing:-0.2px;line-height:16px;color:#000">0.00</div>
<div class="t" style="left:895px;top:176.0px;font-family:'Liberation Mono', monospace;font-size:12px;letter-spacing:-0.2px;line-height:16px;color:#000">5.02</div>
<div class="t" style="left:960px;top:176.0px;font-family:'Liberation Mono', monospace;font-size:12px;letter-spacing:-0.2px;line-height:16px;color:#000">0.00</div>
<div class="t" style="left:1025px;top:176.0px;font-family:'Liberation Mono', monospace;font-size:12px;letter-spacing:-0.2px;line-height:16px;color:#000">5.02</div>
<div style="position:absolute;left:332px;top:193px;width:755px;height:88px;background:#adfc63"></div>
<div class="t" style="left:332px;top:231.0px;font-family:'Liberation Mono', monospace;font-size:12px;letter-spacing:-0.2px;line-height:16px;color:#000;width:155px;text-align:center;color:#0000cc;text-decoration:underline">NO.202001050028</div>
<div class="t" style="left:490px;top:231.0px;font-family:'Liberation Mono', monospace;font-size:12px;letter-spacing:-0.2px;line-height:16px;color:#000">2020-01-05</div>
<div class="t" style="left:667px;top:231.0px;font-family:'Liberation Mono', monospace;font-size:12px;letter-spacing:-0.2px;line-height:16px;color:#000;width:40px;text-align:center;text-decoration:underline">1</div>
<div class="t" style="left:710px;top:231.0px;font-family:'Liberation Mono', monospace;font-size:12px;letter-spacing:-0.2px;line-height:16px;color:#000">2020-09-18</div>
<div class="t" style="left:790px;top:231.0px;font-family:'Liberation Mono', monospace;font-size:12px;letter-spacing:-0.2px;line-height:16px;color:#000">0.00</div>
<div class="t" style="left:855px;top:231.0px;font-family:'Liberation Mono', monospace;font-size:12px;letter-spacing:-0.2px;line-height:16px;color:#000">0.00</div>
<div class="t" style="left:895px;top:231.0px;font-family:'Liberation Mono', monospace;font-size:12px;letter-spacing:-0.2px;line-height:16px;color:#000">266.45</div>
<div class="t" style="left:960px;top:231.0px;font-family:'Liberation Mono', monospace;font-size:12px;letter-spacing:-0.2px;line-height:16px;color:#000">266.45</div>
<div class="t" style="left:1025px;top:231.0px;font-family:'Liberation Mono', monospace;font-size:12px;letter-spacing:-0.2px;line-height:16px;color:#000">0.00</div>
<div style="position:absolute;left:332px;top:281px;width:755px;height:88px;background:#fff"></div>
<div class="t" style="left:332px;top:319.0px;font-family:'Liberation Mono', monospace;font-size:12px;letter-spacing:-0.2px;line-height:16px;color:#000;width:155px;text-align:center;color:#0000cc;text-decoration:underline">NO.202001050029</div>
<div class="t" style="left:490px;top:319.0px;font-family:'Liberation Mono', monospace;font-size:12px;letter-spacing:-0.2px;line-height:16px;color:#000">2020-01-05</div>
<div class="t" style="left:667px;top:319.0px;font-family:'Liberation Mono', monospace;font-size:12px;letter-spacing:-0.2px;line-height:16px;color:#000;width:40px;text-align:center;text-decoration:underline">0</div>
<div class="t" style="left:710px;top:319.0px;font-family:'Liberation Mono', monospace;font-size:12px;letter-spacing:-0.2px;line-height:16px;color:#000"></div>
<div class="t" style="left:790px;top:319.0px;font-family:'Liberation Mono', monospace;font-size:12px;letter-spacing:-0.2px;line-height:16px;color:#000">0.00</div>
<div class="t" style="left:855px;top:319.0px;font-family:'Liberation Mono', monospace;font-size:12px;letter-spacing:-0.2px;line-height:16px;color:#000">0.00</div>
<div class="t" style="left:895px;top:319.0px;font-family:'Liberation Mono', monospace;font-size:12px;letter-spacing:-0.2px;line-height:16px;color:#000">60.48</div>
<div class="t" style="left:960px;top:319.0px;font-family:'Liberation Mono', monospace;font-size:12px;letter-spacing:-0.2px;line-height:16px;color:#000">0.00</div>
<div class="t" style="left:1025px;top:319.0px;font-family:'Liberation Mono', monospace;font-size:12px;letter-spacing:-0.2px;line-height:16px;color:#000">60.48</div>
<div style="position:absolute;left:332px;top:369px;width:755px;height:22px;background:#fff"></div>
<div class="t" style="left:332px;top:374.0px;font-family:'Liberation Mono', monospace;font-size:12px;letter-spacing:-0.2px;line-height:16px;color:#000;width:155px;text-align:center;color:#0000cc;text-decoration:underline">NO.202001060018</div>
<div class="t" style="left:490px;top:374.0px;font-family:'Liberation Mono', monospace;font-size:12px;letter-spacing:-0.2px;line-height:16px;color:#000">2020-01-06</div>
<div class="t" style="left:667px;top:374.0px;font-family:'Liberation Mono', monospace;font-size:12px;letter-spacing:-0.2px;line-height:16px;color:#000;width:40px;text-align:center;text-decoration:underline">0</div>
<div class="t" style="left:710px;top:374.0px;font-family:'Liberation Mono', monospace;font-size:12px;letter-spacing:-0.2px;line-height:16px;color:#000"></div>
<div class="t" style="left:790px;top:374.0px;font-family:'Liberation Mono', monospace;font-size:12px;letter-spacing:-0.2px;line-height:16px;color:#000">0.00</div>
<div class="t" style="left:855px;top:374.0px;font-family:'Liberation Mono', monospace;font-size:12px;letter-spacing:-0.2px;line-height:16px;color:#000">0.00</div>
<div class="t" style="left:895px;top:374.0px;font-family:'Liberation Mono', monospace;font-size:12px;letter-spacing:-0.2px;line-height:16px;color:#000">11.02</div>
<div class="t" style="left:960px;top:374.0px;font-family:'Liberation Mono', monospace;font-size:12px;letter-spacing:-0.2px;line-height:16px;color:#000">0.00</div>
<div class="t" style="left:1025px;top:374.0px;font-family:'Liberation Mono', monospace;font-size:12px;letter-spacing:-0.2px;line-height:16px;color:#000">11.02</div>
<div style="position:absolute;left:332px;top:391px;width:755px;height:22px;background:#fff"></div>
<div class="t" style="left:332px;top:396.0px;font-family:'Liberation Mono', monospace;font-size:12px;letter-spacing:-0.2px;line-height:16px;color:#000;width:155px;text-align:center;color:#0000cc;text-decoration:underline">NO.202001090106</div>
<div class="t" style="left:490px;top:396.0px;font-family:'Liberation Mono', monospace;font-size:12px;letter-spacing:-0.2px;line-height:16px;color:#000">2020-01-09</div>
<div class="t" style="left:667px;top:396.0px;font-family:'Liberation Mono', monospace;font-size:12px;letter-spacing:-0.2px;line-height:16px;color:#000;width:40px;text-align:center;text-decoration:underline">0</div>
<div class="t" style="left:710px;top:396.0px;font-family:'Liberation Mono', monospace;font-size:12px;letter-spacing:-0.2px;line-height:16px;color:#000"></div>
<div class="t" style="left:790px;top:396.0px;font-family:'Liberation Mono', monospace;font-size:12px;letter-spacing:-0.2px;line-height:16px;color:#000">0.00</div>
<div class="t" style="left:855px;top:396.0px;font-family:'Liberation Mono', monospace;font-size:12px;letter-spacing:-0.2px;line-height:16px;color:#000">0.00</div>
<div class="t" style="left:895px;top:396.0px;font-family:'Liberation Mono', monospace;font-size:12px;letter-spacing:-0.2px;line-height:16px;color:#000">323.95</div>
<div class="t" style="left:960px;top:396.0px;font-family:'Liberation Mono', monospace;font-size:12px;letter-spacing:-0.2px;line-height:16px;color:#000">0.00</div>
<div class="t" style="left:1025px;top:396.0px;font-family:'Liberation Mono', monospace;font-size:12px;letter-spacing:-0.2px;line-height:16px;color:#000">323.95</div>
<div style="position:absolute;left:332px;top:413px;width:755px;height:22px;background:#fff"></div>
<div class="t" style="left:332px;top:418.0px;font-family:'Liberation Mono', monospace;font-size:12px;letter-spacing:-0.2px;line-height:16px;color:#000;width:155px;text-align:center;color:#0000cc;text-decoration:underline">NO.202001090107</div>
<div class="t" style="left:490px;top:418.0px;font-family:'Liberation Mono', monospace;font-size:12px;letter-spacing:-0.2px;line-height:16px;color:#000">2020-01-09</div>
<div class="t" style="left:667px;top:418.0px;font-family:'Liberation Mono', monospace;font-size:12px;letter-spacing:-0.2px;line-height:16px;color:#000;width:40px;text-align:center;text-decoration:underline">0</div>
<div class="t" style="left:710px;top:418.0px;font-family:'Liberation Mono', monospace;font-size:12px;letter-spacing:-0.2px;line-height:16px;color:#000"></div>
<div class="t" style="left:790px;top:418.0px;font-family:'Liberation Mono', monospace;font-size:12px;letter-spacing:-0.2px;line-height:16px;color:#000">0.00</div>
<div class="t" style="left:855px;top:418.0px;font-family:'Liberation Mono', monospace;font-size:12px;letter-spacing:-0.2px;line-height:16px;color:#000">0.00</div>
<div class="t" style="left:895px;top:418.0px;font-family:'Liberation Mono', monospace;font-size:12px;letter-spacing:-0.2px;line-height:16px;color:#000">11.34</div>
<div class="t" style="left:960px;top:418.0px;font-family:'Liberation Mono', monospace;font-size:12px;letter-spacing:-0.2px;line-height:16px;color:#000">0.00</div>
<div class="t" style="left:1025px;top:418.0px;font-family:'Liberation Mono', monospace;font-size:12px;letter-spacing:-0.2px;line-height:16px;color:#000">11.34</div>
<div style="position:absolute;left:332px;top:435px;width:755px;height:132px;background:#fff"></div>
<div class="t" style="left:332px;top:495.0px;font-family:'Liberation Mono', monospace;font-size:12px;letter-spacing:-0.2px;line-height:16px;color:#000;width:155px;text-align:center;color:#0000cc;text-decoration:underline">NO.202001100068</div>
<div class="t" style="left:490px;top:495.0px;font-family:'Liberation Mono', monospace;font-size:12px;letter-spacing:-0.2px;line-height:16px;color:#000">2020-01-10</div>
<div class="t" style="left:667px;top:495.0px;font-family:'Liberation Mono', monospace;font-size:12px;letter-spacing:-0.2px;line-height:16px;color:#000;width:40px;text-align:center;text-decoration:underline">0</div>
<div class="t" style="left:710px;top:495.0px;font-family:'Liberation Mono', monospace;font-size:12px;letter-spacing:-0.2px;line-height:16px;color:#000"></div>
<div class="t" style="left:790px;top:495.0px;font-family:'Liberation Mono', monospace;font-size:12px;letter-spacing:-0.2px;line-height:16px;color:#000">0.00</div>
<div class="t" style="left:855px;top:495.0px;font-family:'Liberation Mono', monospace;font-size:12px;letter-spacing:-0.2px;line-height:16px;color:#000">0.00</div>
<div class="t" style="left:895px;top:495.0px;font-family:'Liberation Mono', monospace;font-size:12px;letter-spacing:-0.2px;line-height:16px;color:#000">68.04</div>
<div class="t" style="left:960px;top:495.0px;font-family:'Liberation Mono', monospace;font-size:12px;letter-spacing:-0.2px;line-height:16px;color:#000">0.00</div>
<div class="t" style="left:1025px;top:495.0px;font-family:'Liberation Mono', monospace;font-size:12px;letter-spacing:-0.2px;line-height:16px;color:#000">68.04</div>
<div style="position:absolute;left:332px;top:567px;width:755px;height:132px;background:#fff"></div>
<div class="t" style="left:332px;top:627.0px;font-family:'Liberation Mono', monospace;font-size:12px;letter-spacing:-0.2px;line-height:16px;color:#000;width:155px;text-align:center;color:#0000cc;text-decoration:underline">NO.202001120052</div>
<div class="t" style="left:490px;top:627.0px;font-family:'Liberation Mono', monospace;font-size:12px;letter-spacing:-0.2px;line-height:16px;color:#000">2020-01-12</div>
<div class="t" style="left:667px;top:627.0px;font-family:'Liberation Mono', monospace;font-size:12px;letter-spacing:-0.2px;line-height:16px;color:#000;width:40px;text-align:center;text-decoration:underline">0</div>
<div class="t" style="left:710px;top:627.0px;font-family:'Liberation Mono', monospace;font-size:12px;letter-spacing:-0.2px;line-height:16px;color:#000"></div>
<div class="t" style="left:790px;top:627.0px;font-family:'Liberation Mono', monospace;font-size:12px;letter-spacing:-0.2px;line-height:16px;color:#000">0.00</div>
<div class="t" style="left:855px;top:627.0px;font-family:'Liberation Mono', monospace;font-size:12px;letter-spacing:-0.2px;line-height:16px;color:#000">0.00</div>
<div class="t" style="left:895px;top:627.0px;font-family:'Liberation Mono', monospace;font-size:12px;letter-spacing:-0.2px;line-height:16px;color:#000">2207.98</div>
<div class="t" style="left:960px;top:627.0px;font-family:'Liberation Mono', monospace;font-size:12px;letter-spacing:-0.2px;line-height:16px;color:#000">0.00</div>
<div class="t" style="left:1025px;top:627.0px;font-family:'Liberation Mono', monospace;font-size:12px;letter-spacing:-0.2px;line-height:16px;color:#000">2207.98</div>
<div style="position:absolute;left:332px;top:83px;width:755px;height:1px;background:#a0a0a0"></div>
<div style="position:absolute;left:332px;top:171px;width:755px;height:1px;background:#a0a0a0"></div>
<div style="position:absolute;left:332px;top:193px;width:755px;height:1px;background:#a0a0a0"></div>
<div style="position:absolute;left:332px;top:281px;width:755px;height:1px;background:#a0a0a0"></div>
<div style="position:absolute;left:332px;top:369px;width:755px;height:1px;background:#a0a0a0"></div>
<div style="position:absolute;left:332px;top:391px;width:755px;height:1px;background:#a0a0a0"></div>
<div style="position:absolute;left:332px;top:413px;width:755px;height:1px;background:#a0a0a0"></div>
<div style="position:absolute;left:332px;top:435px;width:755px;height:1px;background:#a0a0a0"></div>
<div style="position:absolute;left:332px;top:567px;width:755px;height:1px;background:#a0a0a0"></div>
<div style="position:absolute;left:332px;top:699px;width:755px;height:1px;background:#a0a0a0"></div>
<div class="t" style="left:48px;top:362px;font-size:13px;line-height:16px;color:#000">月结客户</div>
<div class="t" style="left:178px;top:363px;font-family:'Liberation Mono', monospace;font-size:12px;letter-spacing:-0.2px;line-height:16px;color:#000">vivo</div>
<div class="t" style="left:270px;top:363px;font-family:'Liberation Mono', monospace;font-size:12px;letter-spacing:-0.2px;line-height:16px;color:#000">8709.39</div>
<div style="position:absolute;left:0px;top:39px;width:1899px;height:1px;background:#a0a0a0"></div>
<div style="position:absolute;left:0px;top:61px;width:44px;height:1px;background:#a0a0a0"></div>
<div style="position:absolute;left:110px;top:61px;width:65px;height:1px;background:#a0a0a0"></div>
<div style="position:absolute;left:1087px;top:61px;width:812px;height:1px;background:#a0a0a0"></div>
<div style="position:absolute;left:0px;top:83px;width:44px;height:1px;background:#a0a0a0"></div>
<div style="position:absolute;left:110px;top:83px;width:65px;height:1px;background:#a0a0a0"></div>
<div style="position:absolute;left:1087px;top:83px;width:812px;height:1px;background:#a0a0a0"></div>
<div style="position:absolute;left:0px;top:105px;width:44px;height:1px;background:#a0a0a0"></div>
<div style="position:absolute;left:110px;top:105px;width:65px;height:1px;background:#a0a0a0"></div>
<div style="position:absolute;left:1087px;top:105px;width:812px;height:1px;background:#a0a0a0"></div>
<div style="position:absolute;left:0px;top:127px;width:44px;height:1px;background:#a0a0a0"></div>
<div style="position:absolute;left:110px;top:127px;width:65px;height:1px;background:#a0a0a0"></div>
<div style="position:absolute;left:1087px;top:127px;width:812px;height:1px;background:#a0a0a0"></div>
<div style="position:absolute;left:0px;top:149px;width:44px;height:1px;background:#a0a0a0"></div>
<div style="position:absolute;left:110px;top:149px;width:65px;height:1px;background:#a0a0a0"></div>
<div style="position:absolute;left:1087px;top:149px;width:812px;height:1px;background:#a0a0a0"></div>
<div style="position:absolute;left:0px;top:171px;width:44px;height:1px;background:#a0a0a0"></div>
<div style="position:absolute;left:110px;top:171px;width:65px;height:1px;background:#a0a0a0"></div>
<div style="position:absolute;left:1087px;top:171px;width:812px;height:1px;background:#a0a0a0"></div>
<div style="position:absolute;left:0px;top:193px;width:44px;height:1px;background:#a0a0a0"></div>
<div style="position:absolute;left:110px;top:193px;width:65px;height:1px;background:#a0a0a0"></div>
<div style="position:absolute;left:1087px;top:193px;width:812px;height:1px;background:#a0a0a0"></div>
<div style="position:absolute;left:0px;top:215px;width:44px;height:1px;background:#a0a0a0"></div>
<div style="position:absolute;left:110px;top:215px;width:65px;height:1px;background:#a0a0a0"></div>
<div style="position:absolute;left:1087px;top:215px;width:812px;height:1px;background:#a0a0a0"></div>
<div style="position:absolute;left:0px;top:237px;width:44px;height:1px;background:#a0a0a0"></div>
<div style="position:absolute;left:110px;top:237px;width:65px;height:1px;background:#a0a0a0"></div>
<div style="position:absolute;left:1087px;top:237px;width:812px;height:1px;background:#a0a0a0"></div>
<div style="position:absolute;left:0px;top:259px;width:44px;height:1px;background:#a0a0a0"></div>
<div style="position:absolute;left:110px;top:259px;width:65px;height:1px;background:#a0a0a0"></div>
<div style="position:absolute;left:1087px;top:259px;width:812px;height:1px;background:#a0a0a0"></div>
<div style="position:absolute;left:0px;top:281px;width:44px;height:1px;background:#a0a0a0"></div>
<div style="position:absolute;left:110px;top:281px;width:65px;height:1px;background:#a0a0a0"></div>
<div style="position:absolute;left:1087px;top:281px;width:812px;height:1px;background:#a0a0a0"></div>
<div style="position:absolute;left:0px;top:303px;width:44px;height:1px;background:#a0a0a0"></div>
<div style="position:absolute;left:110px;top:303px;width:65px;height:1px;background:#a0a0a0"></div>
<div style="position:absolute;left:1087px;top:303px;width:812px;height:1px;background:#a0a0a0"></div>
<div style="position:absolute;left:0px;top:325px;width:44px;height:1px;background:#a0a0a0"></div>
<div style="position:absolute;left:110px;top:325px;width:65px;height:1px;background:#a0a0a0"></div>
<div style="position:absolute;left:1087px;top:325px;width:812px;height:1px;background:#a0a0a0"></div>
<div style="position:absolute;left:0px;top:347px;width:44px;height:1px;background:#a0a0a0"></div>
<div style="position:absolute;left:110px;top:347px;width:65px;height:1px;background:#a0a0a0"></div>
<div style="position:absolute;left:1087px;top:347px;width:812px;height:1px;background:#a0a0a0"></div>
<div style="position:absolute;left:0px;top:369px;width:44px;height:1px;background:#a0a0a0"></div>
<div style="position:absolute;left:110px;top:369px;width:65px;height:1px;background:#a0a0a0"></div>
<div style="position:absolute;left:1087px;top:369px;width:812px;height:1px;background:#a0a0a0"></div>
<div style="position:absolute;left:0px;top:391px;width:44px;height:1px;background:#a0a0a0"></div>
<div style="position:absolute;left:110px;top:391px;width:65px;height:1px;background:#a0a0a0"></div>
<div style="position:absolute;left:1087px;top:391px;width:812px;height:1px;background:#a0a0a0"></div>
<div style="position:absolute;left:0px;top:413px;width:44px;height:1px;background:#a0a0a0"></div>
<div style="position:absolute;left:110px;top:413px;width:65px;height:1px;background:#a0a0a0"></div>
<div style="position:absolute;left:1087px;top:413px;width:812px;height:1px;background:#a0a0a0"></div>
<div style="position:absolute;left:0px;top:435px;width:44px;height:1px;background:#a0a0a0"></div>
<div style="position:absolute;left:110px;top:435px;width:65px;height:1px;background:#a0a0a0"></div>
<div style="position:absolute;left:1087px;top:435px;width:812px;height:1px;background:#a0a0a0"></div>
<div style="position:absolute;left:0px;top:457px;width:44px;height:1px;background:#a0a0a0"></div>
<div style="position:absolute;left:110px;top:457px;width:65px;height:1px;background:#a0a0a0"></div>
<div style="position:absolute;left:1087px;top:457px;width:812px;height:1px;background:#a0a0a0"></div>
<div style="position:absolute;left:0px;top:479px;width:44px;height:1px;background:#a0a0a0"></div>
<div style="position:absolute;left:110px;top:479px;width:65px;height:1px;background:#a0a0a0"></div>
<div style="position:absolute;left:1087px;top:479px;width:812px;height:1px;background:#a0a0a0"></div>
<div style="position:absolute;left:0px;top:501px;width:44px;height:1px;background:#a0a0a0"></div>
<div style="position:absolute;left:110px;top:501px;width:65px;height:1px;background:#a0a0a0"></div>
<div style="position:absolute;left:1087px;top:501px;width:812px;height:1px;background:#a0a0a0"></div>
<div style="position:absolute;left:0px;top:523px;width:44px;height:1px;background:#a0a0a0"></div>
<div style="position:absolute;left:110px;top:523px;width:65px;height:1px;background:#a0a0a0"></div>
<div style="position:absolute;left:1087px;top:523px;width:812px;height:1px;background:#a0a0a0"></div>
<div style="position:absolute;left:0px;top:545px;width:44px;height:1px;background:#a0a0a0"></div>
<div style="position:absolute;left:110px;top:545px;width:65px;height:1px;background:#a0a0a0"></div>
<div style="position:absolute;left:1087px;top:545px;width:812px;height:1px;background:#a0a0a0"></div>
<div style="position:absolute;left:0px;top:567px;width:44px;height:1px;background:#a0a0a0"></div>
<div style="position:absolute;left:110px;top:567px;width:65px;height:1px;background:#a0a0a0"></div>
<div style="position:absolute;left:1087px;top:567px;width:812px;height:1px;background:#a0a0a0"></div>
<div style="position:absolute;left:0px;top:589px;width:44px;height:1px;background:#a0a0a0"></div>
<div style="position:absolute;left:110px;top:589px;width:65px;height:1px;background:#a0a0a0"></div>
<div style="position:absolute;left:1087px;top:589px;width:812px;height:1px;background:#a0a0a0"></div>
<div style="position:absolute;left:0px;top:611px;width:44px;height:1px;background:#a0a0a0"></div>
<div style="position:absolute;left:110px;top:611px;width:65px;height:1px;background:#a0a0a0"></div>
<div style="position:absolute;left:1087px;top:611px;width:812px;height:1px;background:#a0a0a0"></div>
<div style="position:absolute;left:0px;top:633px;width:44px;height:1px;background:#a0a0a0"></div>
<div style="position:absolute;left:110px;top:633px;width:65px;height:1px;background:#a0a0a0"></div>
<div style="position:absolute;left:1087px;top:633px;width:812px;height:1px;background:#a0a0a0"></div>
<div style="position:absolute;left:0px;top:655px;width:44px;height:1px;background:#a0a0a0"></div>
<div style="position:absolute;left:110px;top:655px;width:65px;height:1px;background:#a0a0a0"></div>
<div style="position:absolute;left:1087px;top:655px;width:812px;height:1px;background:#a0a0a0"></div>
<div style="position:absolute;left:0px;top:677px;width:44px;height:1px;background:#a0a0a0"></div>
<div style="position:absolute;left:110px;top:677px;width:65px;height:1px;background:#a0a0a0"></div>
<div style="position:absolute;left:1087px;top:677px;width:812px;height:1px;background:#a0a0a0"></div>
<div style="position:absolute;left:0px;top:699px;width:44px;height:1px;background:#a0a0a0"></div>
<div style="position:absolute;left:110px;top:699px;width:65px;height:1px;background:#a0a0a0"></div>
<div style="position:absolute;left:1087px;top:699px;width:812px;height:1px;background:#a0a0a0"></div>
<div style="position:absolute;left:44px;top:4px;width:1px;height:691px;background:#a0a0a0"></div>
<div style="position:absolute;left:110px;top:4px;width:1px;height:691px;background:#a0a0a0"></div>
<div style="position:absolute;left:175px;top:4px;width:1px;height:691px;background:#a0a0a0"></div>
<div style="position:absolute;left:267px;top:4px;width:1px;height:691px;background:#a0a0a0"></div>
<div style="position:absolute;left:332px;top:4px;width:1px;height:691px;background:#a0a0a0"></div>
<div style="position:absolute;left:487px;top:4px;width:1px;height:691px;background:#a0a0a0"></div>
<div style="position:absolute;left:567px;top:4px;width:1px;height:691px;background:#a0a0a0"></div>
<div style="position:absolute;left:667px;top:4px;width:1px;height:691px;background:#a0a0a0"></div>
<div style="position:absolute;left:707px;top:4px;width:1px;height:691px;background:#a0a0a0"></div>
<div style="position:absolute;left:787px;top:4px;width:1px;height:691px;background:#a0a0a0"></div>
<div style="position:absolute;left:852px;top:4px;width:1px;height:691px;background:#a0a0a0"></div>
<div style="position:absolute;left:892px;top:4px;width:1px;height:691px;background:#a0a0a0"></div>
<div style="position:absolute;left:957px;top:4px;width:1px;height:691px;background:#a0a0a0"></div>
<div style="position:absolute;left:1022px;top:4px;width:1px;height:691px;background:#a0a0a0"></div>
<div style="position:absolute;left:1087px;top:4px;width:1px;height:691px;background:#a0a0a0"></div>
<div style="position:absolute;left:1167px;top:4px;width:1px;height:691px;background:#a0a0a0"></div>
<div style="position:absolute;left:1257px;top:4px;width:1px;height:691px;background:#a0a0a0"></div>
<div style="position:absolute;left:1337px;top:4px;width:1px;height:691px;background:#a0a0a0"></div>
<div style="position:absolute;left:1397px;top:4px;width:1px;height:691px;background:#a0a0a0"></div>
<div style="position:absolute;left:1499px;top:4px;width:1px;height:691px;background:#a0a0a0"></div>
<div style="position:absolute;left:1530px;top:4px;width:1px;height:691px;background:#a0a0a0"></div>
<div style="position:absolute;left:1575px;top:4px;width:1px;height:691px;background:#a0a0a0"></div>
<div style="position:absolute;left:1620px;top:4px;width:1px;height:691px;background:#a0a0a0"></div>
<div style="position:absolute;left:1665px;top:4px;width:1px;height:691px;background:#a0a0a0"></div>
<div style="position:absolute;left:1725px;top:4px;width:1px;height:691px;background:#a0a0a0"></div>
<div style="position:absolute;left:1785px;top:4px;width:1px;height:691px;background:#a0a0a0"></div>
<div style="position:absolute;left:1828px;top:4px;width:1px;height:691px;background:#a0a0a0"></div>
</div>
<div style="position:absolute;left:37px;top:273px;width:1877px;height:1px;background:#a8a8a8"></div>
<div style="position:absolute;left:37px;top:273px;width:1px;height:733px;background:#a8a8a8"></div>
<div style="position:absolute;left:1913px;top:273px;width:1px;height:733px;background:#a8a8a8"></div>
<div style="position:absolute;left:38px;top:965px;width:1859px;height:2px;background:#a0a0a0"></div>
<div style="position:absolute;left:1897px;top:274px;width:16px;height:692px;background:#f7f7f7"></div>
<div style="position:absolute;left:1897px;top:274px;width:16px;height:16px;background:#f0f0f0;border-right:1px solid #a0a0a0;border-bottom:1px solid #a0a0a0"></div>
<svg style="position:absolute;left:1897px;top:274px" width="16" height="16"><path d="M4 11 L8 6 L12 11 Z" fill="#000"/></svg>
<div style="position:absolute;left:1897px;top:293px;width:16px;height:8px;background:#ececec;border-right:1px solid #a0a0a0;border-bottom:1px solid #a0a0a0"></div>
<div style="position:absolute;left:38px;top:967px;width:1875px;height:21px;background:#f0f0f0"></div>
<div style="position:absolute;left:82px;top:967px;width:1px;height:21px;background:#a0a0a0"></div>
<div style="position:absolute;left:215px;top:968px;width:89px;height:18px;background:#f0f0f0;border-left:1px solid #a0a0a0;border-top:1px solid #a0a0a0"></div>
<div style="position:absolute;left:246px;top:970px;white-space:nowrap;font-size:13px;color:#000;line-height:16px">合&nbsp;&nbsp;计</div>
<div style="position:absolute;left:307px;top:968px;width:62px;height:18px;background:#f0f0f0;border-left:1px solid #a0a0a0;border-top:1px solid #a0a0a0"></div>
<div style="position:absolute;left:310px;top:971px;white-space:nowrap;font-size:12px;color:#000;line-height:16px;font-family:'Liberation Mono', monospace;letter-spacing:-0.2px;">2360788.</div>
<div style="position:absolute;left:372px;top:968px;width:152px;height:18px;background:#f0f0f0;border-left:1px solid #a0a0a0;border-top:1px solid #a0a0a0"></div>
<div style="position:absolute;left:382px;top:970px;white-space:nowrap;font-size:13px;color:#000;line-height:16px"><span class="m" style="font-size:12px;letter-spacing:-0.2px">4359</span>张单</div>
<div style="position:absolute;left:827px;top:968px;width:62px;height:18px;background:#ff0000"></div>
<div style="position:absolute;left:829px;top:971px;white-space:nowrap;font-size:12px;color:#fff;line-height:16px;font-family:'Liberation Mono', monospace;text-decoration:line-through">3.03</div>
<div style="position:absolute;left:892px;top:968px;width:37px;height:18px;background:#ff8000;overflow:hidden"><div class="t" style="left:2px;top:3px;font-size:12px;color:#fff;line-height:16px;font-family:'Liberation Mono', monospace;letter-spacing:-0.2px">400.0</div></div>
<div style="position:absolute;left:932px;top:968px;width:62px;height:18px;background:#ff8000;overflow:hidden"><div class="t" style="left:2px;top:3px;font-size:12px;color:#fff;line-height:16px;font-family:'Liberation Mono', monospace;letter-spacing:-0.2px">2985003.</div></div>
<div style="position:absolute;left:997px;top:968px;width:62px;height:18px;background:#ff8000;overflow:hidden"><div class="t" style="left:2px;top:3px;font-size:12px;color:#fff;line-height:16px;font-family:'Liberation Mono', monospace;letter-spacing:-0.2px">619214.9</div></div>
<div style="position:absolute;left:1062px;top:968px;width:62px;height:18px;background:#ff8000;overflow:hidden"><div class="t" style="left:2px;top:3px;font-size:12px;color:#fff;line-height:16px;font-family:'Liberation Mono', monospace;letter-spacing:-0.2px">2365788.</div></div>
<div style="position:absolute;left:1660px;top:968px;width:42px;height:18px;background:#f0f0f0;border-left:1px solid #a0a0a0;border-top:1px solid #a0a0a0"></div>
<div style="position:absolute;left:1663px;top:971px;white-space:nowrap;font-size:12px;color:#000;line-height:16px;font-family:'Liberation Mono', monospace;letter-spacing:-0.2px;">79221.</div>
<div style="position:absolute;left:1898px;top:972px;width:15px;height:16px;background:#f0f0f0;border-right:1px solid #a0a0a0;border-bottom:1px solid #a0a0a0"></div>
<svg style="position:absolute;left:1897px;top:972px" width="16" height="16"><path d="M4 6 L8 11 L12 6 Z" fill="#000"/></svg>
<div style="position:absolute;left:37px;top:988px;width:1877px;height:1px;background:#a8a8a8"></div>
<div style="position:absolute;left:38px;top:989px;width:1859px;height:16px;background:#f4f4f4"></div>
<div style="position:absolute;left:38px;top:989px;width:16px;height:16px;background:#f0f0f0;border-right:1px solid #a0a0a0;border-bottom:1px solid #a0a0a0"></div>
<svg style="position:absolute;left:38px;top:989px" width="16" height="16"><path d="M10 4 L5 8 L10 12 Z" fill="#000"/></svg>
<div style="position:absolute;left:55px;top:990px;width:1328px;height:14px;background:#ececec;border-right:1px solid #a0a0a0;border-bottom:1px solid #a0a0a0"></div>
<div style="position:absolute;left:1880px;top:989px;width:17px;height:16px;background:#f0f0f0;border-right:1px solid #a0a0a0;border-bottom:1px solid #a0a0a0"></div>
<svg style="position:absolute;left:1880px;top:989px" width="16" height="16"><path d="M6 4 L11 8 L6 12 Z" fill="#000"/></svg>
<div style="position:absolute;left:1897px;top:989px;width:16px;height:16px;background:#f0f0f0"></div>
<div style="position:absolute;left:37px;top:1005px;width:1877px;height:1px;background:#a8a8a8"></div>
<svg style="position:absolute;left:1910px;top:820px" width="10" height="58">
<path d="M10 0 L3 0 Q0 0 0 3 L0 55 Q0 58 3 58 L10 58 Z" fill="#4a5262"/>
<g stroke-width="1"><line x1="4" y1="6" x2="10" y2="6" stroke="#2a3040"/><line x1="4" y1="8" x2="10" y2="8" stroke="#2a3040"/><line x1="4" y1="10" x2="10" y2="10" stroke="#2a3040"/><line x1="4" y1="12" x2="10" y2="12" stroke="#2a3040"/><line x1="4" y1="14" x2="10" y2="14" stroke="#2a3040"/><line x1="4" y1="16" x2="10" y2="16" stroke="#2a3040"/><line x1="4" y1="18" x2="10" y2="18" stroke="#2a3040"/><line x1="4" y1="20" x2="10" y2="20" stroke="#2a3040"/><line x1="4" y1="22" x2="10" y2="22" stroke="#2a3040"/><line x1="4" y1="24" x2="10" y2="24" stroke="#2a3040"/><line x1="4" y1="26" x2="10" y2="26" stroke="#2a3040"/><line x1="4" y1="28" x2="10" y2="28" stroke="#2a3040"/><line x1="4" y1="30" x2="10" y2="30" stroke="#a8e840"/><line x1="4" y1="32" x2="10" y2="32" stroke="#a8e840"/><line x1="4" y1="34" x2="10" y2="34" stroke="#a8e840"/><line x1="4" y1="36" x2="10" y2="36" stroke="#80d890"/><line x1="4" y1="38" x2="10" y2="38" stroke="#80d890"/><line x1="4" y1="40" x2="10" y2="40" stroke="#80d890"/><line x1="4" y1="42" x2="10" y2="42" stroke="#80d890"/><line x1="4" y1="44" x2="10" y2="44" stroke="#40b8e0"/><line x1="4" y1="46" x2="10" y2="46" stroke="#40b8e0"/><line x1="4" y1="48" x2="10" y2="48" stroke="#40b8e0"/></g></svg>
<div style="position:absolute;left:0px;top:1011px;width:1920px;height:29px;background:#0f2149"></div>
<svg style="position:absolute;left:0;top:1011px" width="1920" height="29">
<g fill="none" stroke="#fff" stroke-width="1.4">
<path d="M10 9 L23 9 M19 5.5 L23 9 M10 15 L23 15 M10 15 L14 18.5"/>
<path d="M41 21 Q37 21 37.5 17.5 Q38 14.5 41 14.5 Q42 10 46.5 10 Q51 10 51.5 14.5 Q55 14.5 55 18 Q55 21 52 21 Z"/>
<path d="M278 14 L286 6 L292 6 L292 12 L284 20 Z M280 17 L285 22 L292 15"/>
<path d="M477 17 L477 22 L491 22 L491 17 M484 6 L484 17 M480 13 L484 17 L488 13"/>
<path d="M567 5 L574 8 L574 15 Q574 21 567 24 Q560 21 560 15 L560 8 Z"/>
<circle cx="719" cy="10" r="4.5"/><path d="M711 23 Q713 15 719 15 Q725 15 727 23 M709 12 Q709 6 714 5"/>
<rect x="794" y="13" width="13" height="10"/><path d="M796.5 13 L796.5 9 Q800.5 4 804.5 9 L804.5 13"/>
<path d="M1753 6 Q1759 6 1759 12 Q1759 16 1755 18 L1755 20 Q1760 21 1760 23 Q1760 25 1753 25 Q1746 25 1746 23 Q1746 21 1751 20 L1751 18 Q1747 16 1747 12 Q1747 6 1753 6 Z"/>
<circle cx="1843" cy="14" r="9"/><path d="M1837 14 L1849 14 M1845 10 L1849 14 L1845 18"/>
</g>
<text x="567" y="18" font-size="8" text-anchor="middle" fill="#fff" font-family="Liberation Sans">正</text>
</svg>
<div style="position:absolute;left:60px;top:1018px;white-space:nowrap;font-size:13px;color:#fff;line-height:16px">服务器:<span class="m" style="font-size:12px">127.0.0.1:7798</span></div>
<div style="position:absolute;left:296px;top:1018px;white-space:nowrap;font-size:13px;color:#fff;line-height:16px">账套: 演示账套</div>
<div style="position:absolute;left:497px;top:1018px;white-space:nowrap;font-size:13px;color:#fff;line-height:16px">导入证书</div>
<div style="position:absolute;left:579px;top:1018px;white-space:nowrap;font-size:13px;color:#84e62a;line-height:16px">到期日期<span class="m" style="font-size:12px;letter-spacing:-0.2px">2020-09-19</span></div>
<div style="position:absolute;left:730px;top:1018px;white-space:nowrap;font-size:13px;color:#fff;line-height:16px">在线接单</div>
<div style="position:absolute;left:812px;top:1018px;white-space:nowrap;font-size:13px;color:#fff;line-height:16px">锁屏</div>
<div style="position:absolute;left:1765px;top:1018px;white-space:nowrap;font-size:13px;color:#fff;line-height:16px">超级用户</div>
<div style="position:absolute;left:1855px;top:1018px;white-space:nowrap;font-size:13px;color:#fff;line-height:16px">切换用户</div>
</body></html>
